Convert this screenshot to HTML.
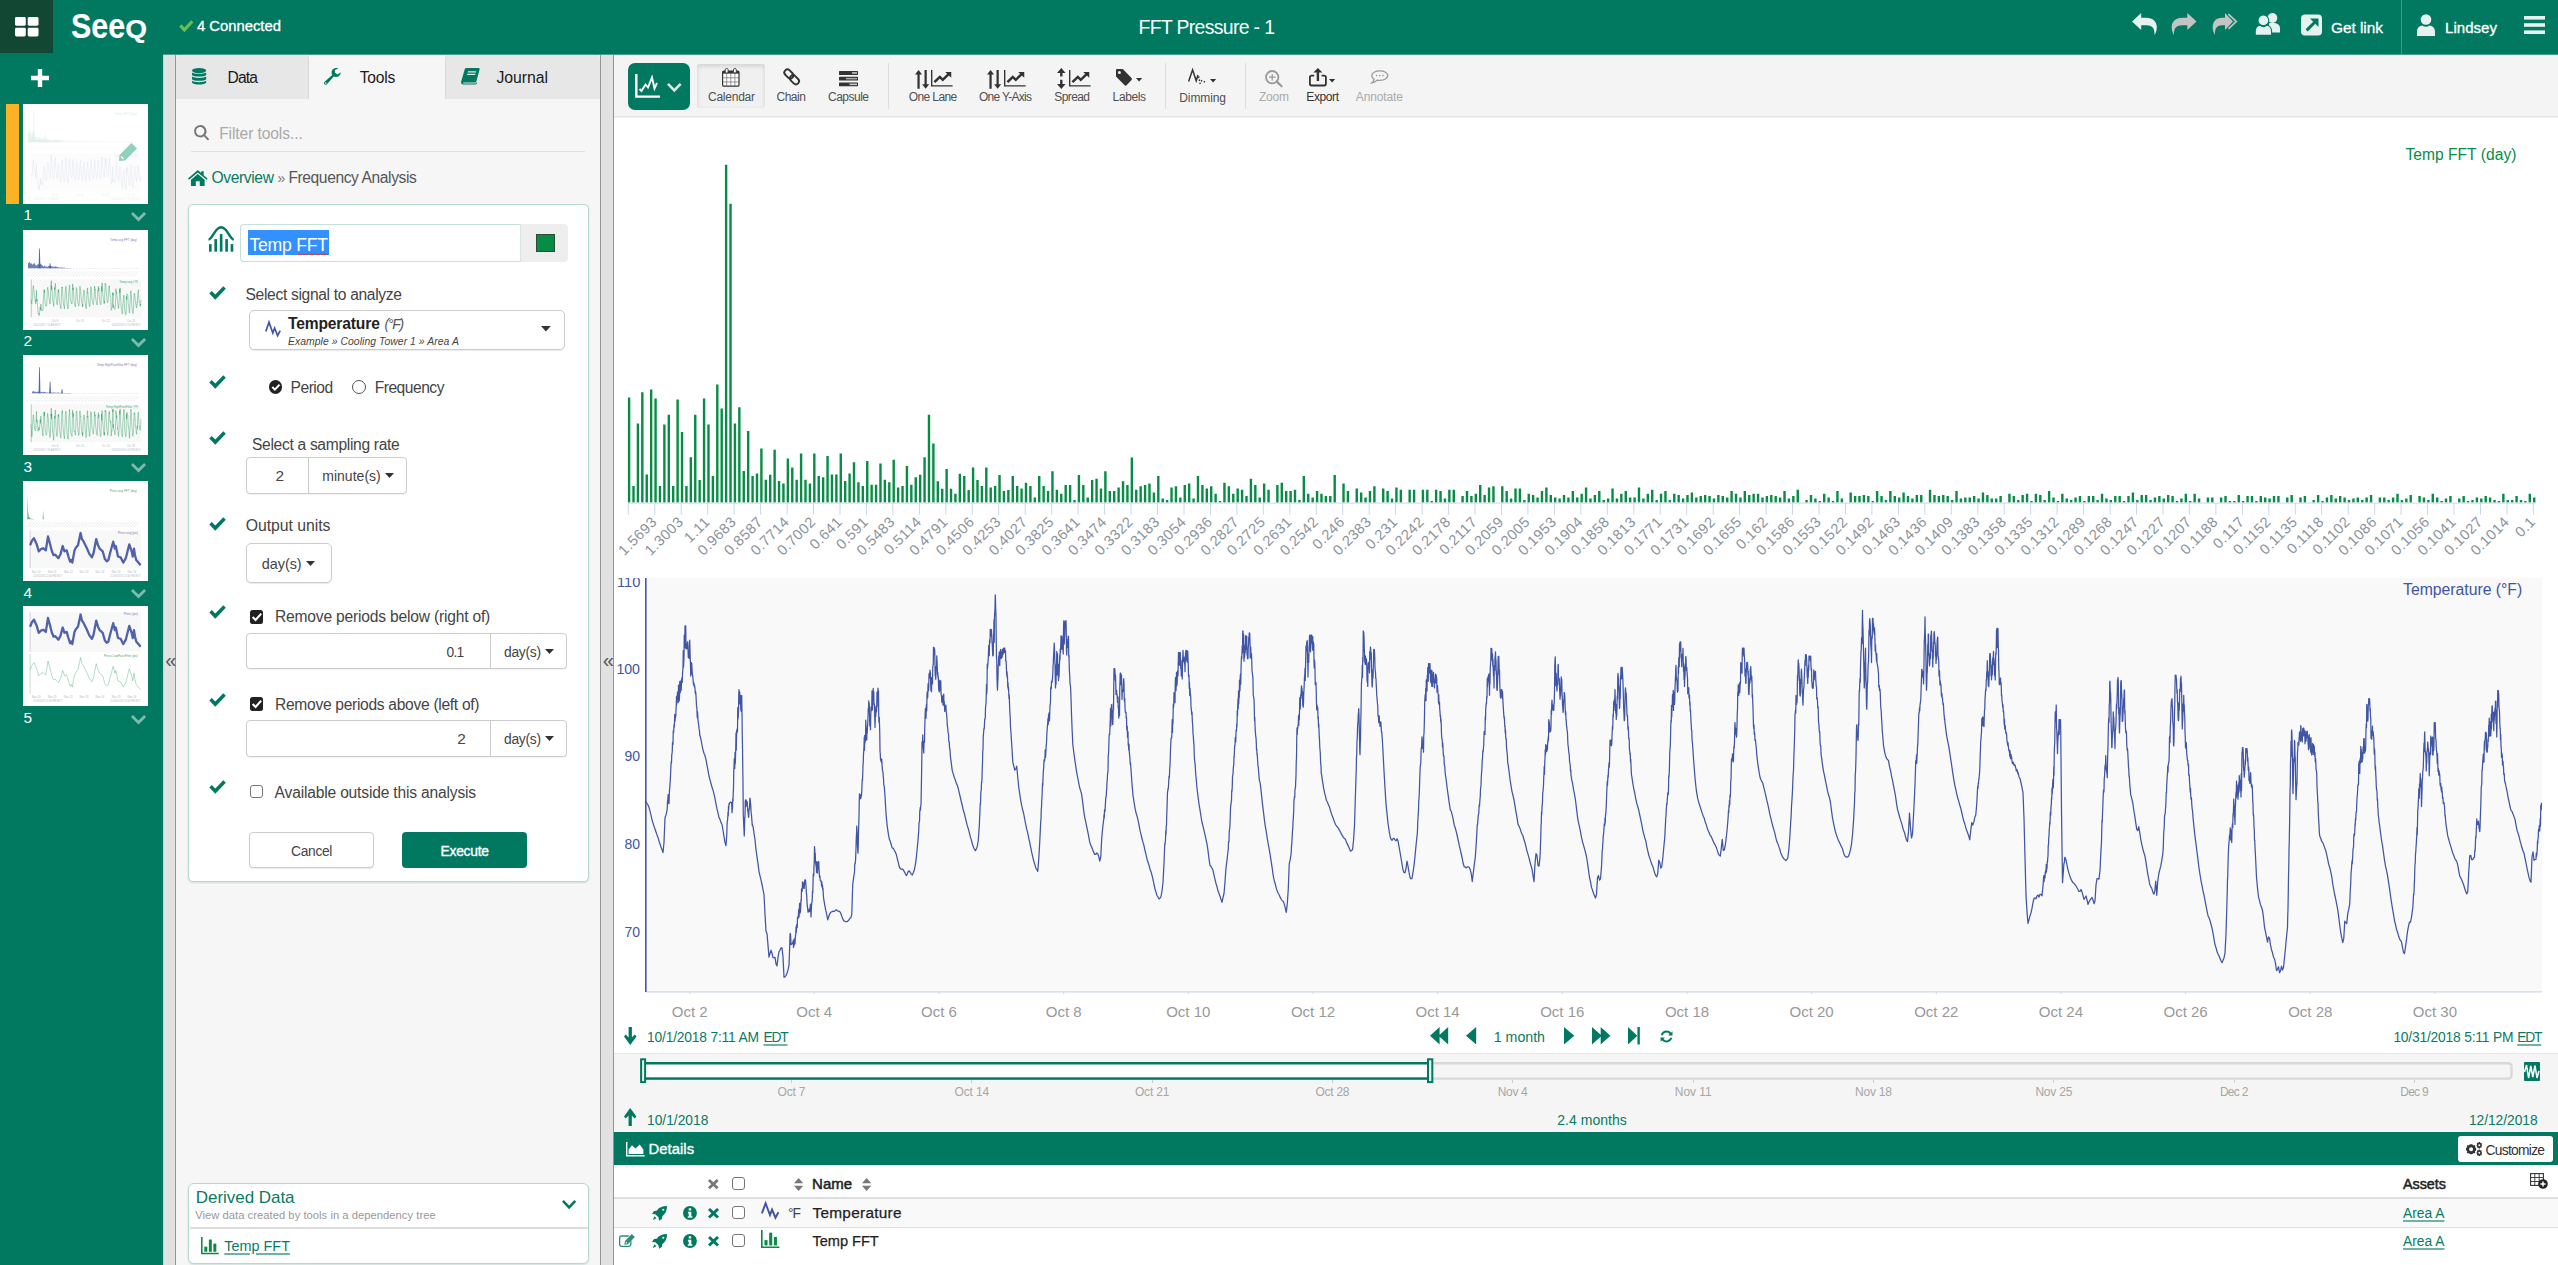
<!DOCTYPE html>
<html lang="en"><head><meta charset="utf-8"><title>FFT Pressure - 1</title><style>
html,body{margin:0;padding:0;}
body{width:2558px;height:1265px;position:relative;overflow:hidden;background:#fff;font-family:"Liberation Sans",sans-serif;}
.t{position:absolute;white-space:pre;line-height:1;}
svg{overflow:visible;}
</style></head>
<body>
<div id="main"><div style="position:absolute;left:614px;top:117px;width:1944px;height:461px;background:#fff;"></div>
<svg style="position:absolute;left:0;top:0" width="2558" height="578" viewBox="0 0 2558 578" font-family="Liberation Sans,sans-serif" font-size="14.6" letter-spacing="0.45" fill="#8a929c"><path d="M627.90 502.4V397.4h2.4V502.4zM632.31 502.4V486.0h2.4V502.4zM636.72 502.4V423.5h2.4V502.4zM641.13 502.4V392.2h2.4V502.4zM645.54 502.4V474.4h2.4V502.4zM649.95 502.4V389.6h2.4V502.4zM654.36 502.4V398.4h2.4V502.4zM658.77 502.4V486.0h2.4V502.4zM663.18 502.4V424.6h2.4V502.4zM667.59 502.4V414.7h2.4V502.4zM672.00 502.4V486.0h2.4V502.4zM676.41 502.4V399.5h2.4V502.4zM680.82 502.4V432.0h2.4V502.4zM685.23 502.4V486.0h2.4V502.4zM689.64 502.4V457.3h2.4V502.4zM694.05 502.4V414.7h2.4V502.4zM698.46 502.4V479.9h2.4V502.4zM702.87 502.4V398.4h2.4V502.4zM707.28 502.4V424.6h2.4V502.4zM711.69 502.4V476.1h2.4V502.4zM716.10 502.4V384.5h2.4V502.4zM720.51 502.4V408.6h2.4V502.4zM724.92 502.4V164.8h2.4V502.4zM729.33 502.4V203.8h2.4V502.4zM733.74 502.4V423.5h2.4V502.4zM738.15 502.4V407.3h2.4V502.4zM742.56 502.4V471.1h2.4V502.4zM746.97 502.4V430.9h2.4V502.4zM751.38 502.4V476.1h2.4V502.4zM755.79 502.4V473.6h2.4V502.4zM760.20 502.4V448.6h2.4V502.4zM764.61 502.4V479.7h2.4V502.4zM769.02 502.4V474.7h2.4V502.4zM773.43 502.4V449.7h2.4V502.4zM777.84 502.4V481.1h2.4V502.4zM782.25 502.4V483.6h2.4V502.4zM786.66 502.4V458.6h2.4V502.4zM791.07 502.4V467.4h2.4V502.4zM795.48 502.4V479.7h2.4V502.4zM799.89 502.4V453.4h2.4V502.4zM804.30 502.4V479.7h2.4V502.4zM808.71 502.4V483.6h2.4V502.4zM813.12 502.4V453.4h2.4V502.4zM817.53 502.4V476.1h2.4V502.4zM821.94 502.4V477.2h2.4V502.4zM826.35 502.4V455.9h2.4V502.4zM830.76 502.4V474.4h2.4V502.4zM835.17 502.4V474.4h2.4V502.4zM839.58 502.4V453.4h2.4V502.4zM843.99 502.4V481.1h2.4V502.4zM848.40 502.4V473.6h2.4V502.4zM852.81 502.4V462.2h2.4V502.4zM857.22 502.4V482.2h2.4V502.4zM861.63 502.4V486.0h2.4V502.4zM866.04 502.4V461.1h2.4V502.4zM870.45 502.4V484.7h2.4V502.4zM874.86 502.4V484.7h2.4V502.4zM879.27 502.4V463.6h2.4V502.4zM883.68 502.4V479.7h2.4V502.4zM888.09 502.4V482.2h2.4V502.4zM892.50 502.4V459.7h2.4V502.4zM896.91 502.4V487.4h2.4V502.4zM901.32 502.4V486.0h2.4V502.4zM905.73 502.4V466.1h2.4V502.4zM910.14 502.4V484.7h2.4V502.4zM914.55 502.4V477.2h2.4V502.4zM918.96 502.4V474.7h2.4V502.4zM923.37 502.4V457.3h2.4V502.4zM927.78 502.4V414.7h2.4V502.4zM932.19 502.4V443.6h2.4V502.4zM936.60 502.4V481.3h2.4V502.4zM941.01 502.4V488.8h2.4V502.4zM945.42 502.4V468.9h2.4V502.4zM949.83 502.4V488.8h2.4V502.4zM954.24 502.4V493.7h2.4V502.4zM958.65 502.4V473.8h2.4V502.4zM963.06 502.4V476.1h2.4V502.4zM967.47 502.4V489.9h2.4V502.4zM971.88 502.4V467.5h2.4V502.4zM976.29 502.4V479.9h2.4V502.4zM980.70 502.4V486.0h2.4V502.4zM985.11 502.4V467.5h2.4V502.4zM989.52 502.4V487.6h2.4V502.4zM993.93 502.4V486.0h2.4V502.4zM998.34 502.4V475.0h2.4V502.4zM1002.75 502.4V491.1h2.4V502.4zM1007.16 502.4V489.9h2.4V502.4zM1011.57 502.4V476.1h2.4V502.4zM1015.98 502.4V486.0h2.4V502.4zM1020.39 502.4V488.6h2.4V502.4zM1024.80 502.4V482.7h2.4V502.4zM1029.21 502.4V486.0h2.4V502.4zM1033.62 502.4V497.4h2.4V502.4zM1038.03 502.4V476.1h2.4V502.4zM1042.44 502.4V486.0h2.4V502.4zM1046.85 502.4V491.1h2.4V502.4zM1051.26 502.4V471.2h2.4V502.4zM1055.67 502.4V489.7h2.4V502.4zM1060.08 502.4V493.7h2.4V502.4zM1064.49 502.4V484.9h2.4V502.4zM1068.90 502.4V484.9h2.4V502.4zM1073.31 502.4V499.9h2.4V502.4zM1077.72 502.4V475.0h2.4V502.4zM1082.13 502.4V484.9h2.4V502.4zM1086.54 502.4V497.4h2.4V502.4zM1090.95 502.4V479.9h2.4V502.4zM1095.36 502.4V478.7h2.4V502.4zM1099.77 502.4V488.6h2.4V502.4zM1104.18 502.4V471.2h2.4V502.4zM1108.59 502.4V491.1h2.4V502.4zM1113.00 502.4V491.1h2.4V502.4zM1117.41 502.4V487.6h2.4V502.4zM1121.82 502.4V481.3h2.4V502.4zM1126.23 502.4V484.9h2.4V502.4zM1130.64 502.4V457.6h2.4V502.4zM1135.05 502.4V489.7h2.4V502.4zM1139.46 502.4V486.2h2.4V502.4zM1143.87 502.4V484.9h2.4V502.4zM1148.28 502.4V483.6h2.4V502.4zM1152.69 502.4V492.6h2.4V502.4zM1157.10 502.4V476.1h2.4V502.4zM1161.51 502.4V498.6h2.4V502.4zM1165.92 502.4V499.9h2.4V502.4zM1170.33 502.4V487.6h2.4V502.4zM1174.74 502.4V486.2h2.4V502.4zM1179.15 502.4V497.4h2.4V502.4zM1183.56 502.4V484.9h2.4V502.4zM1187.97 502.4V483.6h2.4V502.4zM1192.38 502.4V498.6h2.4V502.4zM1196.79 502.4V476.1h2.4V502.4zM1201.20 502.4V484.9h2.4V502.4zM1205.61 502.4V488.6h2.4V502.4zM1210.02 502.4V486.2h2.4V502.4zM1214.43 502.4V493.7h2.4V502.4zM1218.84 502.4V501.0h2.4V502.4zM1223.25 502.4V482.7h2.4V502.4zM1227.66 502.4V486.2h2.4V502.4zM1232.07 502.4V493.7h2.4V502.4zM1236.48 502.4V488.6h2.4V502.4zM1240.89 502.4V489.7h2.4V502.4zM1245.30 502.4V496.1h2.4V502.4zM1249.71 502.4V478.7h2.4V502.4zM1254.12 502.4V484.9h2.4V502.4zM1258.53 502.4V497.4h2.4V502.4zM1262.94 502.4V483.6h2.4V502.4zM1267.35 502.4V489.7h2.4V502.4zM1276.17 502.4V484.9h2.4V502.4zM1280.58 502.4V482.7h2.4V502.4zM1284.99 502.4V491.1h2.4V502.4zM1289.40 502.4V491.1h2.4V502.4zM1293.81 502.4V489.7h2.4V502.4zM1298.22 502.4V499.9h2.4V502.4zM1302.63 502.4V476.1h2.4V502.4zM1307.04 502.4V493.7h2.4V502.4zM1311.45 502.4V497.4h2.4V502.4zM1315.86 502.4V491.1h2.4V502.4zM1320.27 502.4V493.7h2.4V502.4zM1324.68 502.4V496.1h2.4V502.4zM1329.09 502.4V496.1h2.4V502.4zM1333.50 502.4V475.0h2.4V502.4zM1342.32 502.4V483.6h2.4V502.4zM1346.73 502.4V491.1h2.4V502.4zM1355.55 502.4V488.6h2.4V502.4zM1359.96 502.4V492.4h2.4V502.4zM1364.37 502.4V497.4h2.4V502.4zM1368.78 502.4V491.1h2.4V502.4zM1373.19 502.4V486.2h2.4V502.4zM1382.01 502.4V488.6h2.4V502.4zM1386.42 502.4V491.1h2.4V502.4zM1390.83 502.4V498.6h2.4V502.4zM1395.24 502.4V487.6h2.4V502.4zM1399.65 502.4V489.7h2.4V502.4zM1408.47 502.4V489.7h2.4V502.4zM1412.88 502.4V489.7h2.4V502.4zM1421.70 502.4V489.7h2.4V502.4zM1426.11 502.4V489.7h2.4V502.4zM1430.52 502.4V501.0h2.4V502.4zM1434.93 502.4V489.7h2.4V502.4zM1439.34 502.4V491.1h2.4V502.4zM1443.75 502.4V498.6h2.4V502.4zM1448.16 502.4V489.7h2.4V502.4zM1452.57 502.4V489.7h2.4V502.4zM1461.39 502.4V496.1h2.4V502.4zM1465.80 502.4V491.1h2.4V502.4zM1470.21 502.4V496.1h2.4V502.4zM1474.62 502.4V493.7h2.4V502.4zM1479.03 502.4V484.9h2.4V502.4zM1483.44 502.4V494.9h2.4V502.4zM1487.85 502.4V487.6h2.4V502.4zM1492.26 502.4V486.2h2.4V502.4zM1501.08 502.4V486.2h2.4V502.4zM1505.49 502.4V491.1h2.4V502.4zM1509.90 502.4V498.6h2.4V502.4zM1514.31 502.4V488.6h2.4V502.4zM1518.72 502.4V488.6h2.4V502.4zM1523.13 502.4V499.9h2.4V502.4zM1527.54 502.4V493.7h2.4V502.4zM1531.95 502.4V494.9h2.4V502.4zM1536.36 502.4V497.4h2.4V502.4zM1540.77 502.4V491.1h2.4V502.4zM1545.18 502.4V487.6h2.4V502.4zM1549.59 502.4V494.9h2.4V502.4zM1554.00 502.4V497.4h2.4V502.4zM1558.41 502.4V498.6h2.4V502.4zM1562.82 502.4V494.9h2.4V502.4zM1567.23 502.4V497.4h2.4V502.4zM1571.64 502.4V491.1h2.4V502.4zM1576.05 502.4V497.4h2.4V502.4zM1580.46 502.4V493.7h2.4V502.4zM1584.87 502.4V487.6h2.4V502.4zM1589.28 502.4V498.6h2.4V502.4zM1593.69 502.4V494.9h2.4V502.4zM1598.10 502.4V491.1h2.4V502.4zM1602.51 502.4V499.9h2.4V502.4zM1606.92 502.4V498.6h2.4V502.4zM1611.33 502.4V488.6h2.4V502.4zM1615.74 502.4V498.6h2.4V502.4zM1620.15 502.4V493.7h2.4V502.4zM1624.56 502.4V491.1h2.4V502.4zM1628.97 502.4V497.4h2.4V502.4zM1633.38 502.4V497.4h2.4V502.4zM1637.79 502.4V487.6h2.4V502.4zM1642.20 502.4V498.6h2.4V502.4zM1646.61 502.4V493.7h2.4V502.4zM1651.02 502.4V489.7h2.4V502.4zM1655.43 502.4V499.9h2.4V502.4zM1659.84 502.4V493.7h2.4V502.4zM1664.25 502.4V491.1h2.4V502.4zM1668.66 502.4V499.9h2.4V502.4zM1673.07 502.4V493.7h2.4V502.4zM1677.48 502.4V494.9h2.4V502.4zM1681.89 502.4V498.6h2.4V502.4zM1686.30 502.4V494.9h2.4V502.4zM1690.71 502.4V492.4h2.4V502.4zM1695.12 502.4V497.4h2.4V502.4zM1699.53 502.4V496.1h2.4V502.4zM1703.94 502.4V494.9h2.4V502.4zM1708.35 502.4V496.1h2.4V502.4zM1712.76 502.4V498.6h2.4V502.4zM1717.17 502.4V494.9h2.4V502.4zM1721.58 502.4V496.1h2.4V502.4zM1725.99 502.4V497.4h2.4V502.4zM1730.40 502.4V491.1h2.4V502.4zM1734.81 502.4V493.7h2.4V502.4zM1739.22 502.4V497.4h2.4V502.4zM1743.63 502.4V491.1h2.4V502.4zM1748.04 502.4V494.9h2.4V502.4zM1752.45 502.4V493.7h2.4V502.4zM1756.86 502.4V493.7h2.4V502.4zM1761.27 502.4V497.4h2.4V502.4zM1765.68 502.4V496.1h2.4V502.4zM1770.09 502.4V494.9h2.4V502.4zM1774.50 502.4V496.1h2.4V502.4zM1778.91 502.4V497.4h2.4V502.4zM1783.32 502.4V491.1h2.4V502.4zM1787.73 502.4V498.6h2.4V502.4zM1792.14 502.4V496.1h2.4V502.4zM1796.55 502.4V489.7h2.4V502.4zM1805.37 502.4V499.9h2.4V502.4zM1809.78 502.4V494.9h2.4V502.4zM1814.19 502.4V498.6h2.4V502.4zM1818.60 502.4V501.0h2.4V502.4zM1823.01 502.4V493.7h2.4V502.4zM1827.42 502.4V497.4h2.4V502.4zM1831.83 502.4V501.0h2.4V502.4zM1836.24 502.4V491.1h2.4V502.4zM1840.65 502.4V498.6h2.4V502.4zM1849.47 502.4V492.4h2.4V502.4zM1853.88 502.4V496.1h2.4V502.4zM1858.29 502.4V496.1h2.4V502.4zM1862.70 502.4V494.9h2.4V502.4zM1867.11 502.4V496.1h2.4V502.4zM1871.52 502.4V501.0h2.4V502.4zM1875.93 502.4V491.1h2.4V502.4zM1880.34 502.4V496.1h2.4V502.4zM1884.75 502.4V499.9h2.4V502.4zM1889.16 502.4V491.1h2.4V502.4zM1893.57 502.4V496.1h2.4V502.4zM1897.98 502.4V497.4h2.4V502.4zM1902.39 502.4V492.4h2.4V502.4zM1906.80 502.4V496.1h2.4V502.4zM1911.21 502.4V498.6h2.4V502.4zM1915.62 502.4V494.9h2.4V502.4zM1920.03 502.4V494.9h2.4V502.4zM1928.85 502.4V489.7h2.4V502.4zM1933.26 502.4V494.9h2.4V502.4zM1937.67 502.4V496.1h2.4V502.4zM1942.08 502.4V494.9h2.4V502.4zM1946.49 502.4V496.1h2.4V502.4zM1950.90 502.4V499.9h2.4V502.4zM1955.31 502.4V491.1h2.4V502.4zM1959.72 502.4V498.6h2.4V502.4zM1964.13 502.4V497.4h2.4V502.4zM1968.54 502.4V497.4h2.4V502.4zM1972.95 502.4V496.1h2.4V502.4zM1977.36 502.4V498.6h2.4V502.4zM1981.77 502.4V492.4h2.4V502.4zM1986.18 502.4V494.9h2.4V502.4zM1990.59 502.4V498.6h2.4V502.4zM1995.00 502.4V498.6h2.4V502.4zM1999.41 502.4V496.1h2.4V502.4zM2008.23 502.4V493.7h2.4V502.4zM2012.64 502.4V496.1h2.4V502.4zM2017.05 502.4V499.9h2.4V502.4zM2021.46 502.4V494.9h2.4V502.4zM2025.87 502.4V493.7h2.4V502.4zM2030.28 502.4V501.0h2.4V502.4zM2034.69 502.4V493.7h2.4V502.4zM2039.10 502.4V494.9h2.4V502.4zM2043.51 502.4V499.9h2.4V502.4zM2047.92 502.4V491.1h2.4V502.4zM2052.33 502.4V497.4h2.4V502.4zM2056.74 502.4V501.0h2.4V502.4zM2061.15 502.4V493.7h2.4V502.4zM2065.56 502.4V498.6h2.4V502.4zM2069.97 502.4V499.9h2.4V502.4zM2074.38 502.4V497.4h2.4V502.4zM2078.79 502.4V496.1h2.4V502.4zM2083.20 502.4V501.0h2.4V502.4zM2087.61 502.4V496.1h2.4V502.4zM2092.02 502.4V496.1h2.4V502.4zM2096.43 502.4V499.9h2.4V502.4zM2100.84 502.4V493.7h2.4V502.4zM2105.25 502.4V498.6h2.4V502.4zM2109.66 502.4V499.9h2.4V502.4zM2114.07 502.4V496.1h2.4V502.4zM2118.48 502.4V496.1h2.4V502.4zM2122.89 502.4V501.0h2.4V502.4zM2127.30 502.4V496.1h2.4V502.4zM2131.71 502.4V492.4h2.4V502.4zM2136.12 502.4V499.9h2.4V502.4zM2140.53 502.4V494.9h2.4V502.4zM2144.94 502.4V494.9h2.4V502.4zM2149.35 502.4V499.9h2.4V502.4zM2153.76 502.4V497.4h2.4V502.4zM2158.17 502.4V496.1h2.4V502.4zM2162.58 502.4V498.6h2.4V502.4zM2166.99 502.4V494.9h2.4V502.4zM2171.40 502.4V496.1h2.4V502.4zM2175.81 502.4V501.0h2.4V502.4zM2180.22 502.4V498.6h2.4V502.4zM2184.63 502.4V493.7h2.4V502.4zM2189.04 502.4V501.0h2.4V502.4zM2193.45 502.4V493.7h2.4V502.4zM2197.86 502.4V498.6h2.4V502.4zM2206.68 502.4V497.4h2.4V502.4zM2211.09 502.4V497.4h2.4V502.4zM2219.91 502.4V497.4h2.4V502.4zM2224.32 502.4V496.1h2.4V502.4zM2228.73 502.4V501.0h2.4V502.4zM2233.14 502.4V501.0h2.4V502.4zM2237.55 502.4V494.9h2.4V502.4zM2241.96 502.4V501.0h2.4V502.4zM2246.37 502.4V496.1h2.4V502.4zM2250.78 502.4V496.1h2.4V502.4zM2255.19 502.4V501.0h2.4V502.4zM2259.60 502.4V496.1h2.4V502.4zM2264.01 502.4V497.4h2.4V502.4zM2268.42 502.4V498.6h2.4V502.4zM2272.83 502.4V496.1h2.4V502.4zM2277.24 502.4V496.1h2.4V502.4zM2286.06 502.4V497.4h2.4V502.4zM2290.47 502.4V494.9h2.4V502.4zM2299.29 502.4V497.4h2.4V502.4zM2303.70 502.4V496.1h2.4V502.4zM2312.52 502.4V499.9h2.4V502.4zM2316.93 502.4V494.9h2.4V502.4zM2321.34 502.4V501.0h2.4V502.4zM2325.75 502.4V497.4h2.4V502.4zM2330.16 502.4V494.9h2.4V502.4zM2334.57 502.4V498.6h2.4V502.4zM2338.98 502.4V496.1h2.4V502.4zM2343.39 502.4V497.4h2.4V502.4zM2347.80 502.4V499.9h2.4V502.4zM2352.21 502.4V498.6h2.4V502.4zM2356.62 502.4V497.4h2.4V502.4zM2361.03 502.4V499.9h2.4V502.4zM2365.44 502.4V497.4h2.4V502.4zM2369.85 502.4V494.9h2.4V502.4zM2378.67 502.4V497.4h2.4V502.4zM2383.08 502.4V497.4h2.4V502.4zM2387.49 502.4V499.9h2.4V502.4zM2391.90 502.4V497.4h2.4V502.4zM2396.31 502.4V493.7h2.4V502.4zM2400.72 502.4V499.9h2.4V502.4zM2405.13 502.4V498.6h2.4V502.4zM2409.54 502.4V494.9h2.4V502.4zM2418.36 502.4V496.1h2.4V502.4zM2422.77 502.4V497.4h2.4V502.4zM2427.18 502.4V499.9h2.4V502.4zM2431.59 502.4V493.7h2.4V502.4zM2436.00 502.4V497.4h2.4V502.4zM2440.41 502.4V501.0h2.4V502.4zM2444.82 502.4V498.6h2.4V502.4zM2449.23 502.4V496.1h2.4V502.4zM2458.05 502.4V498.6h2.4V502.4zM2462.46 502.4V496.1h2.4V502.4zM2466.87 502.4V501.0h2.4V502.4zM2471.28 502.4V499.9h2.4V502.4zM2475.69 502.4V497.4h2.4V502.4zM2480.10 502.4V498.6h2.4V502.4zM2484.51 502.4V496.1h2.4V502.4zM2488.92 502.4V497.4h2.4V502.4zM2493.33 502.4V499.9h2.4V502.4zM2497.74 502.4V501.0h2.4V502.4zM2502.15 502.4V493.7h2.4V502.4zM2506.56 502.4V499.9h2.4V502.4zM2510.97 502.4V499.9h2.4V502.4zM2515.38 502.4V496.1h2.4V502.4zM2519.79 502.4V499.9h2.4V502.4zM2524.20 502.4V501.0h2.4V502.4zM2528.61 502.4V493.7h2.4V502.4zM2533.02 502.4V497.4h2.4V502.4z" fill="#068c45"/><path d="M627.8 503.1H2535.4" stroke="#ccd6eb" stroke-width="1" fill="none"/><path d="M628.3 503V514.8M654.8 503V514.8M681.2 503V514.8M707.7 503V514.8M734.1 503V514.8M760.6 503V514.8M787.1 503V514.8M813.5 503V514.8M840.0 503V514.8M866.4 503V514.8M892.9 503V514.8M919.4 503V514.8M945.8 503V514.8M972.3 503V514.8M998.7 503V514.8M1025.2 503V514.8M1051.7 503V514.8M1078.1 503V514.8M1104.6 503V514.8M1131.0 503V514.8M1157.5 503V514.8M1184.0 503V514.8M1210.4 503V514.8M1236.9 503V514.8M1263.3 503V514.8M1289.8 503V514.8M1316.3 503V514.8M1342.7 503V514.8M1369.2 503V514.8M1395.6 503V514.8M1422.1 503V514.8M1448.6 503V514.8M1475.0 503V514.8M1501.5 503V514.8M1527.9 503V514.8M1554.4 503V514.8M1580.9 503V514.8M1607.3 503V514.8M1633.8 503V514.8M1660.2 503V514.8M1686.7 503V514.8M1713.2 503V514.8M1739.6 503V514.8M1766.1 503V514.8M1792.5 503V514.8M1819.0 503V514.8M1845.5 503V514.8M1871.9 503V514.8M1898.4 503V514.8M1924.8 503V514.8M1951.3 503V514.8M1977.8 503V514.8M2004.2 503V514.8M2030.7 503V514.8M2057.1 503V514.8M2083.6 503V514.8M2110.1 503V514.8M2136.5 503V514.8M2163.0 503V514.8M2189.4 503V514.8M2215.9 503V514.8M2242.4 503V514.8M2268.8 503V514.8M2295.3 503V514.8M2321.7 503V514.8M2348.2 503V514.8M2374.7 503V514.8M2401.1 503V514.8M2427.6 503V514.8M2454.0 503V514.8M2480.5 503V514.8M2507.0 503V514.8M2533.4 503V514.8" stroke="#ccd6eb" stroke-width="1" fill="none"/><text x="657.8" y="522.8" text-anchor="end" transform="rotate(-45 657.8 522.8)">1.5693</text><text x="684.2" y="522.8" text-anchor="end" transform="rotate(-45 684.2 522.8)">1.3003</text><text x="710.7" y="522.8" text-anchor="end" transform="rotate(-45 710.7 522.8)">1.11</text><text x="737.1" y="522.8" text-anchor="end" transform="rotate(-45 737.1 522.8)">0.9683</text><text x="763.6" y="522.8" text-anchor="end" transform="rotate(-45 763.6 522.8)">0.8587</text><text x="790.1" y="522.8" text-anchor="end" transform="rotate(-45 790.1 522.8)">0.7714</text><text x="816.5" y="522.8" text-anchor="end" transform="rotate(-45 816.5 522.8)">0.7002</text><text x="843.0" y="522.8" text-anchor="end" transform="rotate(-45 843.0 522.8)">0.641</text><text x="869.4" y="522.8" text-anchor="end" transform="rotate(-45 869.4 522.8)">0.591</text><text x="895.9" y="522.8" text-anchor="end" transform="rotate(-45 895.9 522.8)">0.5483</text><text x="922.4" y="522.8" text-anchor="end" transform="rotate(-45 922.4 522.8)">0.5114</text><text x="948.8" y="522.8" text-anchor="end" transform="rotate(-45 948.8 522.8)">0.4791</text><text x="975.3" y="522.8" text-anchor="end" transform="rotate(-45 975.3 522.8)">0.4506</text><text x="1001.7" y="522.8" text-anchor="end" transform="rotate(-45 1001.7 522.8)">0.4253</text><text x="1028.2" y="522.8" text-anchor="end" transform="rotate(-45 1028.2 522.8)">0.4027</text><text x="1054.7" y="522.8" text-anchor="end" transform="rotate(-45 1054.7 522.8)">0.3825</text><text x="1081.1" y="522.8" text-anchor="end" transform="rotate(-45 1081.1 522.8)">0.3641</text><text x="1107.6" y="522.8" text-anchor="end" transform="rotate(-45 1107.6 522.8)">0.3474</text><text x="1134.0" y="522.8" text-anchor="end" transform="rotate(-45 1134.0 522.8)">0.3322</text><text x="1160.5" y="522.8" text-anchor="end" transform="rotate(-45 1160.5 522.8)">0.3183</text><text x="1187.0" y="522.8" text-anchor="end" transform="rotate(-45 1187.0 522.8)">0.3054</text><text x="1213.4" y="522.8" text-anchor="end" transform="rotate(-45 1213.4 522.8)">0.2936</text><text x="1239.9" y="522.8" text-anchor="end" transform="rotate(-45 1239.9 522.8)">0.2827</text><text x="1266.3" y="522.8" text-anchor="end" transform="rotate(-45 1266.3 522.8)">0.2725</text><text x="1292.8" y="522.8" text-anchor="end" transform="rotate(-45 1292.8 522.8)">0.2631</text><text x="1319.3" y="522.8" text-anchor="end" transform="rotate(-45 1319.3 522.8)">0.2542</text><text x="1345.7" y="522.8" text-anchor="end" transform="rotate(-45 1345.7 522.8)">0.246</text><text x="1372.2" y="522.8" text-anchor="end" transform="rotate(-45 1372.2 522.8)">0.2383</text><text x="1398.6" y="522.8" text-anchor="end" transform="rotate(-45 1398.6 522.8)">0.231</text><text x="1425.1" y="522.8" text-anchor="end" transform="rotate(-45 1425.1 522.8)">0.2242</text><text x="1451.6" y="522.8" text-anchor="end" transform="rotate(-45 1451.6 522.8)">0.2178</text><text x="1478.0" y="522.8" text-anchor="end" transform="rotate(-45 1478.0 522.8)">0.2117</text><text x="1504.5" y="522.8" text-anchor="end" transform="rotate(-45 1504.5 522.8)">0.2059</text><text x="1530.9" y="522.8" text-anchor="end" transform="rotate(-45 1530.9 522.8)">0.2005</text><text x="1557.4" y="522.8" text-anchor="end" transform="rotate(-45 1557.4 522.8)">0.1953</text><text x="1583.9" y="522.8" text-anchor="end" transform="rotate(-45 1583.9 522.8)">0.1904</text><text x="1610.3" y="522.8" text-anchor="end" transform="rotate(-45 1610.3 522.8)">0.1858</text><text x="1636.8" y="522.8" text-anchor="end" transform="rotate(-45 1636.8 522.8)">0.1813</text><text x="1663.2" y="522.8" text-anchor="end" transform="rotate(-45 1663.2 522.8)">0.1771</text><text x="1689.7" y="522.8" text-anchor="end" transform="rotate(-45 1689.7 522.8)">0.1731</text><text x="1716.2" y="522.8" text-anchor="end" transform="rotate(-45 1716.2 522.8)">0.1692</text><text x="1742.6" y="522.8" text-anchor="end" transform="rotate(-45 1742.6 522.8)">0.1655</text><text x="1769.1" y="522.8" text-anchor="end" transform="rotate(-45 1769.1 522.8)">0.162</text><text x="1795.5" y="522.8" text-anchor="end" transform="rotate(-45 1795.5 522.8)">0.1586</text><text x="1822.0" y="522.8" text-anchor="end" transform="rotate(-45 1822.0 522.8)">0.1553</text><text x="1848.5" y="522.8" text-anchor="end" transform="rotate(-45 1848.5 522.8)">0.1522</text><text x="1874.9" y="522.8" text-anchor="end" transform="rotate(-45 1874.9 522.8)">0.1492</text><text x="1901.4" y="522.8" text-anchor="end" transform="rotate(-45 1901.4 522.8)">0.1463</text><text x="1927.8" y="522.8" text-anchor="end" transform="rotate(-45 1927.8 522.8)">0.1436</text><text x="1954.3" y="522.8" text-anchor="end" transform="rotate(-45 1954.3 522.8)">0.1409</text><text x="1980.8" y="522.8" text-anchor="end" transform="rotate(-45 1980.8 522.8)">0.1383</text><text x="2007.2" y="522.8" text-anchor="end" transform="rotate(-45 2007.2 522.8)">0.1358</text><text x="2033.7" y="522.8" text-anchor="end" transform="rotate(-45 2033.7 522.8)">0.1335</text><text x="2060.1" y="522.8" text-anchor="end" transform="rotate(-45 2060.1 522.8)">0.1312</text><text x="2086.6" y="522.8" text-anchor="end" transform="rotate(-45 2086.6 522.8)">0.1289</text><text x="2113.1" y="522.8" text-anchor="end" transform="rotate(-45 2113.1 522.8)">0.1268</text><text x="2139.5" y="522.8" text-anchor="end" transform="rotate(-45 2139.5 522.8)">0.1247</text><text x="2166.0" y="522.8" text-anchor="end" transform="rotate(-45 2166.0 522.8)">0.1227</text><text x="2192.4" y="522.8" text-anchor="end" transform="rotate(-45 2192.4 522.8)">0.1207</text><text x="2218.9" y="522.8" text-anchor="end" transform="rotate(-45 2218.9 522.8)">0.1188</text><text x="2245.4" y="522.8" text-anchor="end" transform="rotate(-45 2245.4 522.8)">0.117</text><text x="2271.8" y="522.8" text-anchor="end" transform="rotate(-45 2271.8 522.8)">0.1152</text><text x="2298.3" y="522.8" text-anchor="end" transform="rotate(-45 2298.3 522.8)">0.1135</text><text x="2324.7" y="522.8" text-anchor="end" transform="rotate(-45 2324.7 522.8)">0.1118</text><text x="2351.2" y="522.8" text-anchor="end" transform="rotate(-45 2351.2 522.8)">0.1102</text><text x="2377.7" y="522.8" text-anchor="end" transform="rotate(-45 2377.7 522.8)">0.1086</text><text x="2404.1" y="522.8" text-anchor="end" transform="rotate(-45 2404.1 522.8)">0.1071</text><text x="2430.6" y="522.8" text-anchor="end" transform="rotate(-45 2430.6 522.8)">0.1056</text><text x="2457.0" y="522.8" text-anchor="end" transform="rotate(-45 2457.0 522.8)">0.1041</text><text x="2483.5" y="522.8" text-anchor="end" transform="rotate(-45 2483.5 522.8)">0.1027</text><text x="2510.0" y="522.8" text-anchor="end" transform="rotate(-45 2510.0 522.8)">0.1014</text><text x="2536.4" y="522.8" text-anchor="end" transform="rotate(-45 2536.4 522.8)">0.1</text></svg>
<span class="t" style="left:2405.4px;top:146px;font-size:15.6px;line-height:17px;color:#068c45;letter-spacing:0.03px;">Temp FFT (day)</span><div style="position:absolute;left:614px;top:578px;width:1944px;height:475px;background:#fff;"></div>
<div style="position:absolute;left:646.5px;top:578px;width:1895.5px;height:413.5px;background:#f9f9f9;"></div>
<svg style="position:absolute;left:0;top:578px" width="2558" height="450" viewBox="0 578 2558 450" font-family="Liberation Sans,sans-serif"><path d="M646 991.9H2542" stroke="#ccd6eb" stroke-width="1.2" fill="none"/><path d="M689.7 992V994" stroke="#ccd6eb" stroke-width="1"/><text x="689.7" y="1016.5" text-anchor="middle" font-size="15" fill="#999">Oct 2</text><path d="M814.3 992V994" stroke="#ccd6eb" stroke-width="1"/><text x="814.3" y="1016.5" text-anchor="middle" font-size="15" fill="#999">Oct 4</text><path d="M939.0 992V994" stroke="#ccd6eb" stroke-width="1"/><text x="939.0" y="1016.5" text-anchor="middle" font-size="15" fill="#999">Oct 6</text><path d="M1063.7 992V994" stroke="#ccd6eb" stroke-width="1"/><text x="1063.7" y="1016.5" text-anchor="middle" font-size="15" fill="#999">Oct 8</text><path d="M1188.3 992V994" stroke="#ccd6eb" stroke-width="1"/><text x="1188.3" y="1016.5" text-anchor="middle" font-size="15" fill="#999">Oct 10</text><path d="M1313.0 992V994" stroke="#ccd6eb" stroke-width="1"/><text x="1313.0" y="1016.5" text-anchor="middle" font-size="15" fill="#999">Oct 12</text><path d="M1437.6 992V994" stroke="#ccd6eb" stroke-width="1"/><text x="1437.6" y="1016.5" text-anchor="middle" font-size="15" fill="#999">Oct 14</text><path d="M1562.3 992V994" stroke="#ccd6eb" stroke-width="1"/><text x="1562.3" y="1016.5" text-anchor="middle" font-size="15" fill="#999">Oct 16</text><path d="M1687.0 992V994" stroke="#ccd6eb" stroke-width="1"/><text x="1687.0" y="1016.5" text-anchor="middle" font-size="15" fill="#999">Oct 18</text><path d="M1811.6 992V994" stroke="#ccd6eb" stroke-width="1"/><text x="1811.6" y="1016.5" text-anchor="middle" font-size="15" fill="#999">Oct 20</text><path d="M1936.3 992V994" stroke="#ccd6eb" stroke-width="1"/><text x="1936.3" y="1016.5" text-anchor="middle" font-size="15" fill="#999">Oct 22</text><path d="M2060.9 992V994" stroke="#ccd6eb" stroke-width="1"/><text x="2060.9" y="1016.5" text-anchor="middle" font-size="15" fill="#999">Oct 24</text><path d="M2185.6 992V994" stroke="#ccd6eb" stroke-width="1"/><text x="2185.6" y="1016.5" text-anchor="middle" font-size="15" fill="#999">Oct 26</text><path d="M2310.3 992V994" stroke="#ccd6eb" stroke-width="1"/><text x="2310.3" y="1016.5" text-anchor="middle" font-size="15" fill="#999">Oct 28</text><path d="M2434.9 992V994" stroke="#ccd6eb" stroke-width="1"/><text x="2434.9" y="1016.5" text-anchor="middle" font-size="15" fill="#999">Oct 30</text><polyline points="646.0,801.5 647.0,803.5 648.0,805.0 649.0,807.4 650.0,811.2 651.0,815.4 652.0,819.7 653.0,823.1 654.0,826.3 655.0,829.0 656.0,832.0 657.0,834.9 658.0,837.4 659.0,841.1 660.0,844.0 661.0,847.0 662.0,849.5 663.0,852.6 664.0,842.2 665.0,817.8 666.0,814.9 667.0,810.6 667.25,808.3 667.5,801.8 667.75,800.5 668.0,797.1 668.25,794.5 668.5,802.8 668.75,802.3 669.0,803.7 669.25,795.0 669.5,790.5 669.75,787.2 670.0,783.6 670.25,781.3 670.5,776.1 670.75,770.2 671.0,764.7 671.25,761.8 671.5,762.9 671.75,754.5 672.0,754.0 672.25,751.3 672.5,742.5 672.75,743.8 673.0,744.6 673.25,730.9 673.5,732.9 673.75,730.4 674.0,724.7 674.25,727.2 674.5,722.5 674.75,714.3 675.0,721.2 675.25,718.1 675.5,716.9 675.75,716.7 676.0,709.4 676.25,705.8 676.5,696.4 676.75,704.2 677.0,697.2 677.25,697.1 677.5,692.0 677.75,692.6 678.0,693.9 678.25,702.5 678.5,685.2 678.75,686.9 679.0,695.1 679.25,700.9 679.5,695.7 679.75,681.8 680.0,681.1 680.25,692.7 680.5,686.1 680.75,681.3 681.0,690.6 681.25,688.9 681.5,680.9 681.75,678.9 682.0,677.6 682.25,682.4 682.5,673.8 682.75,670.7 683.0,668.0 683.25,650.7 683.5,667.3 683.75,662.1 684.0,656.2 684.25,635.2 684.5,640.9 684.75,647.7 685.0,625.8 685.25,630.4 685.5,636.0 685.75,625.8 686.0,648.7 686.25,643.1 686.5,643.3 686.75,648.9 687.0,648.8 687.25,644.2 687.5,648.1 687.75,641.6 688.0,646.6 688.25,657.5 688.5,655.9 688.75,651.4 689.0,658.0 689.25,658.4 689.5,646.1 689.75,640.2 690.0,651.1 690.25,659.0 690.5,666.3 690.75,676.1 691.0,665.1 691.25,674.1 691.5,662.5 691.75,663.8 692.0,669.2 692.25,673.0 692.5,675.0 692.75,676.2 693.0,678.8 693.25,682.2 693.5,684.8 693.75,682.6 694.0,684.7 694.25,686.3 694.5,684.8 694.75,687.9 695.0,687.7 695.25,693.3 695.5,691.3 695.75,692.3 696.0,696.0 696.25,700.4 696.5,706.2 696.75,706.4 697.0,711.5 697.25,717.7 697.5,711.7 697.75,715.4 698.0,720.0 698.25,722.2 698.5,723.9 698.75,724.9 699.0,728.4 699.25,729.8 699.5,730.8 699.75,735.5 700.0,735.5 701.0,739.6 702.0,745.0 703.0,750.0 704.0,753.2 705.0,755.8 706.0,759.3 707.0,765.3 708.0,770.4 709.0,776.0 710.0,779.9 711.0,783.5 712.0,787.3 713.0,790.1 714.0,794.2 715.0,798.5 716.0,803.8 717.0,808.9 718.0,812.9 719.0,817.6 720.0,819.4 721.0,822.6 722.0,824.5 723.0,830.1 724.0,836.6 725.0,842.5 726.0,845.7 726.75,835.0 727.0,827.6 727.25,821.2 727.5,820.9 727.75,817.7 728.0,812.3 728.25,815.7 728.5,806.1 728.75,809.2 729.0,804.2 729.25,803.1 729.5,804.1 729.75,802.7 730.75,802.0 731.5,802.6 731.75,804.9 732.0,812.7 732.25,809.8 732.5,807.8 732.75,798.8 733.0,801.3 733.25,792.4 733.5,788.5 733.75,770.5 734.0,767.6 734.25,759.0 734.5,766.5 734.75,768.5 735.0,752.3 735.25,763.6 735.5,757.8 735.75,747.4 736.0,732.9 736.25,750.2 736.5,736.9 736.75,729.9 737.0,733.0 737.25,728.6 737.5,731.4 737.75,707.7 738.0,718.9 738.25,716.8 738.5,711.7 738.75,695.4 739.0,689.7 739.25,702.6 739.5,693.3 739.75,692.0 740.0,704.1 740.25,699.3 740.5,695.7 740.75,709.9 741.0,702.9 741.25,711.4 741.5,702.6 741.75,695.4 742.0,714.7 742.25,734.4 742.5,746.6 742.75,766.5 743.0,783.1 743.25,814.6 744.25,836.0 744.5,828.8 744.75,817.1 745.0,817.3 745.25,801.9 745.5,799.9 745.75,800.2 746.0,806.6 746.25,800.2 746.5,801.9 746.75,801.4 747.0,801.6 747.25,802.0 747.5,806.1 747.75,811.3 748.0,810.8 748.25,814.1 748.5,817.3 748.75,816.5 749.0,808.9 749.25,809.2 749.5,808.5 749.75,799.8 750.0,798.1 750.25,799.7 750.5,803.0 750.75,805.3 751.0,810.7 751.25,813.4 751.5,815.2 751.75,818.8 752.0,821.9 752.25,825.3 752.5,824.6 752.75,825.5 753.0,826.9 753.25,827.3 753.5,830.2 753.75,830.4 754.0,833.3 755.0,839.5 756.0,849.6 757.0,856.9 758.0,863.7 759.0,871.6 760.0,875.9 761.0,879.8 762.0,884.5 763.0,889.7 764.0,894.3 765.0,914.2 766.0,931.2 767.0,933.6 768.0,945.1 769.0,957.1 770.0,953.5 771.0,950.1 772.0,953.4 773.0,957.7 774.0,957.8 775.0,957.3 776.0,964.0 777.0,965.9 778.0,957.6 779.0,951.6 780.0,950.3 781.0,947.8 782.0,947.9 783.0,956.8 784.0,977.2 785.0,976.9 786.0,975.5 787.0,973.3 788.0,969.9 789.0,965.2 789.75,944.7 790.0,935.1 790.25,933.4 790.5,934.2 790.75,938.6 791.0,944.6 792.0,944.0 793.0,941.9 793.25,940.3 793.5,947.5 793.75,945.9 794.0,944.9 794.25,938.9 794.5,944.6 794.75,942.4 795.0,943.5 795.25,938.4 795.5,935.3 795.75,934.9 796.0,926.9 796.25,932.4 796.5,928.7 796.75,924.3 797.0,927.7 797.25,927.3 797.5,917.3 797.75,917.5 798.0,918.5 798.25,916.5 798.5,913.0 798.75,909.5 799.0,917.2 799.25,913.4 799.5,904.8 799.75,903.2 800.0,913.1 800.25,909.7 800.5,911.9 800.75,907.2 801.0,899.7 801.25,901.3 801.5,889.0 801.75,891.0 802.0,891.2 802.25,891.2 802.5,881.8 802.75,884.8 803.0,887.7 803.25,887.0 803.5,888.2 803.75,885.6 804.0,882.5 804.25,888.3 804.5,884.0 804.75,880.2 805.0,879.9 805.25,881.1 805.5,879.9 805.75,882.9 806.0,886.4 806.25,890.9 806.5,894.1 806.75,895.9 807.0,902.1 807.25,905.7 807.5,907.2 807.75,908.9 808.0,912.2 809.0,911.2 809.25,909.2 809.5,910.4 809.75,908.3 810.0,911.7 810.25,906.1 810.5,904.1 810.75,907.7 811.0,916.9 811.25,911.2 811.5,906.2 811.75,902.8 812.0,902.6 812.25,897.6 812.5,891.1 812.75,893.0 813.0,884.0 813.25,874.5 813.5,873.3 813.75,875.8 814.0,866.1 814.25,861.6 814.5,846.6 814.75,849.1 815.0,858.5 815.25,853.2 815.5,863.0 815.75,862.5 816.0,866.3 816.25,861.6 816.5,872.4 816.75,869.2 817.0,862.2 817.25,863.9 817.5,873.1 817.75,862.2 818.0,868.4 818.25,869.1 818.5,865.2 818.75,861.5 819.0,869.6 819.25,872.1 819.5,877.1 819.75,877.4 820.0,876.1 820.25,880.5 820.5,880.5 820.75,880.5 821.0,881.2 821.25,881.5 821.5,885.8 821.75,881.5 822.0,884.3 822.25,887.4 822.5,885.2 822.75,889.8 823.0,888.2 823.25,893.0 823.5,897.4 823.75,899.1 824.75,905.2 825.75,910.4 826.75,914.6 827.75,919.8 828.75,916.5 829.75,913.8 830.75,912.2 831.75,912.0 832.75,911.1 833.75,911.5 834.75,911.1 835.75,909.9 836.75,910.2 837.75,911.1 838.75,911.1 839.75,911.7 840.75,913.2 841.75,916.2 842.75,918.9 843.75,920.8 844.75,921.2 845.75,921.7 846.75,921.6 847.75,921.1 848.75,920.2 849.75,918.6 850.75,917.7 851.75,914.8 852.75,884.2 853.75,876.9 854.25,873.6 854.5,872.4 854.75,864.8 855.0,863.2 855.25,863.8 855.5,861.0 855.75,855.1 856.0,848.1 856.25,838.7 856.5,834.7 856.75,826.1 857.0,830.0 857.25,836.7 857.5,846.2 857.75,850.0 858.0,853.2 858.25,845.6 858.5,831.6 858.75,825.7 859.0,815.4 859.25,800.4 859.5,793.8 859.75,794.2 860.0,797.6 860.25,798.8 860.5,797.1 860.75,794.9 861.0,798.0 861.25,795.5 861.5,795.8 861.75,791.5 862.0,784.8 862.25,779.4 862.5,780.6 862.75,773.8 863.0,765.0 863.25,762.9 863.5,754.1 863.75,750.5 864.0,746.2 864.25,737.2 864.5,750.2 864.75,735.3 865.0,743.0 865.25,735.6 865.5,740.8 865.75,720.2 866.0,726.3 866.25,731.5 866.5,732.5 866.75,739.9 867.0,728.1 867.25,732.9 867.5,725.9 867.75,723.7 868.0,717.0 868.25,708.5 868.5,710.0 868.75,700.9 869.0,711.4 869.25,703.2 869.5,713.8 869.75,725.9 870.0,719.2 870.25,724.2 870.5,729.6 870.75,717.5 871.0,707.1 871.25,710.8 871.5,709.1 871.75,706.0 872.0,690.9 872.25,710.1 872.5,708.0 872.75,692.9 873.0,692.9 873.25,688.3 873.5,699.7 873.75,691.7 874.0,704.8 874.25,703.4 874.5,707.4 874.75,719.7 875.0,727.5 875.25,717.5 875.5,709.0 875.75,716.5 876.0,706.5 876.25,705.8 876.5,712.0 876.75,707.2 877.0,692.1 877.25,706.2 877.5,693.0 877.75,696.2 878.0,688.1 878.25,693.0 878.5,690.5 878.75,717.6 879.0,722.1 879.25,717.0 879.5,724.3 879.75,732.5 880.0,751.1 880.25,753.5 880.5,759.9 880.75,759.8 881.0,761.0 881.25,758.9 881.5,762.7 881.75,759.3 882.0,764.5 882.25,767.9 882.5,770.7 882.75,771.4 883.0,772.3 883.25,777.1 883.5,778.2 883.75,784.7 884.0,785.4 884.25,786.2 884.5,789.2 884.75,792.7 885.0,796.3 885.25,800.9 886.25,816.6 887.25,826.3 888.25,833.1 889.25,839.0 890.25,841.3 891.25,844.7 892.25,847.9 893.25,848.3 894.25,850.2 895.25,851.9 896.25,854.3 897.25,858.4 898.25,862.3 899.25,866.6 900.25,868.6 901.25,869.3 902.25,869.0 903.25,869.8 904.25,871.6 905.25,873.4 906.25,875.6 907.25,874.1 908.25,871.6 909.25,870.8 910.25,872.4 911.25,873.9 912.25,875.0 913.25,872.8 914.25,870.3 915.25,865.3 916.25,858.2 917.25,848.3 918.25,837.1 918.75,830.8 919.0,822.7 919.25,822.4 919.5,821.4 919.75,811.3 920.0,809.9 920.25,807.5 920.5,810.2 920.75,805.5 921.0,805.3 921.25,791.7 921.5,778.4 921.75,763.5 922.0,741.9 922.25,743.2 922.5,743.2 922.75,734.8 923.0,747.3 923.25,746.3 923.5,750.9 923.75,752.9 924.0,741.7 924.25,740.8 924.5,742.3 924.75,727.4 925.0,719.2 925.25,711.4 925.5,708.3 925.75,713.6 926.0,718.2 926.25,708.1 926.5,704.1 926.75,711.0 927.0,694.1 927.25,691.8 927.5,698.0 927.75,696.9 928.0,685.7 928.25,683.3 928.5,690.8 928.75,687.5 929.0,673.9 929.25,678.4 929.5,672.9 929.75,677.1 930.0,670.1 930.25,672.8 930.5,673.3 930.75,685.9 931.0,690.6 931.25,681.1 931.5,691.8 931.75,677.7 932.0,680.0 932.25,681.6 932.5,683.9 932.75,666.7 933.0,665.7 933.25,664.1 933.5,647.3 933.75,654.7 934.0,647.3 934.25,651.1 934.5,648.5 934.75,651.0 935.0,668.4 935.25,675.9 935.5,674.8 935.75,679.3 936.0,670.9 936.25,666.5 936.5,669.7 936.75,655.9 937.0,660.5 937.25,667.1 937.5,674.7 937.75,672.4 938.0,677.8 938.25,676.1 938.5,683.7 938.75,690.3 939.0,679.8 939.25,692.0 939.5,680.7 939.75,684.0 940.0,685.1 940.25,690.4 940.5,681.9 940.75,680.6 941.0,692.9 941.25,695.2 941.5,696.0 941.75,702.2 942.0,696.2 942.25,697.2 942.5,700.7 942.75,699.3 943.0,705.1 943.25,694.8 943.5,698.9 943.75,694.1 944.0,705.0 944.25,701.5 944.5,707.1 944.75,711.4 945.0,705.4 945.25,705.4 945.5,705.4 945.75,705.1 946.0,706.7 946.25,712.2 946.5,713.2 946.75,716.3 947.0,718.7 947.25,724.7 947.5,726.5 947.75,727.8 948.0,732.3 948.25,733.0 948.5,733.5 948.75,741.2 949.0,741.8 949.25,741.9 949.5,747.7 949.75,749.1 950.0,749.3 950.25,755.1 951.25,762.8 952.25,770.6 953.25,773.9 954.25,777.2 955.25,779.9 956.25,783.1 957.25,785.3 958.25,788.3 959.25,792.8 960.25,797.0 961.25,801.5 962.25,805.5 963.25,810.0 964.25,813.2 965.25,817.4 966.25,821.4 967.25,825.4 968.25,828.6 969.25,832.4 970.25,836.6 971.25,839.6 972.25,843.5 973.25,846.6 974.25,849.0 975.25,850.8 976.25,849.2 977.25,846.4 978.25,840.5 979.25,826.9 980.25,803.9 980.5,804.2 980.75,794.2 981.0,790.8 981.25,789.9 981.5,782.4 981.75,782.6 982.0,777.8 982.25,768.6 982.5,763.5 982.75,751.2 983.0,749.9 983.25,736.9 983.5,733.5 983.75,730.8 984.0,728.1 984.25,728.9 984.5,723.5 984.75,718.9 985.0,719.1 985.25,718.4 985.5,708.2 985.75,705.1 986.0,704.2 986.25,695.8 986.5,684.4 986.75,693.6 987.0,688.5 987.25,664.0 987.5,668.1 987.75,665.2 988.0,663.0 988.25,658.4 988.5,651.5 988.75,645.5 989.0,651.2 989.25,655.7 989.5,641.2 989.75,639.4 990.0,643.0 990.25,629.3 990.5,635.9 990.75,632.9 991.0,634.3 991.25,629.3 991.5,630.6 991.75,636.8 992.0,642.2 992.25,643.6 992.5,650.2 992.75,655.4 993.0,655.9 993.25,655.5 993.5,635.6 993.75,633.9 994.0,619.7 994.25,642.3 994.5,616.1 994.75,612.8 995.0,607.8 995.25,594.8 995.5,599.9 995.75,610.9 996.0,616.0 996.25,640.6 996.5,658.0 996.75,659.1 997.0,677.9 997.25,686.3 997.5,690.1 997.75,682.7 998.0,677.9 998.25,665.4 998.5,664.1 998.75,656.0 999.0,661.9 999.25,652.1 999.5,655.6 999.75,665.7 1000.0,657.4 1000.25,653.1 1000.5,649.6 1000.75,649.4 1001.0,654.1 1001.25,658.4 1001.5,655.0 1001.75,655.4 1002.0,651.8 1002.25,657.2 1002.5,650.0 1002.75,649.1 1003.0,654.7 1003.25,651.2 1003.5,649.6 1003.75,648.2 1004.0,649.3 1004.25,652.7 1004.5,651.4 1004.75,648.0 1005.0,651.2 1005.25,652.1 1005.5,650.8 1005.75,661.0 1006.0,660.3 1006.25,663.5 1006.5,670.8 1006.75,675.6 1007.0,671.5 1007.25,677.6 1007.5,676.2 1007.75,686.9 1008.0,682.5 1008.25,689.6 1008.5,687.2 1008.75,693.5 1009.0,698.6 1009.25,694.8 1009.5,703.3 1009.75,710.2 1010.0,714.2 1010.25,718.5 1010.5,727.0 1010.75,729.7 1011.75,744.9 1012.75,761.6 1013.75,766.0 1014.75,770.2 1015.75,769.1 1016.75,766.2 1017.75,777.2 1018.75,787.3 1019.75,794.0 1020.75,800.6 1021.75,805.9 1022.75,810.1 1023.75,814.0 1024.75,819.5 1025.75,824.4 1026.75,829.4 1027.75,833.1 1028.75,838.0 1029.75,842.7 1030.75,847.6 1031.75,852.6 1032.75,856.8 1033.75,861.0 1034.75,864.2 1035.75,867.8 1036.75,869.3 1037.75,871.5 1038.75,859.1 1039.75,841.9 1040.75,820.9 1041.0,819.7 1041.25,809.8 1041.5,807.3 1041.75,800.2 1042.0,797.1 1042.25,790.4 1042.5,783.5 1042.75,785.7 1043.0,779.1 1043.25,772.4 1043.5,769.7 1043.75,767.2 1044.0,760.0 1044.25,760.8 1044.5,761.1 1044.75,759.7 1045.0,755.8 1045.25,749.8 1045.5,757.5 1045.75,753.4 1046.0,749.3 1046.25,744.8 1046.5,743.0 1046.75,737.0 1047.0,731.2 1047.25,728.5 1047.5,725.4 1047.75,722.1 1048.0,718.4 1048.25,724.4 1048.5,714.7 1048.75,721.6 1049.0,712.9 1049.25,717.5 1049.5,720.6 1049.75,713.4 1050.0,705.0 1050.25,704.6 1050.5,701.0 1050.75,687.1 1051.0,688.8 1051.25,688.9 1051.5,681.2 1051.75,681.2 1052.0,682.6 1052.25,680.3 1052.5,678.6 1052.75,674.2 1053.0,666.0 1053.25,663.8 1053.5,657.2 1053.75,652.7 1054.0,648.5 1054.25,643.1 1054.5,649.0 1054.75,659.5 1055.0,664.3 1055.25,677.2 1055.5,688.0 1055.75,681.1 1056.0,684.5 1056.25,665.0 1056.5,667.3 1056.75,651.5 1057.0,665.8 1057.25,674.9 1057.5,653.5 1057.75,669.0 1058.0,674.5 1058.25,672.4 1058.5,680.6 1058.75,664.4 1059.0,677.1 1059.25,670.0 1059.5,663.5 1059.75,655.2 1060.0,659.5 1060.25,648.9 1060.5,652.5 1060.75,645.6 1061.0,635.9 1061.25,646.1 1061.5,646.3 1061.75,649.2 1062.0,636.2 1062.25,641.9 1062.5,646.2 1062.75,642.0 1063.0,649.8 1063.25,654.0 1063.5,630.3 1063.75,620.8 1064.0,640.5 1064.25,644.1 1064.5,637.4 1064.75,634.7 1065.0,622.3 1065.25,620.8 1065.5,627.9 1065.75,621.3 1066.0,620.8 1066.25,630.2 1066.5,650.8 1066.75,655.0 1067.0,646.0 1067.25,645.7 1067.5,647.4 1067.75,638.9 1068.0,647.0 1068.25,636.1 1068.5,636.4 1068.75,656.7 1069.0,655.3 1069.25,666.9 1069.5,672.6 1069.75,676.3 1070.0,683.5 1070.25,684.8 1070.5,686.1 1070.75,691.1 1071.0,698.1 1071.25,705.9 1071.5,713.9 1071.75,720.2 1072.0,727.2 1072.25,732.5 1072.5,737.4 1072.75,743.8 1073.75,752.0 1074.75,759.4 1075.75,766.1 1076.75,772.6 1077.75,778.0 1078.75,783.1 1079.75,788.0 1080.75,791.1 1081.75,794.8 1082.75,802.8 1083.75,811.1 1084.75,817.6 1085.75,821.9 1086.75,826.8 1087.75,831.7 1088.75,836.7 1089.75,842.1 1090.75,845.0 1091.75,847.3 1092.75,850.0 1093.75,852.4 1094.75,854.4 1095.75,854.4 1096.75,852.9 1097.75,853.7 1098.75,856.5 1099.75,861.0 1100.75,857.0 1101.75,837.9 1102.75,827.2 1103.75,818.9 1104.0,814.7 1104.25,818.1 1104.5,810.2 1104.75,809.3 1105.0,811.4 1105.25,807.1 1105.5,802.4 1105.75,797.5 1106.0,796.8 1106.25,796.5 1106.5,790.6 1106.75,788.8 1107.0,782.5 1107.25,780.2 1107.5,774.9 1107.75,773.3 1108.0,770.6 1108.25,755.4 1108.5,754.0 1108.75,749.1 1109.0,739.5 1109.25,734.4 1109.5,733.8 1109.75,734.6 1110.0,725.5 1110.25,721.4 1110.5,708.5 1110.75,726.0 1111.0,712.9 1111.25,709.8 1111.5,704.7 1111.75,713.8 1112.0,710.3 1112.25,719.7 1112.5,724.4 1112.75,724.6 1113.0,719.5 1113.25,703.8 1113.5,710.0 1113.75,686.9 1114.0,668.7 1114.25,672.5 1114.5,668.5 1114.75,668.5 1115.0,672.9 1115.25,680.3 1115.5,674.9 1115.75,683.7 1116.0,694.6 1116.25,692.5 1116.5,690.1 1116.75,693.4 1117.0,694.1 1117.25,696.4 1117.5,702.4 1117.75,701.6 1118.0,696.8 1118.25,708.0 1118.5,705.6 1118.75,718.1 1119.0,713.6 1119.25,711.0 1119.5,715.7 1119.75,688.5 1120.0,680.4 1120.25,673.1 1120.5,673.1 1120.75,673.1 1121.0,684.7 1121.25,680.6 1121.5,675.1 1121.75,685.2 1122.0,699.4 1122.25,691.6 1122.5,689.7 1122.75,689.5 1123.0,691.5 1123.25,691.0 1123.5,682.3 1123.75,678.7 1124.0,684.4 1124.25,698.4 1124.5,701.5 1124.75,698.2 1125.0,707.2 1125.25,711.2 1125.5,712.8 1125.75,713.0 1126.0,712.3 1126.25,718.1 1126.5,716.9 1126.75,729.7 1127.0,729.7 1127.25,726.2 1127.5,737.2 1127.75,737.9 1128.0,731.7 1128.25,745.4 1128.5,744.7 1128.75,750.0 1129.0,744.0 1129.25,751.3 1129.5,754.1 1129.75,756.6 1130.0,759.5 1130.25,764.3 1130.5,762.6 1130.75,766.3 1131.0,769.3 1131.25,773.7 1131.5,776.8 1131.75,781.0 1132.0,783.9 1133.0,795.4 1134.0,801.6 1135.0,808.1 1136.0,812.8 1137.0,816.1 1138.0,819.9 1139.0,824.8 1140.0,830.4 1141.0,834.3 1142.0,838.5 1143.0,842.4 1144.0,845.8 1145.0,850.5 1146.0,854.3 1147.0,859.2 1148.0,862.3 1149.0,865.2 1150.0,869.0 1151.0,871.7 1152.0,875.4 1153.0,879.3 1154.0,884.5 1155.0,889.0 1156.0,892.1 1157.0,895.5 1158.0,896.9 1159.0,899.0 1160.0,898.1 1161.0,896.5 1162.0,891.0 1163.0,882.2 1164.0,863.4 1164.75,843.7 1165.0,844.8 1165.25,842.1 1165.5,840.0 1165.75,831.0 1166.0,833.9 1166.25,826.0 1166.5,825.3 1166.75,813.7 1167.0,809.3 1167.25,800.2 1167.5,791.9 1167.75,791.2 1168.0,788.5 1168.25,789.1 1168.5,786.0 1168.75,780.6 1169.0,776.2 1169.25,778.0 1169.5,774.5 1169.75,767.4 1170.0,765.8 1170.25,758.5 1170.5,749.6 1170.75,745.0 1171.0,738.8 1171.25,738.0 1171.5,738.2 1171.75,736.9 1172.0,726.3 1172.25,719.6 1172.5,732.4 1172.75,721.7 1173.0,723.3 1173.25,703.9 1173.5,707.5 1173.75,705.7 1174.0,692.7 1174.25,696.0 1174.5,701.5 1174.75,701.5 1175.0,702.7 1175.25,683.7 1175.5,677.5 1175.75,689.1 1176.0,690.8 1176.25,684.2 1176.5,672.3 1176.75,685.9 1177.0,684.8 1177.25,681.1 1177.5,671.0 1177.75,674.5 1178.0,675.9 1178.25,663.0 1178.5,652.3 1178.75,665.3 1179.0,664.9 1179.25,659.6 1179.5,665.1 1179.75,652.6 1180.0,654.1 1180.25,652.3 1180.5,660.0 1180.75,668.8 1181.0,660.5 1181.25,675.6 1181.5,676.0 1181.75,674.5 1182.0,672.7 1182.25,678.9 1182.5,660.2 1182.75,657.5 1183.0,650.4 1183.25,656.0 1183.5,661.6 1183.75,658.9 1184.0,660.6 1184.25,659.3 1184.5,663.9 1184.75,657.2 1185.0,671.7 1185.25,660.8 1185.5,654.1 1185.75,651.8 1186.0,650.4 1186.25,660.1 1186.5,658.6 1186.75,650.4 1187.0,660.9 1187.25,662.2 1187.5,654.9 1187.75,651.2 1188.0,658.8 1188.25,664.8 1188.5,675.4 1188.75,677.0 1189.0,674.9 1189.25,688.5 1189.5,682.4 1189.75,695.6 1190.0,688.2 1190.25,692.6 1190.5,694.0 1190.75,697.4 1191.0,707.0 1191.25,708.9 1191.5,711.7 1191.75,714.5 1192.0,711.9 1192.25,719.4 1192.5,723.2 1192.75,726.0 1193.0,734.1 1193.25,734.9 1193.5,739.1 1193.75,742.6 1194.0,745.1 1194.25,754.2 1194.5,759.5 1194.75,761.5 1195.0,763.4 1195.25,765.2 1195.5,770.9 1195.75,774.9 1196.0,776.8 1197.0,788.3 1198.0,796.4 1199.0,804.0 1200.0,809.8 1201.0,816.5 1202.0,822.5 1203.0,826.1 1204.0,830.7 1205.0,834.7 1206.0,839.4 1207.0,843.9 1208.0,850.6 1209.0,858.8 1210.0,865.3 1211.0,866.5 1212.0,868.2 1213.0,870.3 1214.0,875.1 1215.0,879.4 1216.0,883.5 1217.0,886.8 1218.0,890.8 1219.0,893.5 1220.0,896.3 1221.0,899.3 1222.0,902.4 1223.0,897.5 1224.0,893.5 1225.0,882.1 1226.0,867.8 1227.0,860.4 1228.0,850.7 1228.25,849.8 1228.5,842.6 1228.75,841.4 1229.0,841.7 1229.25,831.7 1229.5,829.9 1229.75,827.6 1230.0,823.5 1230.25,817.4 1230.5,808.6 1230.75,804.7 1231.0,804.6 1231.25,801.1 1231.5,801.0 1231.75,790.2 1232.0,791.3 1232.25,786.7 1232.5,776.6 1232.75,775.2 1233.0,774.3 1233.25,768.7 1233.5,766.1 1233.75,764.5 1234.0,756.3 1234.25,756.8 1234.5,748.9 1234.75,745.3 1235.0,745.6 1235.25,737.6 1235.5,738.7 1235.75,741.9 1236.0,732.8 1236.25,729.6 1236.5,731.1 1236.75,723.7 1237.0,726.5 1237.25,710.4 1237.5,715.4 1237.75,705.0 1238.0,698.9 1238.25,708.7 1238.5,691.0 1238.75,703.7 1239.0,694.9 1239.25,697.4 1239.5,680.2 1239.75,691.2 1240.0,690.3 1240.25,677.0 1240.5,673.7 1240.75,684.2 1241.0,669.4 1241.25,662.0 1241.5,656.3 1241.75,658.7 1242.0,652.4 1242.25,645.8 1242.5,652.9 1242.75,630.8 1243.0,631.1 1243.25,642.8 1243.5,633.9 1243.75,651.3 1244.0,661.2 1244.25,650.3 1244.5,657.7 1244.75,653.5 1245.0,644.9 1245.25,652.7 1245.5,635.7 1245.75,644.7 1246.0,649.4 1246.25,636.1 1246.5,640.8 1246.75,636.3 1247.0,655.1 1247.25,651.3 1247.5,658.0 1247.75,658.9 1248.0,658.3 1248.25,647.4 1248.5,645.9 1248.75,637.2 1249.0,638.2 1249.25,633.0 1249.5,638.2 1249.75,633.0 1250.0,641.5 1250.25,657.9 1250.5,651.1 1250.75,647.2 1251.0,657.9 1251.25,654.4 1251.5,653.9 1251.75,661.2 1252.0,670.9 1252.25,671.9 1252.5,674.4 1252.75,676.1 1253.0,680.8 1253.25,695.5 1253.5,696.4 1253.75,697.4 1254.0,699.3 1254.25,706.2 1254.5,720.8 1254.75,717.0 1255.0,724.8 1255.25,730.3 1255.5,733.6 1255.75,736.6 1256.0,737.7 1256.25,741.7 1256.5,749.9 1256.75,748.9 1257.0,754.6 1257.25,753.8 1257.5,758.8 1257.75,762.4 1258.0,766.3 1258.25,766.8 1259.25,779.7 1260.25,783.6 1261.25,792.4 1262.25,802.1 1263.25,810.1 1264.25,818.6 1265.25,825.9 1266.25,831.6 1267.25,838.4 1268.25,844.0 1269.25,849.5 1270.25,855.4 1271.25,861.9 1272.25,868.4 1273.25,875.8 1274.25,880.7 1275.25,884.0 1276.25,888.2 1277.25,891.1 1278.25,893.5 1279.25,895.0 1280.25,897.4 1281.25,899.3 1282.25,900.6 1283.25,901.5 1284.25,903.9 1285.25,907.9 1286.25,912.3 1287.25,904.3 1288.25,889.5 1289.25,863.6 1290.25,859.4 1291.0,854.4 1291.25,851.7 1291.5,845.8 1291.75,844.3 1292.0,839.6 1292.25,835.9 1292.5,831.0 1292.75,828.6 1293.0,822.6 1293.25,819.2 1293.5,814.6 1293.75,810.0 1294.0,799.6 1294.25,799.5 1294.5,796.3 1294.75,797.6 1295.0,789.0 1295.25,788.6 1295.5,787.1 1295.75,780.5 1296.0,775.6 1296.25,761.7 1296.5,758.0 1296.75,738.9 1297.0,727.8 1297.25,734.5 1297.5,729.4 1297.75,728.4 1298.0,725.3 1298.25,725.9 1298.5,715.9 1298.75,725.4 1299.0,714.7 1299.25,719.7 1299.5,711.9 1299.75,697.7 1300.0,698.0 1300.25,708.9 1300.5,698.8 1300.75,694.7 1301.0,696.0 1301.25,689.2 1301.5,685.8 1301.75,687.4 1302.0,688.6 1302.25,699.1 1302.5,691.6 1302.75,704.8 1303.0,706.0 1303.25,707.1 1303.5,702.7 1303.75,693.2 1304.0,689.4 1304.25,683.7 1304.5,675.9 1304.75,676.5 1305.0,668.4 1305.25,680.5 1305.5,668.4 1305.75,656.8 1306.0,646.0 1306.25,651.3 1306.5,645.7 1306.75,641.8 1307.0,643.8 1307.25,640.5 1307.5,662.2 1307.75,659.9 1308.0,677.1 1308.25,658.8 1308.5,654.0 1308.75,662.6 1309.0,648.3 1309.25,644.7 1309.5,636.3 1309.75,635.2 1310.0,650.3 1310.25,645.9 1310.5,651.9 1310.75,635.2 1311.0,637.3 1311.25,635.2 1311.5,642.9 1311.75,635.2 1312.0,640.8 1312.25,645.8 1312.5,649.3 1312.75,636.7 1313.0,650.6 1313.25,641.6 1313.5,643.1 1313.75,643.8 1314.0,661.6 1314.25,668.0 1314.5,659.9 1314.75,663.0 1315.0,669.0 1315.25,684.5 1315.5,684.9 1315.75,682.9 1316.0,682.6 1316.25,692.3 1316.5,704.2 1316.75,710.0 1317.0,704.9 1317.25,706.1 1317.5,709.3 1317.75,707.5 1318.0,719.0 1318.25,716.5 1318.5,727.0 1318.75,723.7 1319.0,729.3 1319.25,737.4 1319.5,739.2 1319.75,746.8 1320.0,749.7 1320.25,752.2 1320.5,759.7 1320.75,764.4 1321.0,765.5 1321.25,773.7 1321.5,774.1 1322.5,781.1 1323.5,787.4 1324.5,792.7 1325.5,796.4 1326.5,800.5 1327.5,802.3 1328.5,805.0 1329.5,807.1 1330.5,810.6 1331.5,813.9 1332.5,816.5 1333.5,819.3 1334.5,821.9 1335.5,824.5 1336.5,826.0 1337.5,827.2 1338.5,828.4 1339.5,830.2 1340.5,832.1 1341.5,834.2 1342.5,835.8 1343.5,837.6 1344.5,838.4 1345.5,839.5 1346.5,842.4 1347.5,844.4 1348.5,846.4 1349.5,848.8 1350.5,851.2 1351.5,850.5 1352.5,849.8 1353.5,840.9 1354.5,825.3 1355.25,800.7 1355.5,792.4 1355.75,784.8 1356.0,776.4 1356.25,770.3 1356.5,756.9 1356.75,753.9 1357.0,740.5 1357.25,738.1 1357.5,728.7 1357.75,723.5 1358.0,722.5 1358.25,714.4 1358.5,713.0 1358.75,708.6 1359.0,715.7 1359.25,726.9 1359.5,737.7 1359.75,751.0 1360.0,754.7 1360.25,743.6 1360.5,738.9 1360.75,723.3 1361.0,712.7 1361.25,693.3 1361.5,682.2 1361.75,679.5 1362.0,677.7 1362.25,665.1 1362.5,677.5 1362.75,657.5 1363.0,661.3 1363.25,630.9 1363.5,637.6 1363.75,632.0 1364.0,636.4 1364.25,647.4 1364.5,654.4 1364.75,662.6 1365.0,662.7 1365.25,664.5 1365.5,655.9 1365.75,664.4 1366.0,659.9 1366.25,658.6 1366.5,659.7 1366.75,664.8 1367.0,679.1 1367.25,682.2 1367.5,678.9 1367.75,686.4 1368.0,668.6 1368.25,663.2 1368.5,668.9 1368.75,663.0 1369.0,661.8 1369.25,663.7 1369.5,672.8 1369.75,651.6 1370.0,653.7 1370.25,651.7 1370.5,647.0 1370.75,649.4 1371.0,659.8 1371.25,652.6 1371.5,667.9 1371.75,674.4 1372.0,685.3 1372.25,687.0 1372.5,682.1 1372.75,669.8 1373.0,677.9 1373.25,668.8 1373.5,661.1 1373.75,649.3 1374.0,649.3 1374.25,649.3 1374.5,650.9 1374.75,657.0 1375.0,668.3 1375.25,671.0 1375.5,672.3 1375.75,678.8 1376.0,678.5 1376.25,685.4 1376.5,689.5 1376.75,695.5 1377.0,697.6 1377.25,700.6 1377.5,703.9 1377.75,705.7 1378.0,715.9 1378.25,715.3 1378.5,718.3 1378.75,722.6 1379.0,722.2 1379.25,715.9 1379.5,722.0 1379.75,723.1 1380.0,726.3 1380.25,725.7 1380.5,725.3 1380.75,721.9 1381.0,724.1 1381.25,729.1 1381.5,732.1 1381.75,731.9 1382.0,735.6 1382.25,738.2 1382.5,742.4 1382.75,747.6 1383.0,751.7 1384.0,770.9 1385.0,788.1 1386.0,803.9 1387.0,813.6 1388.0,823.5 1389.0,830.0 1390.0,836.1 1391.0,839.2 1392.0,840.4 1393.0,838.7 1394.0,838.4 1395.0,839.8 1396.0,840.9 1397.0,838.9 1398.0,840.7 1399.0,846.6 1400.0,852.2 1401.0,858.0 1402.0,864.0 1403.0,870.0 1404.0,872.4 1405.0,872.8 1406.0,868.5 1407.0,861.2 1408.0,866.2 1409.0,872.4 1410.0,877.4 1411.0,878.9 1412.0,878.3 1413.0,872.6 1414.0,865.7 1415.0,856.1 1416.0,845.7 1417.0,836.4 1417.25,833.8 1417.5,830.1 1417.75,822.0 1418.0,819.0 1418.25,813.9 1418.5,810.1 1418.75,800.8 1419.0,798.6 1419.25,794.0 1419.5,787.0 1419.75,778.4 1420.0,771.8 1420.25,766.5 1420.5,764.8 1420.75,764.2 1421.0,753.8 1421.25,747.8 1421.5,748.2 1421.75,743.7 1422.0,736.8 1422.25,739.2 1422.5,743.6 1422.75,748.5 1423.0,741.9 1423.25,744.3 1423.5,752.2 1423.75,735.7 1424.0,733.2 1424.25,725.9 1424.5,714.6 1424.75,700.1 1425.0,697.4 1425.25,694.3 1425.5,697.7 1425.75,688.3 1426.0,700.7 1426.25,679.9 1426.5,689.3 1426.75,687.8 1427.0,691.1 1427.25,675.3 1427.5,680.4 1427.75,667.6 1428.0,674.5 1428.25,681.3 1428.5,663.6 1428.75,669.8 1429.0,663.6 1429.25,671.6 1429.5,672.8 1429.75,665.6 1430.0,663.6 1430.25,673.0 1430.5,679.9 1430.75,682.0 1431.0,682.9 1431.25,670.1 1431.5,675.5 1431.75,686.4 1432.0,670.6 1432.25,683.0 1432.5,686.5 1432.75,679.2 1433.0,682.3 1433.25,675.6 1433.5,672.3 1433.75,680.2 1434.0,681.3 1434.25,683.7 1434.5,687.9 1434.75,679.7 1435.0,679.4 1435.25,678.6 1435.5,674.1 1435.75,682.9 1436.0,674.6 1436.25,675.7 1436.5,677.3 1436.75,678.3 1437.0,692.0 1437.25,688.9 1437.5,685.5 1437.75,689.9 1438.0,693.8 1438.25,694.2 1438.5,703.0 1438.75,694.7 1439.0,703.9 1439.25,704.9 1439.5,702.0 1439.75,709.6 1440.0,711.7 1440.25,716.5 1440.5,715.6 1440.75,721.9 1441.0,719.0 1441.25,724.7 1441.5,734.0 1441.75,738.2 1442.0,738.9 1442.25,740.5 1442.5,747.0 1442.75,742.9 1443.0,747.9 1443.25,753.4 1443.5,755.9 1443.75,755.5 1444.0,756.8 1444.25,764.5 1444.5,765.1 1444.75,766.4 1445.0,770.1 1445.25,773.5 1446.25,780.4 1447.25,788.7 1448.25,795.8 1449.25,803.1 1450.25,809.6 1451.25,811.3 1452.25,815.1 1453.25,819.7 1454.25,825.1 1455.25,828.0 1456.25,831.6 1457.25,836.0 1458.25,840.5 1459.25,845.4 1460.25,849.7 1461.25,854.0 1462.25,858.5 1463.25,863.8 1464.25,866.7 1465.25,867.1 1466.25,867.9 1467.25,866.8 1468.25,866.8 1469.25,867.6 1470.25,869.7 1471.25,873.6 1472.25,881.5 1473.25,873.2 1474.25,864.9 1475.25,857.6 1476.25,843.4 1477.0,830.4 1477.25,824.6 1477.5,824.9 1477.75,822.2 1478.0,819.3 1478.25,815.1 1478.5,814.5 1478.75,813.9 1479.0,808.3 1479.25,804.7 1479.5,806.2 1479.75,802.2 1480.0,799.0 1480.25,796.5 1480.5,789.8 1480.75,787.2 1481.0,786.0 1481.25,777.2 1481.5,773.7 1481.75,770.6 1482.0,766.1 1482.25,759.4 1482.5,759.3 1482.75,750.9 1483.0,752.0 1483.25,751.0 1483.5,747.0 1483.75,745.0 1484.0,734.5 1484.25,731.3 1484.5,731.9 1484.75,734.0 1485.0,734.5 1485.25,716.6 1485.5,719.9 1485.75,709.1 1486.0,705.1 1486.25,703.0 1486.5,704.0 1486.75,696.3 1487.0,697.8 1487.25,678.6 1487.5,686.7 1487.75,682.3 1488.0,676.6 1488.25,681.5 1488.5,676.1 1488.75,674.4 1489.0,681.1 1489.25,681.5 1489.5,695.3 1489.75,673.5 1490.0,684.1 1490.25,668.2 1490.5,664.0 1490.75,662.5 1491.0,648.3 1491.25,660.1 1491.5,654.9 1491.75,648.3 1492.0,654.2 1492.25,653.3 1492.5,654.3 1492.75,666.1 1493.0,659.4 1493.25,669.7 1493.5,675.9 1493.75,672.7 1494.0,688.0 1494.25,670.3 1494.5,665.9 1494.75,670.6 1495.0,656.8 1495.25,657.4 1495.5,651.8 1495.75,660.1 1496.0,659.8 1496.25,674.2 1496.5,671.2 1496.75,687.2 1497.0,690.3 1497.25,690.4 1497.5,683.3 1497.75,677.8 1498.0,663.7 1498.25,656.3 1498.5,658.0 1498.75,656.3 1499.0,663.3 1499.25,674.7 1499.5,669.9 1499.75,682.3 1500.0,689.9 1500.25,693.4 1500.5,698.0 1500.75,695.1 1501.0,691.3 1501.25,689.6 1501.5,696.2 1501.75,689.6 1502.0,697.0 1502.25,698.5 1502.5,691.3 1502.75,696.7 1503.0,703.1 1503.25,706.4 1503.5,710.9 1503.75,714.1 1504.0,717.9 1504.25,716.7 1504.5,720.4 1504.75,726.4 1505.0,726.2 1505.25,733.0 1505.5,729.6 1505.75,737.9 1506.0,739.1 1506.25,738.7 1506.5,747.4 1506.75,749.4 1507.0,752.1 1507.25,753.8 1507.5,757.9 1507.75,763.5 1508.0,763.6 1509.0,770.8 1510.0,779.4 1511.0,785.6 1512.0,791.6 1513.0,795.5 1514.0,800.0 1515.0,805.9 1516.0,812.3 1517.0,817.4 1518.0,824.3 1519.0,826.1 1520.0,828.4 1521.0,831.5 1522.0,833.9 1523.0,836.0 1524.0,839.8 1525.0,842.7 1526.0,846.8 1527.0,851.1 1528.0,854.4 1529.0,857.9 1530.0,862.0 1531.0,865.5 1532.0,869.0 1533.0,875.7 1534.0,881.7 1535.0,863.9 1536.0,853.7 1537.0,855.3 1538.0,865.2 1539.0,866.2 1540.0,857.4 1540.75,838.2 1541.0,825.4 1541.25,824.2 1541.5,812.0 1541.75,814.5 1542.0,806.6 1542.25,805.2 1542.5,801.5 1542.75,792.6 1543.0,791.4 1543.25,788.3 1543.5,785.4 1543.75,777.3 1544.0,773.1 1544.25,766.3 1544.5,774.3 1544.75,763.1 1545.0,758.7 1545.25,749.6 1545.5,754.8 1545.75,744.6 1546.0,751.0 1546.25,749.7 1546.5,747.5 1546.75,751.7 1547.0,745.5 1547.25,750.0 1547.5,748.1 1547.75,740.8 1548.0,742.0 1548.25,737.0 1548.5,740.3 1548.75,719.6 1549.0,721.4 1549.25,721.5 1549.5,725.1 1549.75,730.9 1550.0,732.1 1550.25,731.5 1550.5,730.4 1550.75,731.0 1551.0,726.1 1551.25,709.9 1551.5,714.3 1551.75,703.5 1552.0,700.1 1552.25,707.3 1552.5,708.0 1552.75,709.6 1553.0,705.0 1553.25,710.3 1553.5,707.5 1553.75,710.3 1554.0,703.7 1554.25,702.6 1554.5,691.0 1554.75,666.7 1555.0,660.5 1555.25,656.9 1555.5,667.1 1555.75,685.7 1556.0,680.6 1556.25,673.3 1556.5,683.1 1556.75,687.2 1557.0,691.0 1557.25,684.0 1557.5,681.0 1557.75,684.6 1558.0,665.6 1558.25,664.3 1558.5,680.7 1558.75,677.8 1559.0,678.1 1559.25,679.0 1559.5,687.4 1559.75,692.4 1560.0,699.1 1560.25,695.4 1560.5,696.2 1560.75,687.2 1561.0,680.8 1561.25,676.8 1561.5,690.6 1561.75,679.2 1562.0,692.5 1562.25,697.3 1562.5,705.2 1562.75,706.5 1563.0,712.3 1563.25,710.9 1563.5,704.3 1563.75,700.2 1564.0,698.6 1564.25,692.4 1564.5,693.0 1564.75,696.5 1565.0,702.6 1565.25,711.1 1565.5,714.6 1565.75,711.7 1566.0,719.4 1566.25,721.2 1566.5,725.8 1566.75,726.4 1567.0,730.1 1567.25,731.0 1567.5,733.2 1567.75,740.8 1568.0,745.0 1568.25,746.5 1568.5,749.2 1568.75,752.0 1569.0,753.7 1569.25,754.1 1569.5,760.9 1569.75,762.5 1570.0,763.8 1570.25,765.6 1570.5,771.2 1570.75,769.5 1571.0,775.5 1571.25,775.8 1571.5,778.8 1572.5,783.0 1573.5,789.4 1574.5,794.3 1575.5,800.2 1576.5,808.6 1577.5,816.8 1578.5,822.6 1579.5,826.8 1580.5,831.9 1581.5,837.3 1582.5,841.7 1583.5,845.1 1584.5,848.7 1585.5,852.6 1586.5,856.5 1587.5,862.9 1588.5,870.1 1589.5,877.5 1590.5,881.7 1591.5,887.4 1592.5,890.1 1593.5,893.3 1594.5,895.7 1595.5,898.0 1596.5,894.5 1597.5,877.7 1598.5,875.5 1599.5,880.1 1600.5,878.8 1601.5,866.6 1602.25,849.9 1602.5,849.7 1602.75,843.6 1603.0,841.1 1603.25,835.9 1603.5,834.6 1603.75,832.1 1604.0,828.5 1604.25,823.9 1604.5,825.6 1604.75,825.4 1605.0,818.2 1605.25,822.9 1605.5,814.6 1605.75,814.4 1606.0,809.7 1606.25,807.1 1606.5,799.3 1606.75,792.3 1607.0,786.5 1607.25,781.4 1607.5,785.2 1607.75,779.4 1608.0,775.1 1608.25,776.9 1608.5,769.6 1608.75,767.2 1609.0,762.8 1609.25,767.3 1609.5,762.5 1609.75,751.2 1610.0,740.2 1610.25,745.5 1610.5,743.9 1610.75,744.6 1611.0,745.0 1611.25,740.0 1611.5,745.6 1611.75,744.0 1612.0,737.2 1612.25,730.2 1612.5,726.1 1612.75,729.2 1613.0,715.0 1613.25,716.9 1613.5,709.4 1613.75,701.2 1614.0,710.4 1614.25,702.3 1614.5,698.9 1614.75,699.2 1615.0,689.5 1615.25,700.1 1615.5,706.1 1615.75,713.3 1616.0,704.4 1616.25,719.5 1616.5,715.6 1616.75,715.8 1617.0,707.4 1617.25,696.0 1617.5,699.3 1617.75,677.1 1618.0,673.3 1618.25,677.2 1618.5,677.8 1618.75,690.0 1619.0,685.9 1619.25,700.1 1619.5,708.5 1619.75,706.7 1620.0,691.4 1620.25,698.6 1620.5,677.2 1620.75,675.4 1621.0,667.4 1621.25,667.4 1621.5,667.4 1621.75,678.9 1622.0,672.8 1622.25,667.4 1622.5,672.2 1622.75,677.2 1623.0,682.5 1623.25,693.2 1623.5,701.1 1623.75,709.6 1624.0,714.6 1624.25,720.8 1624.5,719.9 1624.75,714.5 1625.0,700.8 1625.25,690.5 1625.5,687.8 1625.75,692.1 1626.0,692.7 1626.25,693.5 1626.5,703.5 1626.75,706.4 1627.0,714.9 1627.25,716.2 1627.5,715.4 1627.75,724.1 1628.0,729.5 1628.25,726.3 1628.5,732.6 1628.75,738.6 1629.0,738.1 1629.25,740.6 1629.5,750.6 1629.75,750.8 1630.0,754.4 1630.25,753.2 1630.5,762.1 1630.75,759.4 1631.0,765.2 1631.25,770.9 1631.5,775.2 1631.75,775.9 1632.75,783.1 1633.75,788.6 1634.75,793.0 1635.75,798.8 1636.75,803.4 1637.75,806.5 1638.75,810.2 1639.75,815.0 1640.75,819.7 1641.75,824.7 1642.75,830.1 1643.75,834.1 1644.75,837.7 1645.75,840.9 1646.75,846.3 1647.75,850.9 1648.75,855.0 1649.75,858.1 1650.75,861.1 1651.75,864.2 1652.75,866.1 1653.75,869.9 1654.75,873.2 1655.75,875.6 1656.75,876.8 1657.75,873.6 1658.75,860.2 1659.75,862.3 1660.75,868.1 1661.75,866.7 1662.75,858.7 1663.75,847.8 1664.75,837.6 1665.5,823.1 1665.75,817.8 1666.0,815.8 1666.25,810.1 1666.5,806.6 1666.75,803.4 1667.0,804.5 1667.25,799.2 1667.5,797.7 1667.75,793.0 1668.0,794.4 1668.25,794.4 1668.5,789.4 1668.75,775.6 1669.0,776.8 1669.25,773.1 1669.5,765.3 1669.75,752.3 1670.0,749.5 1670.25,746.1 1670.5,738.9 1670.75,727.1 1671.0,719.9 1671.25,722.0 1671.5,705.5 1671.75,717.1 1672.0,707.2 1672.25,706.1 1672.5,694.6 1672.75,696.0 1673.0,702.0 1673.25,690.3 1673.5,710.4 1673.75,692.0 1674.0,693.7 1674.25,701.3 1674.5,704.4 1674.75,700.1 1675.0,687.8 1675.25,682.9 1675.5,676.9 1675.75,668.7 1676.0,665.3 1676.25,677.7 1676.5,677.0 1676.75,680.6 1677.0,679.8 1677.25,689.6 1677.5,692.2 1677.75,689.9 1678.0,691.1 1678.25,666.7 1678.5,673.6 1678.75,658.2 1679.0,657.3 1679.25,666.8 1679.5,644.0 1679.75,648.6 1680.0,641.9 1680.25,651.2 1680.5,641.9 1680.75,641.9 1681.0,657.4 1681.25,656.9 1681.5,661.4 1681.75,666.7 1682.0,654.4 1682.25,655.1 1682.5,656.0 1682.75,655.6 1683.0,648.4 1683.25,661.8 1683.5,671.3 1683.75,663.8 1684.0,679.6 1684.25,666.5 1684.5,686.5 1684.75,678.3 1685.0,676.2 1685.25,669.8 1685.5,664.1 1685.75,656.5 1686.0,657.4 1686.25,666.8 1686.5,670.2 1686.75,667.3 1687.0,671.1 1687.25,674.9 1687.5,677.5 1687.75,693.8 1688.0,690.4 1688.25,689.5 1688.5,688.4 1688.75,687.7 1689.0,697.9 1689.25,697.6 1689.5,695.0 1689.75,705.3 1690.0,702.0 1690.25,711.2 1690.5,710.1 1690.75,715.3 1691.0,721.6 1691.25,725.2 1691.5,730.3 1691.75,730.1 1692.0,738.6 1692.25,741.8 1692.5,743.5 1692.75,748.0 1693.0,750.4 1693.25,755.0 1694.25,768.3 1695.25,780.5 1696.25,789.7 1697.25,796.1 1698.25,800.6 1699.25,804.0 1700.25,807.0 1701.25,810.2 1702.25,813.4 1703.25,816.2 1704.25,818.2 1705.25,822.0 1706.25,824.6 1707.25,828.1 1708.25,830.8 1709.25,833.1 1710.25,835.4 1711.25,836.5 1712.25,839.1 1713.25,841.5 1714.25,843.4 1715.25,845.3 1716.25,847.3 1717.25,850.1 1718.25,853.6 1719.25,855.1 1720.25,856.1 1721.25,848.3 1722.25,839.4 1723.25,850.5 1724.25,850.0 1725.25,845.5 1726.25,837.7 1727.25,828.2 1728.25,815.6 1728.5,810.1 1728.75,812.4 1729.0,805.1 1729.25,807.1 1729.5,800.1 1729.75,804.4 1730.0,795.1 1730.25,797.2 1730.5,793.1 1730.75,780.8 1731.0,780.2 1731.25,768.2 1731.5,759.0 1731.75,759.3 1732.0,758.9 1732.25,757.5 1732.5,753.8 1732.75,760.4 1733.0,760.9 1733.25,762.0 1733.5,760.3 1733.75,749.3 1734.0,746.3 1734.25,748.1 1734.5,741.2 1734.75,727.3 1735.0,722.6 1735.25,729.1 1735.5,733.7 1735.75,734.0 1736.0,728.3 1736.25,735.4 1736.5,737.1 1736.75,734.2 1737.0,725.3 1737.25,714.0 1737.5,709.6 1737.75,692.3 1738.0,695.8 1738.25,684.8 1738.5,691.1 1738.75,695.4 1739.0,685.6 1739.25,688.1 1739.5,683.2 1739.75,692.7 1740.0,687.4 1740.25,681.8 1740.5,683.3 1740.75,662.7 1741.0,672.1 1741.25,669.5 1741.5,663.9 1741.75,668.7 1742.0,673.2 1742.25,653.3 1742.5,648.2 1742.75,648.2 1743.0,651.7 1743.25,654.1 1743.5,648.2 1743.75,656.0 1744.0,648.2 1744.25,655.4 1744.5,658.0 1744.75,663.2 1745.0,676.1 1745.25,669.7 1745.5,675.4 1745.75,683.4 1746.0,682.9 1746.25,668.4 1746.5,671.9 1746.75,662.6 1747.0,665.6 1747.25,665.7 1747.5,662.3 1747.75,667.5 1748.0,675.0 1748.25,671.4 1748.5,689.4 1748.75,694.4 1749.0,694.6 1749.25,687.5 1749.5,681.2 1749.75,678.2 1750.0,682.9 1750.25,669.0 1750.5,677.7 1750.75,666.5 1751.0,671.9 1751.25,678.4 1751.5,680.1 1751.75,676.0 1752.0,683.4 1752.25,697.5 1752.5,694.5 1752.75,702.3 1753.0,708.8 1753.25,717.0 1753.5,726.4 1753.75,728.3 1754.0,724.9 1754.25,734.2 1754.5,732.2 1754.75,734.4 1755.0,740.4 1755.25,739.5 1755.5,739.9 1755.75,743.0 1756.0,745.3 1756.25,747.4 1756.5,750.7 1756.75,754.4 1757.75,763.4 1758.75,769.9 1759.75,776.0 1760.75,779.3 1761.75,781.4 1762.75,783.0 1763.75,787.3 1764.75,791.1 1765.75,795.6 1766.75,800.2 1767.75,804.1 1768.75,808.6 1769.75,813.9 1770.75,817.8 1771.75,822.1 1772.75,826.0 1773.75,829.4 1774.75,832.9 1775.75,837.4 1776.75,841.3 1777.75,843.4 1778.75,846.4 1779.75,849.1 1780.75,852.9 1781.75,855.1 1782.75,857.2 1783.75,858.7 1784.75,859.3 1785.75,860.6 1786.75,859.7 1787.75,858.0 1788.75,850.6 1789.75,838.2 1790.75,821.2 1791.0,817.6 1791.25,813.5 1791.5,806.2 1791.75,802.8 1792.0,798.9 1792.25,794.7 1792.5,790.6 1792.75,783.5 1793.0,777.5 1793.25,773.0 1793.5,770.6 1793.75,760.0 1794.0,753.1 1794.25,747.1 1794.5,738.0 1794.75,730.6 1795.0,714.1 1795.25,713.2 1795.5,710.0 1795.75,713.2 1796.0,695.5 1796.25,702.4 1796.5,704.4 1796.75,702.1 1797.0,702.5 1797.25,695.6 1797.5,675.2 1797.75,680.4 1798.0,666.9 1798.25,659.8 1798.5,670.2 1798.75,663.3 1799.0,667.7 1799.25,675.6 1799.5,679.1 1799.75,692.9 1800.0,695.5 1800.25,696.1 1800.5,688.1 1800.75,679.5 1801.0,683.6 1801.25,671.3 1801.5,669.2 1801.75,675.6 1802.0,682.4 1802.25,693.2 1802.5,691.2 1802.75,700.8 1803.0,705.1 1803.25,696.2 1803.5,690.0 1803.75,688.5 1804.0,685.8 1804.25,678.6 1804.5,673.1 1804.75,666.1 1805.0,660.4 1805.25,665.4 1805.5,654.7 1805.75,654.7 1806.0,654.7 1806.25,654.7 1806.5,658.4 1806.75,662.4 1807.0,668.8 1807.25,676.7 1807.5,678.3 1807.75,683.4 1808.0,669.0 1808.25,677.3 1808.5,665.2 1808.75,670.2 1809.0,656.2 1809.25,656.2 1809.5,659.7 1809.75,656.2 1810.0,656.8 1810.25,660.2 1810.5,660.8 1810.75,656.2 1811.0,665.9 1811.25,670.0 1811.5,668.7 1811.75,681.9 1812.0,682.6 1812.25,687.5 1812.5,687.0 1812.75,688.5 1813.0,683.6 1813.25,688.1 1813.5,680.5 1813.75,670.0 1814.0,671.3 1814.25,679.8 1814.5,671.5 1814.75,675.7 1815.0,676.7 1815.25,673.4 1815.5,671.3 1815.75,679.1 1816.0,683.3 1816.25,686.8 1816.5,686.8 1816.75,698.9 1817.0,697.3 1817.25,698.5 1817.5,701.3 1817.75,708.1 1818.0,706.3 1818.25,709.8 1818.5,721.8 1818.75,723.2 1819.0,726.1 1819.25,730.6 1819.5,732.5 1819.75,731.5 1820.0,741.1 1820.25,744.3 1820.5,746.0 1820.75,745.5 1821.0,752.9 1821.25,755.9 1821.5,756.9 1822.5,764.8 1823.5,771.1 1824.5,775.7 1825.5,780.9 1826.5,785.7 1827.5,790.9 1828.5,794.8 1829.5,797.7 1830.5,802.5 1831.5,810.9 1832.5,818.0 1833.5,823.1 1834.5,827.9 1835.5,832.0 1836.5,835.1 1837.5,837.9 1838.5,840.6 1839.5,842.5 1840.5,844.7 1841.5,846.8 1842.5,848.8 1843.5,852.7 1844.5,855.4 1845.5,856.7 1846.5,857.1 1847.5,856.9 1848.5,856.2 1849.5,853.5 1850.5,849.7 1851.5,844.2 1852.5,834.8 1853.5,821.4 1854.5,802.5 1854.75,793.0 1855.0,791.7 1855.25,774.9 1855.5,772.3 1855.75,765.7 1856.0,756.4 1856.25,741.8 1856.5,728.1 1856.75,724.9 1857.0,731.0 1857.25,735.5 1857.5,736.0 1857.75,738.8 1858.0,740.5 1858.25,735.6 1858.5,723.3 1858.75,725.3 1859.0,706.9 1859.25,690.6 1859.5,691.2 1859.75,682.8 1860.0,678.4 1860.25,682.2 1860.5,665.9 1860.75,659.5 1861.0,650.9 1861.25,649.8 1861.5,639.9 1861.75,637.4 1862.0,643.7 1862.25,624.3 1862.5,610.4 1862.75,623.7 1863.0,628.7 1863.25,640.0 1863.5,651.1 1863.75,663.1 1864.0,674.2 1864.25,688.0 1864.5,683.5 1864.75,677.7 1865.0,664.0 1865.25,658.6 1865.5,648.1 1865.75,668.2 1866.0,680.4 1866.25,689.7 1866.5,705.5 1866.75,709.2 1867.0,700.8 1867.25,685.2 1867.5,682.9 1867.75,679.5 1868.0,668.6 1868.25,663.8 1868.5,661.3 1868.75,648.2 1869.0,630.4 1869.25,635.8 1869.5,621.9 1869.75,618.6 1870.0,621.7 1870.25,624.5 1870.5,632.6 1870.75,644.1 1871.0,648.0 1871.25,651.8 1871.5,662.6 1871.75,640.5 1872.0,636.1 1872.25,637.9 1872.5,618.3 1872.75,630.5 1873.0,618.3 1873.25,628.4 1873.5,623.4 1873.75,630.4 1874.0,632.1 1874.25,634.3 1874.5,627.8 1874.75,632.3 1875.0,641.9 1875.25,651.2 1875.5,644.7 1875.75,652.1 1876.0,653.0 1876.25,656.7 1876.5,661.2 1876.75,653.5 1877.0,663.0 1877.25,663.7 1877.5,665.6 1877.75,666.3 1878.0,669.2 1878.25,671.1 1878.5,673.5 1878.75,685.9 1879.0,687.5 1879.25,685.4 1879.5,690.4 1879.75,688.8 1880.0,689.5 1880.25,693.0 1880.5,700.8 1880.75,707.5 1881.0,708.8 1881.25,711.7 1881.5,717.6 1881.75,721.1 1882.0,725.3 1882.25,730.4 1882.5,733.3 1883.5,745.3 1884.5,751.3 1885.5,755.5 1886.5,758.4 1887.5,759.5 1888.5,760.7 1889.5,766.4 1890.5,770.4 1891.5,775.9 1892.5,780.3 1893.5,785.6 1894.5,790.7 1895.5,796.2 1896.5,803.1 1897.5,809.4 1898.5,812.8 1899.5,816.5 1900.5,819.9 1901.5,822.9 1902.5,826.6 1903.5,830.2 1904.5,832.6 1905.5,836.6 1906.5,840.1 1907.5,841.6 1908.5,831.2 1909.5,813.0 1910.5,827.9 1911.5,838.0 1912.5,833.9 1913.5,815.8 1914.5,795.7 1914.75,789.8 1915.0,783.6 1915.25,776.7 1915.5,769.9 1915.75,760.6 1916.0,761.2 1916.25,761.3 1916.5,755.0 1916.75,763.3 1917.0,756.4 1917.25,753.6 1917.5,746.3 1917.75,744.9 1918.0,737.9 1918.25,729.6 1918.5,723.6 1918.75,715.3 1919.0,712.5 1919.25,712.5 1919.5,707.9 1919.75,710.8 1920.0,705.0 1920.25,703.7 1920.5,701.4 1920.75,700.4 1921.0,692.2 1921.25,685.3 1921.5,678.1 1921.75,669.3 1922.0,669.5 1922.25,677.1 1922.5,676.3 1922.75,674.7 1923.0,671.5 1923.25,672.4 1923.5,684.0 1923.75,677.5 1924.0,663.3 1924.25,641.1 1924.5,638.2 1924.75,630.8 1925.0,616.9 1925.25,632.1 1925.5,641.0 1925.75,650.2 1926.0,660.9 1926.25,680.1 1926.5,690.3 1926.75,685.3 1927.0,674.1 1927.25,672.4 1927.5,660.6 1927.75,644.4 1928.0,647.9 1928.25,634.1 1928.5,634.1 1928.75,655.2 1929.0,652.5 1929.25,662.0 1929.5,666.0 1929.75,663.5 1930.0,655.3 1930.25,654.5 1930.5,658.5 1930.75,635.1 1931.0,645.5 1931.25,632.8 1931.5,631.1 1931.75,644.0 1932.0,651.1 1932.25,650.2 1932.5,651.9 1932.75,667.0 1933.0,657.7 1933.25,658.3 1933.5,641.8 1933.75,643.8 1934.0,633.1 1934.25,631.7 1934.5,634.6 1934.75,641.6 1935.0,642.9 1935.25,645.0 1935.5,656.2 1935.75,652.9 1936.0,663.4 1936.25,658.8 1936.5,659.7 1936.75,651.8 1937.0,644.9 1937.25,640.0 1937.5,638.2 1937.75,637.0 1938.0,655.7 1938.25,656.7 1938.5,658.6 1938.75,660.8 1939.0,676.1 1939.25,674.6 1939.5,670.7 1939.75,679.1 1940.0,685.0 1940.25,680.8 1940.5,684.2 1940.75,683.8 1941.0,685.2 1941.25,691.9 1941.5,696.1 1941.75,693.1 1942.0,694.4 1942.25,698.6 1942.5,697.9 1942.75,702.2 1943.0,704.5 1943.25,703.2 1943.5,705.8 1943.75,710.2 1944.0,714.3 1944.25,715.9 1944.5,719.8 1944.75,718.8 1945.0,723.3 1945.25,724.1 1945.5,726.9 1945.75,729.2 1946.75,736.2 1947.75,741.6 1948.75,746.1 1949.75,752.7 1950.75,759.1 1951.75,765.9 1952.75,772.9 1953.75,779.3 1954.75,784.8 1955.75,789.4 1956.75,794.1 1957.75,798.0 1958.75,801.4 1959.75,805.0 1960.75,808.2 1961.75,812.5 1962.75,816.8 1963.75,821.0 1964.75,823.7 1965.75,827.6 1966.75,830.5 1967.75,833.2 1968.75,836.0 1969.75,839.8 1970.75,830.5 1971.75,822.6 1972.75,825.1 1973.75,822.4 1974.75,817.5 1975.75,815.0 1976.75,804.1 1977.25,794.3 1977.5,789.2 1977.75,785.8 1978.0,788.3 1978.25,782.8 1978.5,784.0 1978.75,779.1 1979.0,778.9 1979.25,776.1 1979.5,773.5 1979.75,769.2 1980.0,761.8 1980.25,753.4 1980.5,749.7 1980.75,740.7 1981.0,738.6 1981.25,734.7 1981.5,732.0 1981.75,719.9 1982.0,718.3 1982.25,722.3 1982.5,717.0 1982.75,725.6 1983.0,717.9 1983.25,717.3 1983.5,725.7 1983.75,722.8 1984.0,726.6 1984.25,717.2 1984.5,710.1 1984.75,709.9 1985.0,698.9 1985.25,696.1 1985.5,691.2 1985.75,689.0 1986.0,690.4 1986.25,679.7 1986.5,680.3 1986.75,671.6 1987.0,676.1 1987.25,660.7 1987.5,673.1 1987.75,677.1 1988.0,671.7 1988.25,685.5 1988.5,682.8 1988.75,686.7 1989.0,680.3 1989.25,673.7 1989.5,663.9 1989.75,653.7 1990.0,653.7 1990.25,653.7 1990.5,660.7 1990.75,661.5 1991.0,675.7 1991.25,665.1 1991.5,679.8 1991.75,676.1 1992.0,673.2 1992.25,674.8 1992.5,667.2 1992.75,657.9 1993.0,662.9 1993.25,656.4 1993.5,651.4 1993.75,664.5 1994.0,658.7 1994.25,663.6 1994.5,674.6 1994.75,676.0 1995.0,669.0 1995.25,679.9 1995.5,664.9 1995.75,653.0 1996.0,654.7 1996.25,647.5 1996.5,630.0 1996.75,629.8 1997.0,628.4 1997.25,647.5 1997.5,631.9 1997.75,628.4 1998.0,628.4 1998.25,646.3 1998.5,649.9 1998.75,667.4 1999.0,671.5 1999.25,684.0 1999.5,682.1 1999.75,684.7 2000.0,682.0 2000.25,683.7 2000.5,678.0 2000.75,683.2 2001.0,682.4 2001.25,686.2 2001.5,696.0 2001.75,694.8 2002.0,700.9 2002.25,702.0 2002.5,704.7 2002.75,707.5 2003.0,704.6 2003.25,711.7 2003.5,710.7 2003.75,712.6 2004.0,720.3 2004.25,724.9 2004.5,719.2 2004.75,729.0 2005.0,728.4 2005.25,725.6 2005.5,730.1 2005.75,731.9 2006.0,733.5 2006.25,733.4 2006.5,733.0 2006.75,737.6 2007.0,741.0 2007.25,742.3 2007.5,743.3 2007.75,745.4 2008.0,742.5 2008.25,745.7 2008.5,747.7 2008.75,750.1 2009.0,749.8 2009.25,751.7 2009.5,752.3 2009.75,756.3 2010.0,750.5 2010.25,754.6 2010.5,758.6 2010.75,756.7 2011.0,754.3 2011.25,758.2 2011.5,756.6 2011.75,758.6 2012.0,760.6 2012.25,763.2 2012.5,762.0 2012.75,762.8 2013.0,763.8 2013.25,763.2 2013.5,762.3 2013.75,763.9 2014.0,765.0 2014.25,764.7 2014.5,764.7 2014.75,765.7 2015.0,764.8 2015.25,765.9 2015.5,767.6 2015.75,767.8 2016.0,768.9 2016.25,771.0 2016.5,770.2 2016.75,770.4 2017.0,769.7 2017.25,770.3 2017.5,772.5 2017.75,771.8 2018.0,773.8 2018.25,772.8 2018.5,774.7 2018.75,775.1 2019.0,776.7 2020.0,778.5 2021.0,782.8 2022.0,787.6 2023.0,792.6 2024.0,818.4 2025.0,857.9 2026.0,894.9 2027.0,911.9 2028.0,923.4 2029.0,919.8 2030.0,915.9 2031.0,912.9 2032.0,908.2 2033.0,902.5 2034.0,898.4 2035.0,897.9 2036.0,898.8 2037.0,895.9 2038.0,895.1 2039.0,897.1 2040.0,894.3 2041.0,894.3 2042.0,895.8 2043.0,886.0 2043.75,875.7 2044.0,881.6 2044.25,879.4 2044.5,875.3 2044.75,876.4 2045.0,877.8 2045.25,872.3 2045.5,872.1 2045.75,869.8 2046.0,873.0 2046.25,864.5 2046.5,871.7 2046.75,865.0 2047.0,868.6 2047.25,861.5 2047.5,862.1 2047.75,857.8 2048.0,856.1 2048.25,845.0 2048.5,845.2 2048.75,837.0 2049.0,836.4 2049.25,829.0 2049.5,827.4 2049.75,822.1 2050.0,824.1 2050.25,814.2 2050.5,811.6 2050.75,815.2 2051.0,806.3 2051.25,805.9 2051.5,798.2 2051.75,799.1 2052.0,788.1 2052.25,793.6 2052.5,787.9 2052.75,781.6 2053.0,779.2 2053.25,787.9 2053.5,782.2 2053.75,766.7 2054.0,775.2 2054.25,753.2 2054.5,746.4 2054.75,741.8 2055.0,723.8 2055.25,711.9 2055.5,712.3 2055.75,721.5 2056.0,712.2 2056.25,705.0 2056.5,728.0 2056.75,729.4 2057.0,739.1 2057.25,744.7 2057.5,753.7 2057.75,743.5 2058.0,739.1 2058.25,733.8 2058.5,731.4 2058.75,733.7 2059.0,719.7 2059.25,734.5 2059.5,719.7 2059.75,719.7 2060.0,725.6 2060.25,723.8 2060.5,719.7 2060.75,731.5 2061.0,758.4 2061.25,783.7 2061.5,811.0 2062.5,882.6 2063.5,869.5 2063.75,865.3 2064.0,863.4 2064.25,862.9 2064.5,861.8 2064.75,857.4 2065.0,857.4 2066.0,859.8 2067.0,864.9 2068.0,869.8 2069.0,873.4 2070.0,876.5 2071.0,879.1 2072.0,881.2 2073.0,882.7 2074.0,883.3 2075.0,884.5 2076.0,886.0 2077.0,887.8 2078.0,889.5 2079.0,891.5 2080.0,891.4 2081.0,889.5 2082.0,891.8 2083.0,895.7 2084.0,899.4 2085.0,897.7 2086.0,896.0 2087.0,899.7 2088.0,904.3 2089.0,902.0 2090.0,900.1 2091.0,898.9 2092.0,897.4 2093.0,900.0 2094.0,903.7 2095.0,900.7 2096.0,885.1 2097.0,878.7 2098.0,878.6 2099.0,879.2 2100.0,870.4 2101.0,850.1 2101.25,846.0 2101.5,841.7 2101.75,830.4 2102.0,820.3 2102.25,822.2 2102.5,814.6 2102.75,808.0 2103.0,801.1 2103.25,795.3 2103.5,790.0 2103.75,792.5 2104.0,791.0 2104.25,778.5 2104.5,777.2 2104.75,771.3 2105.0,766.5 2105.25,764.8 2105.5,766.4 2105.75,755.5 2106.0,765.6 2106.25,770.3 2106.5,768.8 2106.75,773.2 2107.0,772.9 2107.25,777.7 2107.5,762.5 2107.75,752.7 2108.0,746.8 2108.25,733.0 2108.5,722.5 2108.75,718.0 2109.0,722.4 2109.25,704.8 2109.5,703.1 2109.75,682.0 2110.0,681.1 2110.25,692.8 2110.5,691.8 2110.75,698.0 2111.0,715.8 2111.25,729.6 2111.5,733.4 2111.75,747.6 2112.0,747.6 2112.25,737.7 2112.5,736.6 2112.75,730.9 2113.0,723.7 2113.25,711.9 2113.5,716.4 2113.75,717.1 2114.0,724.4 2114.25,731.2 2114.5,732.0 2114.75,740.9 2115.0,748.6 2115.25,730.2 2115.5,730.0 2115.75,727.7 2116.0,721.7 2116.25,711.1 2116.5,704.0 2116.75,708.3 2117.0,700.2 2117.25,693.7 2117.5,679.7 2117.75,682.1 2118.0,677.5 2118.25,682.3 2118.5,697.3 2118.75,713.7 2119.0,707.6 2119.25,728.2 2119.5,732.9 2119.75,722.7 2120.0,717.0 2120.25,712.9 2120.5,700.6 2120.75,682.6 2121.0,680.6 2121.25,680.6 2121.5,690.9 2121.75,694.6 2122.0,699.5 2122.25,721.4 2122.5,718.6 2122.75,721.0 2123.0,714.0 2123.25,708.2 2123.5,705.5 2123.75,698.5 2124.0,697.6 2124.25,689.9 2124.5,690.5 2124.75,713.3 2125.0,710.4 2125.25,720.3 2125.5,728.0 2125.75,731.4 2126.0,732.8 2126.25,731.0 2126.5,734.3 2126.75,745.2 2127.0,747.5 2127.25,750.4 2127.5,748.5 2127.75,751.7 2128.0,757.5 2128.25,761.1 2128.5,767.3 2128.75,768.9 2129.0,776.3 2129.25,776.0 2129.5,779.2 2129.75,784.1 2130.75,795.1 2131.75,798.4 2132.75,803.0 2133.75,810.0 2134.75,815.9 2135.75,822.9 2136.75,829.4 2137.75,830.7 2138.75,826.6 2139.75,832.5 2140.75,839.3 2141.75,844.2 2142.75,848.5 2143.75,852.3 2144.75,855.4 2145.75,860.7 2146.75,867.4 2147.75,874.1 2148.75,878.9 2149.75,884.5 2150.75,886.6 2151.75,888.4 2152.75,891.7 2153.75,894.2 2154.75,891.8 2155.75,881.1 2156.75,895.3 2157.75,881.4 2158.75,874.0 2159.75,869.8 2160.75,866.2 2161.75,860.6 2162.75,854.2 2163.25,848.4 2163.5,839.4 2163.75,831.9 2164.0,829.9 2164.25,825.8 2164.5,816.9 2164.75,814.7 2165.0,814.3 2165.25,813.2 2165.5,808.6 2165.75,806.5 2166.0,799.4 2166.25,792.2 2166.5,792.9 2166.75,784.2 2167.0,781.3 2167.25,775.3 2167.5,773.1 2167.75,766.1 2168.0,772.1 2168.25,764.3 2168.5,763.9 2168.75,761.9 2169.0,761.3 2169.25,753.8 2169.5,737.2 2169.75,735.9 2170.0,742.7 2170.25,728.9 2170.5,723.1 2170.75,717.9 2171.0,707.3 2171.25,703.3 2171.5,699.8 2171.75,706.1 2172.0,698.7 2172.25,704.7 2172.5,706.8 2172.75,721.2 2173.0,723.7 2173.25,726.5 2173.5,744.6 2173.75,746.0 2174.0,740.9 2174.25,725.6 2174.5,712.2 2174.75,705.5 2175.0,686.1 2175.25,675.2 2175.5,675.2 2175.75,676.4 2176.0,675.2 2176.25,678.0 2176.5,679.5 2176.75,688.3 2177.0,693.1 2177.25,689.8 2177.5,702.2 2177.75,704.2 2178.0,714.5 2178.25,720.2 2178.5,720.7 2178.75,718.0 2179.0,702.7 2179.25,710.4 2179.5,700.2 2179.75,689.2 2180.0,689.3 2180.25,691.5 2180.5,678.4 2180.75,680.3 2181.0,676.2 2181.25,686.8 2181.5,682.8 2181.75,699.5 2182.0,713.7 2182.25,728.9 2182.5,722.2 2182.75,719.6 2183.0,704.6 2183.25,703.7 2183.5,710.1 2183.75,695.4 2184.0,711.2 2184.25,704.9 2184.5,714.1 2184.75,715.5 2185.0,731.8 2185.25,737.2 2185.5,748.0 2185.75,743.7 2186.0,744.2 2186.25,742.3 2186.5,748.7 2186.75,754.0 2187.0,755.4 2187.25,759.2 2187.5,760.5 2187.75,760.2 2188.0,764.5 2188.25,765.7 2188.5,764.0 2188.75,775.2 2189.0,775.0 2189.25,774.8 2189.5,781.3 2189.75,784.3 2190.0,788.9 2190.25,792.1 2190.5,788.2 2190.75,795.1 2191.0,799.1 2191.25,797.5 2191.5,798.6 2191.75,804.3 2192.0,807.0 2192.25,809.6 2192.5,810.4 2192.75,813.8 2193.0,817.1 2194.0,827.1 2195.0,836.7 2196.0,844.1 2197.0,852.0 2198.0,859.8 2199.0,868.1 2200.0,874.5 2201.0,880.8 2202.0,885.4 2203.0,890.8 2204.0,895.0 2205.0,900.6 2206.0,905.7 2207.0,910.8 2208.0,915.7 2209.0,917.8 2210.0,920.4 2211.0,924.5 2212.0,927.8 2213.0,933.1 2214.0,939.1 2215.0,944.8 2216.0,947.6 2217.0,951.5 2218.0,954.0 2219.0,955.9 2220.0,958.4 2221.0,960.8 2222.0,962.7 2223.0,960.2 2224.0,957.9 2225.0,953.0 2226.0,933.9 2226.5,918.0 2226.75,909.3 2227.0,900.4 2227.25,892.4 2227.5,879.9 2227.75,876.0 2228.0,864.4 2228.25,855.7 2228.5,850.2 2228.75,845.1 2229.0,842.6 2229.25,839.7 2229.5,835.3 2229.75,838.1 2230.0,832.5 2230.25,827.9 2230.5,834.0 2230.75,840.0 2231.0,832.6 2231.25,830.2 2231.5,840.6 2231.75,842.3 2232.0,830.4 2232.25,826.2 2232.5,823.6 2232.75,827.5 2233.0,814.2 2233.25,814.4 2233.5,809.5 2233.75,799.2 2234.0,805.1 2234.25,806.5 2234.5,817.0 2234.75,817.3 2235.0,824.5 2235.25,808.0 2235.5,805.1 2235.75,797.8 2236.0,792.2 2236.25,797.8 2236.5,781.2 2236.75,792.3 2237.0,794.2 2237.25,785.0 2237.5,796.3 2237.75,793.0 2238.0,799.1 2238.25,795.2 2238.5,790.2 2238.75,782.7 2239.0,792.1 2239.25,775.5 2239.5,778.2 2239.75,785.1 2240.0,780.0 2240.25,785.3 2240.5,790.2 2240.75,790.6 2241.0,797.1 2241.25,773.7 2241.5,790.6 2241.75,771.4 2242.0,751.8 2242.25,754.0 2242.5,747.7 2242.75,749.0 2243.0,747.7 2243.25,753.8 2243.5,766.4 2243.75,770.7 2244.0,771.1 2244.25,777.2 2244.5,773.6 2244.75,770.4 2245.0,765.6 2245.25,759.7 2245.5,764.3 2245.75,748.7 2246.0,748.7 2246.25,752.6 2246.5,748.7 2246.75,748.7 2247.0,748.7 2247.25,751.5 2247.5,761.3 2247.75,757.2 2248.0,761.3 2248.25,769.3 2248.5,770.7 2248.75,767.1 2249.0,780.6 2249.25,777.8 2249.5,777.2 2249.75,783.3 2250.0,780.8 2250.25,778.2 2250.5,772.5 2250.75,774.4 2251.0,783.3 2251.25,783.6 2251.5,787.1 2251.75,787.0 2252.0,784.8 2252.25,786.8 2252.5,792.9 2252.75,801.9 2253.0,803.6 2253.25,815.1 2253.5,814.0 2253.75,817.9 2254.0,827.1 2254.25,828.4 2254.5,840.6 2254.75,840.3 2255.0,846.9 2255.25,851.7 2255.5,856.2 2256.5,877.2 2257.5,888.1 2258.5,896.8 2259.5,900.7 2260.5,904.7 2261.5,907.1 2262.5,910.3 2263.5,917.7 2264.5,927.2 2265.5,931.9 2266.5,937.2 2267.5,942.2 2268.5,936.9 2269.5,938.2 2270.5,944.9 2271.5,949.7 2272.5,952.8 2273.5,957.2 2274.5,958.9 2275.5,963.4 2276.5,970.5 2277.5,969.3 2278.5,966.6 2279.5,972.6 2280.5,970.9 2281.5,966.1 2282.5,970.0 2283.5,967.5 2284.5,957.9 2285.5,947.8 2286.5,937.2 2287.5,927.5 2287.75,915.5 2288.0,908.8 2288.25,894.6 2288.5,877.1 2288.75,868.6 2289.0,849.2 2289.25,842.0 2289.5,828.1 2289.75,812.2 2290.0,792.4 2290.25,785.3 2290.5,761.9 2290.75,758.3 2291.0,741.1 2291.25,756.1 2291.5,731.5 2291.75,730.0 2292.0,736.2 2292.25,749.2 2292.5,759.4 2292.75,784.0 2293.0,793.5 2293.25,783.2 2293.5,772.4 2293.75,758.7 2294.0,761.6 2294.25,756.4 2294.5,740.3 2294.75,742.0 2295.0,755.7 2295.25,758.0 2295.5,775.3 2295.75,787.8 2296.0,799.6 2296.25,795.4 2296.5,789.0 2296.75,785.7 2297.0,783.4 2297.25,765.8 2297.5,752.7 2297.75,749.5 2298.0,742.8 2298.25,742.1 2298.5,744.7 2298.75,745.1 2299.0,740.4 2299.25,736.9 2299.5,731.9 2299.75,736.7 2300.0,739.1 2300.25,736.6 2300.5,741.3 2300.75,725.7 2301.0,726.6 2301.25,740.3 2301.5,732.7 2301.75,735.5 2302.0,732.7 2302.25,742.0 2302.5,733.2 2302.75,728.4 2303.0,732.8 2303.25,729.3 2303.5,735.9 2303.75,728.0 2304.0,730.3 2304.25,730.2 2304.5,735.5 2304.75,731.6 2305.0,743.8 2305.25,731.1 2305.5,737.7 2305.75,734.6 2306.0,741.3 2306.25,736.5 2306.5,738.0 2306.75,731.9 2307.0,731.2 2307.25,731.2 2307.5,734.6 2307.75,735.4 2308.0,742.0 2308.25,744.4 2308.5,749.7 2308.75,742.5 2309.0,737.7 2309.25,734.7 2309.5,739.8 2309.75,740.4 2310.0,748.2 2310.25,738.8 2310.5,749.8 2310.75,752.2 2311.0,737.7 2311.25,752.1 2311.5,753.5 2311.75,755.0 2312.0,747.2 2312.25,751.8 2312.5,743.4 2312.75,745.0 2313.0,744.9 2313.25,754.4 2313.5,744.7 2313.75,752.3 2314.0,748.8 2314.25,746.0 2314.5,752.3 2314.75,756.1 2315.0,752.2 2315.25,761.8 2315.5,758.4 2315.75,760.7 2316.0,768.8 2316.25,769.8 2316.5,771.5 2316.75,774.4 2317.0,786.0 2317.25,791.9 2317.5,794.7 2317.75,801.9 2318.0,802.3 2318.25,812.1 2318.5,816.9 2318.75,821.4 2319.0,824.6 2319.25,830.6 2319.5,833.9 2319.75,836.1 2320.75,838.2 2321.75,841.5 2322.75,842.4 2323.75,845.1 2324.75,848.0 2325.75,850.5 2326.75,854.8 2327.75,859.7 2328.75,864.6 2329.75,867.5 2330.75,871.8 2331.75,876.6 2332.75,884.0 2333.75,889.7 2334.75,895.0 2335.75,899.4 2336.75,904.6 2337.75,909.8 2338.75,917.4 2339.75,925.5 2340.75,932.8 2341.75,937.9 2342.75,942.5 2343.75,938.7 2344.75,921.2 2345.75,922.6 2346.75,923.6 2347.75,913.6 2348.75,909.2 2349.75,903.9 2350.25,891.1 2350.5,887.0 2350.75,883.1 2351.0,874.1 2351.25,870.8 2351.5,868.6 2351.75,864.1 2352.0,861.0 2352.25,863.8 2352.5,859.1 2352.75,855.7 2353.0,848.9 2353.25,848.5 2353.5,847.2 2353.75,837.5 2354.0,834.1 2354.25,836.0 2354.5,834.6 2354.75,832.6 2355.0,824.0 2355.25,825.1 2355.5,818.4 2355.75,820.1 2356.0,813.5 2356.25,811.6 2356.5,812.1 2356.75,804.5 2357.0,798.4 2357.25,795.7 2357.5,793.0 2357.75,785.8 2358.0,785.5 2358.25,783.8 2358.5,785.0 2358.75,763.7 2359.0,764.1 2359.25,761.1 2359.5,770.0 2359.75,773.4 2360.0,761.1 2360.25,758.2 2360.5,763.1 2360.75,746.4 2361.0,757.8 2361.25,749.1 2361.5,762.1 2361.75,759.6 2362.0,761.0 2362.25,761.8 2362.5,752.5 2362.75,758.8 2363.0,748.1 2363.25,746.7 2363.5,753.0 2363.75,738.7 2364.0,748.9 2364.25,738.7 2364.5,753.2 2364.75,752.6 2365.0,748.6 2365.25,751.4 2365.5,750.6 2365.75,744.2 2366.0,729.6 2366.25,724.0 2366.5,727.6 2366.75,704.4 2367.0,708.6 2367.25,714.7 2367.5,713.1 2367.75,721.2 2368.0,718.2 2368.25,704.3 2368.5,705.0 2368.75,698.6 2369.0,699.5 2369.25,702.0 2369.5,698.6 2369.75,701.4 2370.0,711.0 2370.25,708.4 2370.5,717.1 2370.75,717.4 2371.0,738.3 2371.25,734.4 2371.5,730.6 2371.75,739.3 2372.0,732.1 2372.25,735.3 2372.5,726.2 2372.75,735.2 2373.0,731.4 2373.25,732.2 2373.5,735.6 2373.75,737.8 2374.0,745.9 2374.25,754.1 2374.5,748.6 2374.75,751.3 2375.0,762.8 2375.25,769.4 2375.5,766.2 2375.75,774.1 2376.0,777.9 2376.25,785.7 2376.5,789.2 2376.75,789.8 2377.0,792.7 2377.25,800.2 2377.5,798.8 2377.75,806.8 2378.0,808.6 2378.25,815.0 2378.5,816.7 2378.75,817.8 2379.0,821.5 2379.25,823.3 2379.5,824.7 2380.5,832.7 2381.5,840.0 2382.5,845.7 2383.5,852.9 2384.5,860.1 2385.5,866.1 2386.5,870.4 2387.5,875.3 2388.5,881.8 2389.5,888.3 2390.5,895.9 2391.5,902.3 2392.5,908.6 2393.5,914.3 2394.5,920.5 2395.5,924.5 2396.5,929.2 2397.5,932.2 2398.5,935.7 2399.5,938.8 2400.5,940.4 2401.5,941.8 2402.5,947.4 2403.5,952.5 2404.5,953.5 2405.5,946.8 2406.5,939.6 2407.5,931.6 2408.5,926.1 2409.5,922.0 2410.5,922.0 2411.5,917.1 2412.5,909.7 2412.75,908.3 2413.0,904.5 2413.25,900.2 2413.5,894.5 2413.75,894.9 2414.0,892.1 2414.25,884.9 2414.5,880.6 2414.75,870.6 2415.0,863.6 2415.25,863.3 2415.5,853.8 2415.75,852.2 2416.0,847.4 2416.25,844.4 2416.5,839.9 2416.75,835.3 2417.0,827.4 2417.25,835.0 2417.5,823.8 2417.75,810.2 2418.0,808.9 2418.25,802.6 2418.5,798.9 2418.75,788.8 2419.0,796.8 2419.25,798.3 2419.5,784.1 2419.75,785.4 2420.0,779.2 2420.25,773.5 2420.5,786.7 2420.75,778.0 2421.0,788.6 2421.25,794.3 2421.5,806.6 2421.75,799.0 2422.0,791.1 2422.25,780.7 2422.5,779.0 2422.75,772.0 2423.0,769.8 2423.25,768.1 2423.5,759.1 2423.75,749.3 2424.0,743.2 2424.25,751.7 2424.5,736.2 2424.75,731.9 2425.0,747.6 2425.25,751.7 2425.5,752.0 2425.75,754.4 2426.0,757.9 2426.25,770.9 2426.5,762.0 2426.75,763.7 2427.0,751.2 2427.25,750.9 2427.5,747.9 2427.75,742.1 2428.0,745.5 2428.25,751.0 2428.5,748.6 2428.75,753.8 2429.0,763.0 2429.25,775.8 2429.5,768.3 2429.75,757.3 2430.0,753.0 2430.25,751.9 2430.5,754.5 2430.75,736.1 2431.0,741.9 2431.25,741.4 2431.5,739.8 2431.75,737.9 2432.0,746.2 2432.25,746.1 2432.5,754.7 2432.75,737.0 2433.0,755.1 2433.25,749.9 2433.5,746.1 2433.75,750.5 2434.0,741.2 2434.25,722.7 2434.5,731.4 2434.75,730.8 2435.0,722.7 2435.25,722.7 2435.5,732.8 2435.75,739.2 2436.0,740.2 2436.25,747.3 2436.5,750.5 2436.75,752.1 2437.0,756.5 2437.25,763.5 2437.5,753.5 2437.75,761.1 2438.0,771.5 2438.25,768.4 2438.5,770.1 2438.75,775.2 2439.0,770.6 2439.25,772.4 2439.5,773.3 2439.75,775.4 2440.0,782.6 2440.25,785.8 2440.5,783.0 2440.75,783.5 2441.0,788.1 2441.25,790.5 2441.5,791.3 2441.75,787.0 2442.0,792.8 2442.25,791.3 2442.5,798.3 2442.75,797.0 2443.0,798.1 2443.25,803.5 2443.5,803.7 2443.75,802.5 2444.0,802.7 2444.25,804.5 2444.5,806.2 2444.75,810.2 2445.0,816.0 2445.25,815.2 2445.5,818.6 2445.75,822.3 2446.75,829.3 2447.75,835.9 2448.75,839.5 2449.75,843.1 2450.75,846.4 2451.75,849.6 2452.75,853.2 2453.75,855.4 2454.75,858.3 2455.75,860.0 2456.75,861.3 2457.75,865.2 2458.75,870.9 2459.75,876.1 2460.75,877.8 2461.75,880.0 2462.75,882.5 2463.75,885.3 2464.75,888.5 2465.75,891.6 2466.75,893.9 2467.75,891.7 2468.75,872.5 2469.75,855.9 2470.75,855.3 2471.75,859.7 2472.75,859.6 2473.75,857.7 2474.5,857.5 2474.75,850.5 2475.0,851.5 2475.25,848.4 2475.5,840.6 2475.75,836.5 2476.0,837.4 2476.25,831.2 2476.5,825.5 2476.75,819.0 2477.0,823.2 2477.25,821.7 2477.5,824.5 2478.5,821.2 2479.0,827.6 2479.25,828.7 2479.5,830.6 2479.75,831.6 2480.0,828.0 2480.25,820.0 2480.5,813.3 2480.75,806.8 2481.0,797.1 2481.25,786.7 2481.5,785.9 2481.75,784.0 2482.0,770.0 2482.25,770.3 2482.5,766.1 2482.75,761.3 2483.0,758.1 2483.25,754.6 2483.5,753.9 2483.75,762.1 2484.0,761.8 2484.25,745.4 2484.5,740.8 2484.75,749.9 2485.0,740.7 2485.25,738.2 2485.5,732.2 2485.75,736.8 2486.0,733.5 2486.25,732.9 2486.5,743.7 2486.75,752.0 2487.0,751.5 2487.25,752.1 2487.5,746.0 2487.75,747.3 2488.0,739.0 2488.25,741.6 2488.5,733.7 2488.75,725.4 2489.0,724.8 2489.25,718.2 2489.5,729.9 2489.75,736.2 2490.0,726.1 2490.25,733.6 2490.5,721.8 2490.75,735.8 2491.0,731.1 2491.25,714.1 2491.5,728.5 2491.75,712.7 2492.0,705.9 2492.25,705.9 2492.5,716.8 2492.75,711.5 2493.0,721.7 2493.25,712.3 2493.5,722.0 2493.75,730.6 2494.0,717.5 2494.25,720.3 2494.5,711.8 2494.75,711.8 2495.0,708.2 2495.25,714.9 2495.5,701.1 2495.75,714.9 2496.0,723.5 2496.25,709.9 2496.5,721.5 2496.75,737.0 2497.0,727.4 2497.25,701.0 2497.5,707.3 2497.75,690.5 2498.0,700.1 2498.25,690.5 2498.5,691.8 2498.75,695.7 2499.0,707.4 2499.25,708.7 2499.5,712.1 2499.75,720.7 2500.0,728.4 2500.25,727.8 2500.5,740.0 2500.75,734.4 2501.0,746.2 2501.25,748.2 2501.5,757.4 2501.75,752.8 2502.0,754.7 2502.25,754.8 2502.5,764.9 2502.75,763.4 2503.0,761.2 2503.25,765.6 2503.5,766.9 2503.75,774.4 2504.0,774.7 2504.25,773.7 2504.5,779.5 2504.75,781.6 2505.0,781.6 2505.25,783.4 2505.5,783.9 2505.75,785.4 2506.0,786.6 2507.0,791.0 2508.0,796.8 2509.0,801.5 2510.0,806.5 2511.0,810.4 2512.0,811.4 2513.0,813.9 2514.0,816.6 2515.0,819.3 2516.0,824.8 2517.0,830.2 2518.0,833.3 2519.0,836.1 2520.0,840.6 2521.0,844.2 2522.0,847.8 2523.0,851.1 2524.0,853.2 2525.0,858.3 2526.0,862.9 2527.0,868.0 2528.0,872.8 2529.0,877.4 2530.0,880.6 2531.0,882.3 2532.0,856.9 2533.0,851.9 2534.0,860.3 2535.0,859.5 2536.0,859.3 2536.25,853.1 2536.5,856.5 2536.75,854.9 2537.0,852.8 2537.25,848.1 2537.5,841.1 2537.75,843.8 2538.0,838.6 2538.25,837.5 2538.5,829.4 2538.75,831.5 2539.0,831.2 2539.25,825.8 2539.5,827.8 2539.75,830.8 2540.0,824.1 2540.25,818.4 2540.5,826.1 2540.75,805.4 2541.0,806.5 2541.25,809.8 2541.5,802.8" fill="none" stroke="#4055a3" stroke-width="1.25" stroke-linejoin="round"/><path d="M645.8 578V992" stroke="#4055a3" stroke-width="1.6" fill="none"/></svg>
<div style="position:absolute;left:614px;top:578px;width:30px;height:14px;overflow:hidden;"><span class="t" style="left:3.0px;top:-4px;font-size:14.6px;line-height:16px;color:#4055a3;letter-spacing:0.06px;">110</span></div>
<span class="t" style="left:616.4px;top:661px;font-size:14.2px;line-height:16px;color:#4055a3;letter-spacing:-0.04px;">100</span>
<span class="t" style="left:624.4px;top:748px;font-size:14.0px;line-height:16px;color:#4055a3;letter-spacing:0.03px;">90</span>
<span class="t" style="left:624.4px;top:836px;font-size:14.0px;line-height:16px;color:#4055a3;letter-spacing:0.03px;">80</span>
<span class="t" style="left:624.4px;top:924px;font-size:14.0px;line-height:16px;color:#4055a3;letter-spacing:0.03px;">70</span>
<span class="t" style="left:2403.0px;top:581px;font-size:15.8px;line-height:17px;color:#4055a3;letter-spacing:-0.02px;">Temperature (°F)</span><div style="position:absolute;left:614px;top:54px;width:1944px;height:62px;background:#f4f4f4;border-bottom:1px solid #e6e6e6;box-sizing:content-box;"></div>
<div style="position:absolute;left:614px;top:117px;width:1944px;height:1px;background:#f1f1f1;"></div>
<div style="position:absolute;left:628px;top:62.5px;width:62px;height:47.2px;background:#007960;border-radius:7px;"></div>
<svg style="position:absolute;left:635.3px;top:73.5px" width="25" height="24" viewBox="0 0 25 24"><path d="M1.3 0 V22.6 H25" fill="none" stroke="#fff" stroke-width="2.4"/><path d="M4.5 15 L6.5 17 L10.5 10.5 L13 13.5 L17 3.5 L19.5 14.5 L22 9" fill="none" stroke="#fff" stroke-width="1.9"/></svg>
<svg style="position:absolute;left:667px;top:82.5px;color:#e3e3e3;" width="14.6" height="9.3" viewBox="0 0 15 9.5" preserveAspectRatio="none" fill="currentColor"><path d="M1.9 0 L7.5 5.6 L13.1 0 L15 1.9 L7.5 9.5 L0 1.9 Z"/></svg>
<div style="position:absolute;left:697.2px;top:63.6px;width:67.6px;height:44.6px;background:#f0f0f0;border-radius:3px;box-shadow:inset 0 2px 4px rgba(0,0,0,.13);"></div>
<svg style="position:absolute;left:722.4px;top:68.2px" width="17.6" height="18.8" viewBox="0 0 17.6 18.8"><rect x="0.6" y="3" width="16.4" height="15.2" rx="1.3" fill="#fff" stroke="#333" stroke-width="1.2"/><rect x="0.6" y="3" width="16.4" height="2.6" fill="#333"/><path d="M0.6 9.8 H17 M0.6 14 H17 M4.7 5.6 V18 M8.8 5.6 V18 M12.9 5.6 V18" stroke="#555" stroke-width="0.6" fill="none"/><rect x="3.3" y="0.5" width="2.8" height="4.6" rx="1.3" fill="#fff" stroke="#333" stroke-width="0.9"/><rect x="11.5" y="0.5" width="2.8" height="4.6" rx="1.3" fill="#fff" stroke="#333" stroke-width="0.9"/></svg>
<span class="t" style="left:708.0px;top:90px;font-size:12.0px;line-height:14px;color:#505050;letter-spacing:-0.24px;">Calendar</span>
<svg style="position:absolute;left:782.6px;top:68.2px" width="17.4" height="17.8" viewBox="0 0 17.4 17.8"><rect x="-5.1" y="-3.1" width="10.2" height="6.2" rx="3.1" transform="translate(5.9 6) rotate(45)" fill="none" stroke="#333" stroke-width="1.9"/><rect x="-5.1" y="-3.1" width="10.2" height="6.2" rx="3.1" transform="translate(11.5 11.8) rotate(45)" fill="none" stroke="#333" stroke-width="1.9"/></svg>
<span class="t" style="left:776.5px;top:90px;font-size:12.0px;line-height:14px;color:#505050;letter-spacing:-0.51px;">Chain</span>
<svg style="position:absolute;left:839px;top:71.3px" width="19" height="15.3" viewBox="0 0 19 15.3"><rect x="0" y="0" width="19" height="3.9" rx="0.6" fill="#333"/><rect x="13" y="1.2" width="5" height="1.5" fill="#ccc"/><rect x="0" y="5.7" width="19" height="3.9" rx="0.6" fill="#333"/><rect x="7" y="6.9" width="11" height="1.5" fill="#aaa"/><rect x="0" y="11.4" width="19" height="3.9" rx="0.6" fill="#333"/><rect x="10.5" y="12.6" width="7.5" height="1.5" fill="#ccc"/></svg>
<span class="t" style="left:828.0px;top:90px;font-size:12.0px;line-height:14px;color:#505050;letter-spacing:-0.50px;">Capsule</span>
<div style="position:absolute;left:888px;top:62.8px;width:1px;height:46.5px;background:#ddd;"></div>
<svg style="position:absolute;left:915px;top:69.5px" width="14.2" height="18.8" viewBox="0 0 14 19" preserveAspectRatio="none" fill="#333"><path d="M3.5 0 L7 4.6 H4.6 V19 H2.4 V4.6 H0 Z"/><path d="M10.5 19 L14 14.4 H11.6 V0 H9.4 V14.4 H7 Z"/></svg>
<svg style="position:absolute;left:931.2px;top:69.8px" width="21.6" height="16.8" viewBox="0 0 22 18" preserveAspectRatio="none"><path d="M0.7 0 V17 H22" fill="none" stroke="#333" stroke-width="1.4"/><path d="M3.5 13 L9 7.5 L12 10.5 L18 4.5" fill="none" stroke="#333" stroke-width="2.6"/><path d="M14.5 2.2 H20.6 V8.3 Z" fill="#333"/></svg>
<span class="t" style="left:908.7px;top:90px;font-size:12.0px;line-height:14px;color:#505050;letter-spacing:-0.60px;">One Lane</span>
<svg style="position:absolute;left:987px;top:69.5px" width="14.2" height="18.8" viewBox="0 0 14 19" preserveAspectRatio="none" fill="#333"><path d="M3.5 0 L7 4.6 H4.6 V19 H2.4 V4.6 H0 Z"/><path d="M10.5 19 L14 14.4 H11.6 V0 H9.4 V14.4 H7 Z"/></svg>
<svg style="position:absolute;left:1004px;top:69.8px" width="21.6" height="16.8" viewBox="0 0 22 18" preserveAspectRatio="none"><path d="M0.7 0 V17 H22" fill="none" stroke="#333" stroke-width="1.4"/><path d="M3.5 13 L9 7.5 L12 10.5 L18 4.5" fill="none" stroke="#333" stroke-width="2.6"/><path d="M14.5 2.2 H20.6 V8.3 Z" fill="#333"/></svg>
<span class="t" style="left:979.0px;top:90px;font-size:12.0px;line-height:14px;color:#505050;letter-spacing:-0.71px;">One Y-Axis</span>
<svg style="position:absolute;left:1057.3px;top:68px" width="8.6" height="21" viewBox="0 0 8 20" preserveAspectRatio="none" fill="#333"><path d="M4 0 L8 4.8 H5.1 V8.2 H2.9 V4.8 H0 Z"/><path d="M4 20 L8 15.2 H5.1 V11.2 H2.9 V15.2 H0 Z"/></svg>
<svg style="position:absolute;left:1069px;top:69.8px" width="21.6" height="16.8" viewBox="0 0 22 18" preserveAspectRatio="none"><path d="M0.7 0 V17 H22" fill="none" stroke="#333" stroke-width="1.4"/><path d="M3.5 13 L9 7.5 L12 10.5 L18 4.5" fill="none" stroke="#333" stroke-width="2.6"/><path d="M14.5 2.2 H20.6 V8.3 Z" fill="#333"/></svg>
<span class="t" style="left:1054.3px;top:90px;font-size:12.0px;line-height:14px;color:#505050;letter-spacing:-0.60px;">Spread</span>
<svg style="position:absolute;left:1115.9px;top:69px" width="16" height="17" viewBox="0 0 16 17"><path fill-rule="evenodd" d="M0 1.2 C0 0.5 0.5 0 1.2 0 H6.8 L15.5 9 C16.1 9.7 16.1 10.4 15.5 11 L10.6 16.3 C10 16.9 9.2 16.9 8.6 16.3 L0 7.5 Z M3.4 2 A1.5 1.5 0 1 0 3.4 5 A1.5 1.5 0 1 0 3.4 2 Z" fill="#333"/></svg>
<svg style="position:absolute;left:1135.6px;top:78px;color:#333;" width="6.2" height="3.6" viewBox="0 0 10 5.5" preserveAspectRatio="none" fill="currentColor"><path d="M0 0 H10 L5 5.5 Z"/></svg>
<span class="t" style="left:1112.6px;top:90px;font-size:12.0px;line-height:14px;color:#505050;letter-spacing:-0.39px;">Labels</span>
<div style="position:absolute;left:1165px;top:62.8px;width:1px;height:46.5px;background:#ddd;"></div>
<svg style="position:absolute;left:1188.3px;top:68.5px" width="19" height="17.5" viewBox="0 0 19 17.5"><path d="M0.6 12.5 L4.6 0.8 L8.2 11.8 L10 6" fill="none" stroke="#333" stroke-width="1.5"/><path d="M10.6 7.5 L12.6 16.5" stroke="#333" stroke-width="1.5" stroke-dasharray="1.5 1.6" fill="none"/><path d="M13 11.5 L18.5 13.5" stroke="#333" stroke-width="1.5" stroke-dasharray="1.3 1.6" fill="none"/></svg>
<svg style="position:absolute;left:1210px;top:78.6px;color:#333;" width="6.2" height="3.6" viewBox="0 0 10 5.5" preserveAspectRatio="none" fill="currentColor"><path d="M0 0 H10 L5 5.5 Z"/></svg>
<span class="t" style="left:1179.3px;top:91px;font-size:12.0px;line-height:14px;color:#505050;letter-spacing:-0.11px;">Dimming</span>
<div style="position:absolute;left:1245px;top:62.8px;width:1px;height:46.5px;background:#ddd;"></div>
<svg style="position:absolute;left:1265px;top:69.9px" width="17.5" height="17" viewBox="0 0 17.5 17"><circle cx="7.2" cy="7.2" r="6.2" fill="none" stroke="#999" stroke-width="1.8"/><path d="M11.8 11.6 L16.6 16.2" stroke="#999" stroke-width="2.2" stroke-linecap="round"/><path d="M4 7.2 H10.4 M7.2 4 V10.4" stroke="#999" stroke-width="1.2"/></svg>
<span class="t" style="left:1259.0px;top:90px;font-size:12.0px;line-height:14px;color:#aaa;letter-spacing:-0.22px;">Zoom</span>
<svg style="position:absolute;left:1308.7px;top:67.5px" width="17.8" height="18.5" viewBox="0 0 17.8 18.5"><path d="M5.2 7.6 H2.6 C1.6 7.6 0.9 8.3 0.9 9.3 V15.8 C0.9 16.8 1.6 17.5 2.6 17.5 H15.2 C16.2 17.5 16.9 16.8 16.9 15.8 V9.3 C16.9 8.3 16.2 7.6 15.2 7.6 H12.6" fill="none" stroke="#333" stroke-width="1.8"/><path d="M8.9 0 L13.4 4.6 H10.1 V13 H7.7 V4.6 H4.4 Z" fill="#333"/></svg>
<svg style="position:absolute;left:1329px;top:78.6px;color:#333;" width="6.2" height="3.6" viewBox="0 0 10 5.5" preserveAspectRatio="none" fill="currentColor"><path d="M0 0 H10 L5 5.5 Z"/></svg>
<span class="t" style="left:1306.3px;top:90px;font-size:12.0px;line-height:14px;color:#333;letter-spacing:-0.40px;">Export</span>
<svg style="position:absolute;left:1370.5px;top:69.9px" width="17.6" height="13.6" viewBox="0 0 17.6 13.6"><path d="M8.8 0.8 C13.3 0.8 16.8 2.9 16.8 5.6 C16.8 8.3 13.3 10.4 8.8 10.4 C7.9 10.4 7 10.3 6.2 10.1 C4.8 11.5 3 12.5 1 12.8 C2.2 11.8 2.9 10.6 3.1 9.3 C1.7 8.4 0.8 7.1 0.8 5.6 C0.8 2.9 4.3 0.8 8.8 0.8 Z" fill="none" stroke="#999" stroke-width="1.3"/><circle cx="5.6" cy="5.6" r="0.8" fill="#999"/><circle cx="8.8" cy="5.6" r="0.8" fill="#999"/><circle cx="12" cy="5.6" r="0.8" fill="#999"/></svg>
<span class="t" style="left:1355.8px;top:90px;font-size:12.0px;line-height:14px;color:#aaa;letter-spacing:-0.12px;">Annotate</span><svg style="position:absolute;left:624px;top:1026.5px;color:#007960;" width="12.5" height="18" viewBox="0 0 12.5 18" preserveAspectRatio="none" fill="currentColor"><path d="M4.6 0 H7.9 V10.5 L10.8 7.6 L12.5 9.4 L6.25 18 L0 9.4 L1.7 7.6 L4.6 10.5 Z"/></svg>
<span class="t" style="left:647.0px;top:1030px;font-size:13.8px;line-height:15px;color:#0a7a64;letter-spacing:-0.18px;">10/1/2018 7:11 AM</span>
<span class="t" style="left:763.5px;top:1030px;font-size:13.8px;line-height:15px;color:#0a7a64;letter-spacing:-1.20px;text-decoration:underline;text-decoration-color:#6fb3a5;text-decoration-thickness:1.6px;text-underline-offset:2px;">EDT</span>
<svg style="position:absolute;left:1429.8px;top:1027px;color:#007960;" width="18.2" height="17.5" viewBox="0 0 18 17" preserveAspectRatio="none" fill="currentColor"><path d="M9.5 0 V17 L0 8.5 Z M18 0 V17 L8.5 8.5 Z"/></svg>
<svg style="position:absolute;left:1465.8px;top:1027px;color:#007960;" width="10.2" height="17.5" viewBox="0 0 10 17" preserveAspectRatio="none" fill="currentColor"><path d="M10 0 V17 L0 8.5 Z"/></svg>
<span class="t" style="left:1493.8px;top:1029px;font-size:14.2px;line-height:16px;color:#0a7a64;letter-spacing:-0.02px;">1 month</span>
<svg style="position:absolute;left:1563.7px;top:1027px;color:#007960;" width="10.3" height="17.5" viewBox="0 0 10 17" preserveAspectRatio="none" fill="currentColor"><path d="M0 0 V17 L10 8.5 Z"/></svg>
<svg style="position:absolute;left:1591.6px;top:1027px;color:#007960;" width="18.4" height="17.5" viewBox="0 0 18 17" preserveAspectRatio="none" fill="currentColor"><path d="M8.5 0 V17 L18 8.5 Z M0 0 V17 L9.5 8.5 Z"/></svg>
<svg style="position:absolute;left:1627.7px;top:1027px;color:#007960;" width="11.8" height="17.5" viewBox="0 0 12 17" preserveAspectRatio="none" fill="currentColor"><path d="M0 0 V17 L9.5 8.5 Z"/><rect x="9.6" y="0" width="2.4" height="17"/></svg>
<svg style="position:absolute;left:1659.5px;top:1029.5px;color:#007960;" width="13.1" height="13" viewBox="0 0 13 13" preserveAspectRatio="none" fill="currentColor"><path d="M6.5 0.6 C8.3 0.6 9.9 1.4 11 2.7 L12.4 1.3 V5.6 H8.1 L9.6 4.1 C8.8 3.2 7.7 2.6 6.5 2.6 C4.8 2.6 3.4 3.7 2.8 5.2 H0.7 C1.4 2.6 3.7 0.6 6.5 0.6 Z"/><path d="M6.5 12.4 C4.7 12.4 3.1 11.6 2 10.3 L0.6 11.7 V7.4 H4.9 L3.4 8.9 C4.2 9.8 5.3 10.4 6.5 10.4 C8.2 10.4 9.6 9.3 10.2 7.8 H12.3 C11.6 10.4 9.3 12.4 6.5 12.4 Z"/></svg>
<span class="t" style="left:2393.4px;top:1030px;font-size:13.8px;line-height:15px;color:#0a7a64;letter-spacing:-0.19px;">10/31/2018 5:11 PM</span>
<span class="t" style="left:2517.3px;top:1030px;font-size:13.8px;line-height:15px;color:#0a7a64;letter-spacing:-1.20px;text-decoration:underline;text-decoration-color:#6fb3a5;text-decoration-thickness:1.6px;text-underline-offset:2px;">EDT</span>
<div style="position:absolute;left:614px;top:1052.5px;width:1944px;height:80px;background:#f5f5f5;border-top:1px solid #e6e6e6;box-sizing:border-box;"></div>
<svg style="position:absolute;left:0;top:1052px" width="2558" height="40" viewBox="0 1052 2558 40"><path d="M1431 1063.2 H2508.5 A3 3 0 0 1 2511.5 1066.2 V1075.6 A3 3 0 0 1 2508.5 1078.6 H1431" fill="#f5f5f5" stroke="#d9d9d9" stroke-width="2.4"/><rect x="644" y="1063.25" width="785" height="15.3" fill="#fff" stroke="#007960" stroke-width="2.5"/><rect x="641.1" y="1059.3" width="4" height="22.8" fill="#e9f1ef" stroke="#007960" stroke-width="2"/><rect x="1428" y="1059.3" width="4.3" height="22.8" fill="#e9f1ef" stroke="#007960" stroke-width="2"/></svg>
<div style="position:absolute;left:791.0px;top:1080px;width:1px;height:3.4px;background:#ccc;"></div>
<span class="t" style="left:777.6px;top:1085px;font-size:12.0px;line-height:14px;color:#a6a6a6;letter-spacing:-0.22px;">Oct 7</span>
<div style="position:absolute;left:971.3px;top:1080px;width:1px;height:3.4px;background:#ccc;"></div>
<span class="t" style="left:954.4px;top:1085px;font-size:12.0px;line-height:14px;color:#a6a6a6;letter-spacing:-0.09px;">Oct 14</span>
<div style="position:absolute;left:1151.7px;top:1080px;width:1px;height:3.4px;background:#ccc;"></div>
<span class="t" style="left:1135.0px;top:1085px;font-size:12.0px;line-height:14px;color:#a6a6a6;letter-spacing:-0.21px;">Oct 21</span>
<div style="position:absolute;left:1332.0px;top:1080px;width:1px;height:3.4px;background:#ccc;"></div>
<span class="t" style="left:1315.4px;top:1085px;font-size:12.0px;line-height:14px;color:#a6a6a6;letter-spacing:-0.25px;">Oct 28</span>
<div style="position:absolute;left:1512.3px;top:1080px;width:1px;height:3.4px;background:#ccc;"></div>
<span class="t" style="left:1497.8px;top:1085px;font-size:12.0px;line-height:14px;color:#a6a6a6;letter-spacing:-0.34px;">Nov 4</span>
<div style="position:absolute;left:1692.7px;top:1080px;width:1px;height:3.4px;background:#ccc;"></div>
<span class="t" style="left:1674.8px;top:1085px;font-size:12.0px;line-height:14px;color:#a6a6a6;letter-spacing:-0.07px;">Nov 11</span>
<div style="position:absolute;left:1873.0px;top:1080px;width:1px;height:3.4px;background:#ccc;"></div>
<span class="t" style="left:1855.1px;top:1085px;font-size:12.0px;line-height:14px;color:#a6a6a6;letter-spacing:-0.24px;">Nov 18</span>
<div style="position:absolute;left:2053.3px;top:1080px;width:1px;height:3.4px;background:#ccc;"></div>
<span class="t" style="left:2035.4px;top:1085px;font-size:12.0px;line-height:14px;color:#a6a6a6;letter-spacing:-0.22px;">Nov 25</span>
<div style="position:absolute;left:2233.6px;top:1080px;width:1px;height:3.4px;background:#ccc;"></div>
<span class="t" style="left:2219.9px;top:1085px;font-size:12.0px;line-height:14px;color:#a6a6a6;letter-spacing:-0.71px;">Dec 2</span>
<div style="position:absolute;left:2414.0px;top:1080px;width:1px;height:3.4px;background:#ccc;"></div>
<span class="t" style="left:2400.2px;top:1085px;font-size:12.0px;line-height:14px;color:#a6a6a6;letter-spacing:-0.71px;">Dec 9</span>
<div style="position:absolute;left:2524px;top:1062px;width:15.5px;height:19px;background:#007960;border-radius:1px;"></div>
<svg style="position:absolute;left:2524px;top:1062px" width="15.5" height="19" viewBox="0 0 15.5 19"><path d="M0.5 10 L2.5 3 L4.6 16 L6.8 4 L8.8 15 L11 3.5 L13 16 L15 9" fill="none" stroke="#fff" stroke-width="1.5"/></svg>
<svg style="position:absolute;left:624.2px;top:1107.6px;color:#007960;" width="12.4" height="18" viewBox="0 0 12.5 18" preserveAspectRatio="none" fill="currentColor"><path d="M4.6 18 H7.9 V7.5 L10.8 10.4 L12.5 8.6 L6.25 0 L0 8.6 L1.7 10.4 L4.6 7.5 Z"/></svg>
<span class="t" style="left:647.0px;top:1113px;font-size:13.8px;line-height:15px;color:#0a7a64;">10/1/2018</span>
<span class="t" style="left:1557.3px;top:1112px;font-size:14.0px;line-height:16px;color:#0a7a64;letter-spacing:0.02px;">2.4 months</span>
<span class="t" style="left:2468.9px;top:1113px;font-size:13.8px;line-height:15px;color:#0a7a64;letter-spacing:-0.03px;">12/12/2018</span>
<div style="position:absolute;left:614px;top:1132.4px;width:1944px;height:33px;background:#007960;"></div>
<svg style="position:absolute;left:626.2px;top:1141.8px;color:#fff;" width="18.6" height="14.5" viewBox="0 0 18.5 14.5" preserveAspectRatio="none" fill="currentColor"><path d="M0 0 H1.4 V13.1 H18.5 V14.5 H0 Z"/><path d="M2.6 12 V7.5 L6 3.2 L9.5 6.6 L13.6 2.6 L17.3 7.5 V12 Z"/></svg>
<span class="t" style="left:648.6px;top:1141px;font-size:14.8px;line-height:16px;color:#fff;letter-spacing:0.04px;-webkit-text-stroke:0.35px #fff;">Details</span>
<div style="position:absolute;left:2458.2px;top:1135.8px;width:94.8px;height:26.3px;background:#fff;border-radius:3px;"></div>
<svg style="position:absolute;left:2466px;top:1142px;color:#333;" width="16" height="14" viewBox="0 0 16 14" preserveAspectRatio="none" fill="currentColor"><path fill-rule="evenodd" d="M5.5 2.2 L6.6 2.4 L7.2 3.5 L8.5 3 L9.4 3.9 L8.9 5.2 L10 5.8 L10.2 7 V8 L10 8.6 L8.9 9.2 L9.4 10.5 L8.5 11.4 L7.2 10.9 L6.6 12 L5.5 12.2 H4.7 L3.6 12 L3 10.9 L1.7 11.4 L0.8 10.5 L1.3 9.2 L0.2 8.6 L0 7.4 V7 L0.2 5.8 L1.3 5.2 L0.8 3.9 L1.7 3 L3 3.5 L3.6 2.4 L4.7 2.2 Z M5.1 5.2 A2 2 0 1 0 5.1 9.2 A2 2 0 1 0 5.1 5.2 Z"/><path fill-rule="evenodd" d="M13.3 0 L14 0.1 L14.3 0.9 L15.2 0.7 L15.8 1.4 L15.4 2.2 L16 2.8 V3.8 L15.4 4.3 L15.8 5.1 L15.2 5.8 L14.3 5.6 L14 6.4 H12.6 L12.3 5.6 L11.4 5.8 L10.8 5.1 L11.2 4.3 L10.6 3.8 V2.8 L11.2 2.2 L10.8 1.4 L11.4 0.7 L12.3 0.9 L12.6 0.1 Z M13.3 2.2 A1 1 0 1 0 13.3 4.2 A1 1 0 1 0 13.3 2.2 Z"/><path fill-rule="evenodd" d="M13.3 7.6 L14 7.7 L14.3 8.5 L15.2 8.3 L15.8 9 L15.4 9.8 L16 10.4 V11.4 L15.4 11.9 L15.8 12.7 L15.2 13.4 L14.3 13.2 L14 14 H12.6 L12.3 13.2 L11.4 13.4 L10.8 12.7 L11.2 11.9 L10.6 11.4 V10.4 L11.2 9.8 L10.8 9 L11.4 8.3 L12.3 8.5 L12.6 7.7 Z M13.3 9.8 A1 1 0 1 0 13.3 11.8 A1 1 0 1 0 13.3 9.8 Z"/></svg>
<span class="t" style="left:2485.5px;top:1143px;font-size:13.8px;line-height:15px;color:#333;letter-spacing:-0.71px;">Customize</span>
<div style="position:absolute;left:614px;top:1165.4px;width:1944px;height:100px;background:#fff;"></div>
<div style="position:absolute;left:614px;top:1197.2px;width:1944px;height:2px;background:#ddd;"></div>
<div style="position:absolute;left:614px;top:1199.2px;width:1944px;height:27.6px;background:#f9f9f9;"></div>
<div style="position:absolute;left:614px;top:1226.8px;width:1944px;height:1px;background:#ddd;"></div>
<svg style="position:absolute;left:708px;top:1179.3px;color:#777;" width="10.6" height="10.3" viewBox="0 0 11 10.5" preserveAspectRatio="none" fill="currentColor"><path d="M2 0 L5.5 3.3 L9 0 L11 2 L7.6 5.25 L11 8.5 L9 10.5 L5.5 7.2 L2 10.5 L0 8.5 L3.4 5.25 L0 2 Z"/></svg>
<div style="position:absolute;left:732.4px;top:1177.2px;width:12.7px;height:12.4px;box-sizing:border-box;border:1.3px solid #767676;border-radius:3px;background:#fff;"></div>
<svg style="position:absolute;left:794px;top:1177.6px;color:#777;" width="9.2" height="13" viewBox="0 0 9 13" preserveAspectRatio="none" fill="currentColor"><path d="M4.5 0 L9 5.3 H0 Z M0 7.7 H9 L4.5 13 Z"/></svg>
<span class="t" style="left:812.0px;top:1175px;font-size:15.0px;line-height:17px;color:#222;letter-spacing:0.06px;-webkit-text-stroke:0.5px #222;">Name</span>
<svg style="position:absolute;left:862px;top:1177.6px;color:#777;" width="9.2" height="13" viewBox="0 0 9 13" preserveAspectRatio="none" fill="currentColor"><path d="M4.5 0 L9 5.3 H0 Z M0 7.7 H9 L4.5 13 Z"/></svg>
<span class="t" style="left:2403.0px;top:1176px;font-size:14.4px;line-height:16px;color:#222;letter-spacing:-0.04px;-webkit-text-stroke:0.5px #222;">Assets</span>
<svg style="position:absolute;left:2530px;top:1173px" width="18" height="16" viewBox="0 0 18 16"><rect x="0.6" y="0.6" width="12.8" height="11.8" fill="none" stroke="#333" stroke-width="1.1"/><path d="M0.6 4.5H13.4M0.6 8.5H13.4M4.8 0.6V12.4M9.2 0.6V12.4" stroke="#333" stroke-width="0.9" fill="none"/><circle cx="13" cy="11" r="4.8" fill="#222"/><path d="M10.4 11H15.6M13 8.4V13.6" stroke="#fff" stroke-width="1.5"/></svg>
<svg style="position:absolute;left:652.3px;top:1205.7px;color:#007960;" width="15" height="14.8" viewBox="0 0 15 15" preserveAspectRatio="none" fill="currentColor"><path d="M15 0 C15 5 13.5 8 10.3 10.3 L10 13 L7 15 L6.6 11.6 L3.4 8.4 L0 8 L2 5 L4.7 4.7 C7 1.5 10 0 15 0 Z M11.3 2.7 A1.1 1.1 0 1 0 11.3 4.9 A1.1 1.1 0 1 0 11.3 2.7Z" fill-rule="evenodd"/><path d="M2.5 10.5 L4.5 12.5 L0.8 14.2 Z"/></svg>
<svg style="position:absolute;left:682.8px;top:1206.0px;color:#007960;" width="13.9" height="14" viewBox="0 0 14 14" preserveAspectRatio="none" fill="currentColor"><path fill-rule="evenodd" d="M7 0 A7 7 0 1 0 7 14 A7 7 0 1 0 7 0 Z M5.8 2.2 H8.2 V4.4 H5.8 Z M5 5.8 H8.4 V10.2 H9.4 V11.8 H4.8 V10.2 H5.8 V7.4 H5 Z"/></svg>
<svg style="position:absolute;left:707.6px;top:1208.0px;color:#007960;" width="11" height="10.4" viewBox="0 0 11 10.5" preserveAspectRatio="none" fill="currentColor"><path d="M2 0 L5.5 3.3 L9 0 L11 2 L7.6 5.25 L11 8.5 L9 10.5 L5.5 7.2 L2 10.5 L0 8.5 L3.4 5.25 L0 2 Z"/></svg>
<div style="position:absolute;left:732.4px;top:1206.0px;width:12.8px;height:12.6px;box-sizing:border-box;border:1.3px solid #767676;border-radius:3px;background:#fff;"></div>
<svg style="position:absolute;left:652.3px;top:1233.9px;color:#007960;" width="15" height="14.8" viewBox="0 0 15 15" preserveAspectRatio="none" fill="currentColor"><path d="M15 0 C15 5 13.5 8 10.3 10.3 L10 13 L7 15 L6.6 11.6 L3.4 8.4 L0 8 L2 5 L4.7 4.7 C7 1.5 10 0 15 0 Z M11.3 2.7 A1.1 1.1 0 1 0 11.3 4.9 A1.1 1.1 0 1 0 11.3 2.7Z" fill-rule="evenodd"/><path d="M2.5 10.5 L4.5 12.5 L0.8 14.2 Z"/></svg>
<svg style="position:absolute;left:682.8px;top:1234.2px;color:#007960;" width="13.9" height="14" viewBox="0 0 14 14" preserveAspectRatio="none" fill="currentColor"><path fill-rule="evenodd" d="M7 0 A7 7 0 1 0 7 14 A7 7 0 1 0 7 0 Z M5.8 2.2 H8.2 V4.4 H5.8 Z M5 5.8 H8.4 V10.2 H9.4 V11.8 H4.8 V10.2 H5.8 V7.4 H5 Z"/></svg>
<svg style="position:absolute;left:707.6px;top:1236.2px;color:#007960;" width="11" height="10.4" viewBox="0 0 11 10.5" preserveAspectRatio="none" fill="currentColor"><path d="M2 0 L5.5 3.3 L9 0 L11 2 L7.6 5.25 L11 8.5 L9 10.5 L5.5 7.2 L2 10.5 L0 8.5 L3.4 5.25 L0 2 Z"/></svg>
<div style="position:absolute;left:732.4px;top:1234.2px;width:12.8px;height:12.6px;box-sizing:border-box;border:1.3px solid #767676;border-radius:3px;background:#fff;"></div>
<svg style="position:absolute;left:761.2px;top:1202.3px;color:#4055a3;" width="18.4" height="16.8" viewBox="0 0 16 15.5" preserveAspectRatio="none" fill="currentColor"><path d="M0.8 10.5 L4 1.2 L7.8 12 L9.6 7 L12.6 14.5 L15.2 9.5" fill="none" stroke="currentColor" stroke-width="1.7" stroke-linejoin="miter"/></svg>
<span class="t" style="left:788.0px;top:1206px;font-size:13.8px;line-height:15px;color:#444;letter-spacing:-1.05px;">°F</span>
<span class="t" style="left:812.5px;top:1204px;font-size:15.4px;line-height:17px;color:#222;letter-spacing:0.26px;-webkit-text-stroke:0.25px #222;">Temperature</span>
<span class="t" style="left:2403.0px;top:1206px;font-size:13.8px;line-height:15px;color:#0a7a64;letter-spacing:0.01px;text-decoration:underline;text-decoration-color:#6fb3a5;text-decoration-thickness:1.6px;text-underline-offset:2px;">Area A</span>
<svg style="position:absolute;left:619px;top:1233.5px;color:#2a8d78;" width="16" height="13.2" viewBox="0 0 16 13" preserveAspectRatio="none" fill="currentColor"><path d="M2.5 1.3 H10.5 L9.2 2.6 H2.8 C1.9 2.6 1.3 3.2 1.3 4 V10 C1.3 10.9 1.9 11.5 2.8 11.5 H9.7 C10.6 11.5 11.2 10.9 11.2 10 V7.5 L12.5 6.2 V10.2 C12.5 11.8 11.4 12.8 9.9 12.8 H2.6 C1.1 12.8 0 11.8 0 10.2 V3.9 C0 2.4 1.1 1.3 2.5 1.3 Z"/><path d="M12.8 0 L15.8 3 L8.8 10 L5.4 10.6 L6 7 Z M7 7.5 L6.7 9.3 L8.4 9 Z" fill-rule="evenodd"/></svg>
<svg style="position:absolute;left:761.2px;top:1229.5px;color:#0a8a45;" width="18.4" height="18.1" viewBox="0 0 18 17" preserveAspectRatio="none" fill="currentColor"><path d="M0 0 H1.6 V15.4 H18 V17 H0 Z"/><rect x="3.4" y="9.5" width="3" height="5"/><rect x="8" y="2.5" width="3" height="12"/><rect x="12.6" y="6.5" width="3" height="8"/></svg>
<span class="t" style="left:812.5px;top:1233px;font-size:14.6px;line-height:16px;color:#222;letter-spacing:-0.03px;-webkit-text-stroke:0.25px #222;">Temp FFT</span>
<span class="t" style="left:2403.0px;top:1234px;font-size:13.8px;line-height:15px;color:#0a7a64;letter-spacing:0.01px;text-decoration:underline;text-decoration-color:#6fb3a5;text-decoration-thickness:1.6px;text-underline-offset:2px;">Area A</span></div>
<div id="tools"><div style="position:absolute;left:163px;top:54px;width:13px;height:1211px;background:#e2e2e2;border-right:1px solid #959595;box-sizing:border-box;border-left:1px solid #d0d0d0;"></div>
<div style="position:absolute;left:176px;top:54px;width:424px;height:1211px;background:#f6f6f6;"></div>
<div style="position:absolute;left:600px;top:54px;width:14px;height:1211px;background:#e2e2e2;border-left:1.5px solid #959595;border-right:1.5px solid #959595;box-sizing:border-box;"></div>
<span class="t" style="left:165.2px;top:649px;font-size:20px;line-height:22px;color:#555;">«</span>
<span class="t" style="left:602.8px;top:649px;font-size:20px;line-height:22px;color:#555;">«</span>
<div style="position:absolute;left:176px;top:55px;width:133px;height:43.5px;background:#e7e7e7;border-radius:4px 4px 0 0;border-right:1px solid #d8d8d8;box-sizing:border-box;"></div>
<div style="position:absolute;left:445px;top:55px;width:154.5px;height:43.5px;background:#e7e7e7;border-radius:4px 4px 0 0;border-left:1px solid #d8d8d8;box-sizing:border-box;"></div>
<svg style="position:absolute;left:192.3px;top:68.3px;color:#007960;" width="14.2" height="16.5" viewBox="0 0 14 16.5" preserveAspectRatio="none" fill="currentColor"><ellipse cx="7" cy="2.6" rx="7" ry="2.6"/><path d="M0 4.4 C1.5 6.2 12.5 6.2 14 4.4 V7 C12.5 9 1.5 9 0 7 Z"/><path d="M0 8.6 C1.5 10.4 12.5 10.4 14 8.6 V11.2 C12.5 13.2 1.5 13.2 0 11.2 Z"/><path d="M0 12.8 C1.5 14.6 12.5 14.6 14 12.8 V14.4 C12.5 17.2 1.5 17.2 0 14.4 Z"/></svg>
<span class="t" style="left:227.5px;top:69px;font-size:15.6px;line-height:17px;color:#1a1a1a;letter-spacing:-0.82px;">Data</span>
<svg style="position:absolute;left:324.4px;top:68.3px;color:#007960;" width="17" height="16.8" viewBox="0 0 17 16.5" preserveAspectRatio="none" fill="currentColor"><path d="M12.2 0 C9.3 0 7.3 2.4 7.6 5 C7.7 5.7 7.9 6.3 8.2 6.8 L0.6 13.6 C-0.2 14.4 -0.2 15.4 0.5 16 C1.2 16.7 2.2 16.6 2.9 15.9 L9.8 8.4 C12.7 9.8 16.6 8 16.9 4.2 L13.6 6.3 L11 4.7 L10.9 1.9 L14.2 0.4 C13.6 0.1 12.9 0 12.2 0 Z M1.8 14 A0.8 0.8 0 1 1 1.8 15.6 A0.8 0.8 0 1 1 1.8 14Z" fill-rule="evenodd"/></svg>
<span class="t" style="left:359.8px;top:69px;font-size:15.6px;line-height:17px;color:#1a1a1a;letter-spacing:-0.23px;">Tools</span>
<svg style="position:absolute;left:461.3px;top:68.3px;color:#007960;" width="18.6" height="16.5" viewBox="0 0 19 16.5" preserveAspectRatio="none" fill="currentColor"><path fill-rule="evenodd" d="M5.8 0 H18 C18.8 0 19.2 0.6 19 1.4 L15.8 13 C15.5 14 14.8 14.5 14 14.5 H2.5 C2 14.8 2 15.3 2.6 15.5 H14.4 C15 15.5 15.5 15.1 15.7 14.5 L16.6 14.5 C16.3 15.8 15.6 16.5 14.5 16.5 H2.3 C0.6 16.5 -0.3 15 0.2 13.5 L3.8 1.3 C4.1 0.5 4.8 0 5.8 0 Z M7.2 3.2 L6.9 4.4 H15.2 L15.5 3.2 Z M6.5 5.7 L6.2 6.9 H14.5 L14.8 5.7 Z"/></svg>
<span class="t" style="left:496.4px;top:69px;font-size:15.8px;line-height:17px;color:#1a1a1a;letter-spacing:-0.04px;">Journal</span>
<svg style="position:absolute;left:194px;top:124.6px;color:#777;" width="15" height="15.5" viewBox="0 0 15 15.5" preserveAspectRatio="none" fill="currentColor"><path fill-rule="evenodd" d="M6.2 0 A6.2 6.2 0 1 0 9.9 11.2 L13.3 15 C14.3 15.9 15.6 14.6 14.6 13.6 L11.2 10 A6.2 6.2 0 0 0 6.2 0 Z M6.2 2 A4.2 4.2 0 1 1 6.2 10.4 A4.2 4.2 0 1 1 6.2 2 Z"/></svg>
<span class="t" style="left:219.2px;top:125px;font-size:15.6px;line-height:17px;color:#a9a9a9;letter-spacing:-0.10px;">Filter tools...</span>
<div style="position:absolute;left:191px;top:151.4px;width:394px;height:1px;background:#e1e1e1;"></div>
<svg style="position:absolute;left:188px;top:169.5px;color:#007960;" width="19.6" height="16" viewBox="0 0 20 16" preserveAspectRatio="none" fill="currentColor"><path d="M10 0 L13.5 3 V1.2 H16 V5.2 L20 8.6 L19 9.8 L10 2.4 L1 9.8 L0 8.6 Z"/><path d="M10 4 L17 9.8 V16 H12 V11.3 H8 V16 H3 V9.8 Z"/></svg>
<span class="t" style="left:211.6px;top:169px;font-size:15.6px;line-height:17px;color:#0a7a64;letter-spacing:-0.38px;">Overview</span>
<span class="t" style="left:277.6px;top:170px;font-size:14px;line-height:16px;color:#777;">»</span>
<span class="t" style="left:288.4px;top:169px;font-size:15.6px;line-height:17px;color:#555;letter-spacing:-0.40px;">Frequency Analysis</span>
<div style="position:absolute;left:188px;top:203.6px;width:401px;height:678.4px;box-sizing:border-box;background:#fff;border:1px solid #b5d8d0;border-radius:5px;box-shadow:0 1px 2px rgba(0,121,96,.18);"></div>
<svg style="position:absolute;left:208px;top:226.3px;color:#007960;" width="26.3" height="26.2" viewBox="0 0 26 26" preserveAspectRatio="none" fill="currentColor"><path d="M0.5 13.5 C5 13 6.5 1.2 13 1.2 C19.5 1.2 21 13 25.5 13.5" fill="none" stroke="currentColor" stroke-width="2.4"/><rect x="1" y="18" width="2.6" height="7.5"/><rect x="6.3" y="13" width="2.6" height="12.5"/><rect x="11.7" y="8" width="2.6" height="17.5"/><rect x="17.1" y="13" width="2.6" height="12.5"/><rect x="22.4" y="18" width="2.6" height="7.5"/></svg>
<div style="position:absolute;left:240.2px;top:224.4px;width:280.7px;height:37.8px;box-sizing:border-box;border:1px solid #c6e0da;border-right:none;border-radius:4px 0 0 4px;background:#fff;"></div>
<div style="position:absolute;left:520.4px;top:224.4px;width:47.8px;height:37.8px;background:#eee;border-radius:0 4px 4px 0;border-left:1px solid #d6e6e2;box-sizing:border-box;"></div>
<div style="position:absolute;left:536px;top:233.5px;width:19px;height:18.6px;background:#068c45;border:1px solid #2d4a3a;box-sizing:border-box;"></div>
<div style="position:absolute;left:248px;top:230.4px;width:81px;height:25px;background:#3390ff;"></div>
<span class="t" style="left:249.5px;top:235px;font-size:17.6px;line-height:20px;color:#fff;letter-spacing:-0.24px;">Temp FFT</span>
<svg style="position:absolute;left:298px;top:252.5px" width="31" height="3" viewBox="0 0 31 3"><path d="M0 2 L1.5 0.6 L3 2 L4.5 0.6 L6 2 L7.5 0.6 L9 2 L10.5 0.6 L12 2 L13.5 0.6 L15 2 L16.5 0.6 L18 2 L19.5 0.6 L21 2 L22.5 0.6 L24 2 L25.5 0.6 L27 2 L28.5 0.6 L30 2" fill="none" stroke="#e03030" stroke-width="1"/></svg>
<svg style="position:absolute;left:209px;top:286px;color:#007960;" width="17" height="13.6" viewBox="0 0 17 13" preserveAspectRatio="none" fill="currentColor"><path d="M0.3 7.2 L2.8 4.7 L6.3 8.2 L14.3 0.2 L16.8 2.7 L6.3 13.2 Z"/></svg>
<span class="t" style="left:245.5px;top:286px;font-size:15.6px;line-height:17px;color:#444;letter-spacing:-0.32px;">Select signal to analyze</span>
<div style="position:absolute;left:249.3px;top:309.8px;width:315.4px;height:39.8px;box-sizing:border-box;border:1px solid #ccc;border-radius:5px;background:#fff;box-shadow:0 1px 1px rgba(0,0,0,.08);"></div>
<svg style="position:absolute;left:265px;top:321.4px;color:#4055a3;" width="16" height="15.6" viewBox="0 0 16 15.5" preserveAspectRatio="none" fill="currentColor"><path d="M0.8 10.5 L4 1.2 L7.8 12 L9.6 7 L12.6 14.5 L15.2 9.5" fill="none" stroke="currentColor" stroke-width="1.7" stroke-linejoin="miter"/></svg>
<span class="t" style="left:288.0px;top:315px;font-size:15.6px;line-height:17px;color:#222;font-weight:700;letter-spacing:-0.15px;">Temperature</span>
<span class="t" style="left:384.5px;top:317px;font-size:13.8px;line-height:15px;color:#555;font-style:italic;letter-spacing:-1.20px;">(°F)</span>
<span class="t" style="left:288.0px;top:336px;font-size:10.4px;line-height:11px;color:#444;font-style:italic;letter-spacing:0.05px;">Example » Cooling Tower 1 » Area A</span>
<svg style="position:absolute;left:541px;top:326px;color:#333;" width="9.8" height="5.5" viewBox="0 0 10 5.5" preserveAspectRatio="none" fill="currentColor"><path d="M0 0 H10 L5 5.5 Z"/></svg>
<svg style="position:absolute;left:209px;top:375.2px;color:#007960;" width="17" height="13.6" viewBox="0 0 17 13" preserveAspectRatio="none" fill="currentColor"><path d="M0.3 7.2 L2.8 4.7 L6.3 8.2 L14.3 0.2 L16.8 2.7 L6.3 13.2 Z"/></svg>
<div style="position:absolute;left:268.7px;top:380px;width:13.8px;height:13.8px;background:#222;border-radius:50%;"></div>
<svg style="position:absolute;left:268.7px;top:380px" width="13.8" height="13.8" viewBox="0 0 13.8 13.8"><path d="M3.3 7 L5.9 9.6 L10.5 4.6" fill="none" stroke="#fff" stroke-width="2"/></svg>
<span class="t" style="left:290.6px;top:379px;font-size:15.6px;line-height:17px;color:#444;letter-spacing:-0.50px;">Period</span>
<div style="position:absolute;left:352.2px;top:380px;width:14.2px;height:14.2px;box-sizing:border-box;border:1.4px solid #555;border-radius:50%;background:#fff;"></div>
<span class="t" style="left:374.7px;top:379px;font-size:15.6px;line-height:17px;color:#444;letter-spacing:-0.49px;">Frequency</span>
<svg style="position:absolute;left:209px;top:431px;color:#007960;" width="17" height="13.6" viewBox="0 0 17 13" preserveAspectRatio="none" fill="currentColor"><path d="M0.3 7.2 L2.8 4.7 L6.3 8.2 L14.3 0.2 L16.8 2.7 L6.3 13.2 Z"/></svg>
<span class="t" style="left:252.0px;top:436px;font-size:15.6px;line-height:17px;color:#444;letter-spacing:-0.31px;">Select a sampling rate</span>
<div style="position:absolute;left:245.5px;top:456.8px;width:161.2px;height:37.4px;box-sizing:border-box;border:1px solid #ccc;border-radius:4px;background:#fff;box-shadow:0 1px 1px rgba(0,0,0,.06);"></div><div style="position:absolute;left:308.3px;top:456.8px;width:1px;height:37.4px;background:#ccc;"></div>
<span class="t" style="left:275.4px;top:467px;font-size:15.4px;line-height:17px;color:#444;">2</span>
<span class="t" style="left:322.2px;top:468px;font-size:14.0px;line-height:16px;color:#444;letter-spacing:0.03px;">minute(s)</span>
<svg style="position:absolute;left:384.8px;top:473px;color:#333;" width="9" height="5" viewBox="0 0 10 5.5" preserveAspectRatio="none" fill="currentColor"><path d="M0 0 H10 L5 5.5 Z"/></svg>
<svg style="position:absolute;left:209px;top:517px;color:#007960;" width="17" height="13.6" viewBox="0 0 17 13" preserveAspectRatio="none" fill="currentColor"><path d="M0.3 7.2 L2.8 4.7 L6.3 8.2 L14.3 0.2 L16.8 2.7 L6.3 13.2 Z"/></svg>
<span class="t" style="left:245.7px;top:517px;font-size:15.8px;line-height:17px;color:#444;letter-spacing:-0.04px;">Output units</span>
<div style="position:absolute;left:245.5px;top:542.8px;width:86.3px;height:40.5px;box-sizing:border-box;border:1px solid #ccc;border-radius:5px;background:#fff;box-shadow:0 1px 1px rgba(0,0,0,.08);"></div>
<span class="t" style="left:261.8px;top:556px;font-size:14.4px;line-height:16px;color:#444;letter-spacing:-0.04px;">day(s)</span>
<svg style="position:absolute;left:306.2px;top:561px;color:#333;" width="9" height="5" viewBox="0 0 10 5.5" preserveAspectRatio="none" fill="currentColor"><path d="M0 0 H10 L5 5.5 Z"/></svg>
<svg style="position:absolute;left:209px;top:605.2px;color:#007960;" width="17" height="13.6" viewBox="0 0 17 13" preserveAspectRatio="none" fill="currentColor"><path d="M0.3 7.2 L2.8 4.7 L6.3 8.2 L14.3 0.2 L16.8 2.7 L6.3 13.2 Z"/></svg>
<div style="position:absolute;left:249.8px;top:609.8px;width:13.6px;height:13.9px;background:#222;border-radius:2.5px;"></div><svg style="position:absolute;left:249.8px;top:609.8px" width="13.6" height="13.9" viewBox="0 0 13.6 13.9"><path d="M2.6 6.9 L5.6 9.9 L11.2 3.6" fill="none" stroke="#fff" stroke-width="2.1"/></svg>
<span class="t" style="left:275.0px;top:608px;font-size:15.6px;line-height:17px;color:#444;letter-spacing:-0.19px;">Remove periods below (right of)</span>
<div style="position:absolute;left:245.5px;top:633.2px;width:321.5px;height:36.2px;box-sizing:border-box;border:1px solid #ccc;border-radius:4px;background:#fff;box-shadow:0 1px 1px rgba(0,0,0,.06);"></div><div style="position:absolute;left:490.4px;top:633.2px;width:1px;height:36.2px;background:#ccc;"></div>
<span class="t" style="left:446.5px;top:645px;font-size:13.8px;line-height:15px;color:#444;letter-spacing:-0.74px;">0.1</span>
<span class="t" style="left:504.0px;top:645px;font-size:13.8px;line-height:15px;color:#444;letter-spacing:-0.27px;">day(s)</span>
<svg style="position:absolute;left:545.2px;top:649.3px;color:#333;" width="9" height="5" viewBox="0 0 10 5.5" preserveAspectRatio="none" fill="currentColor"><path d="M0 0 H10 L5 5.5 Z"/></svg>
<svg style="position:absolute;left:209px;top:693px;color:#007960;" width="17" height="13.6" viewBox="0 0 17 13" preserveAspectRatio="none" fill="currentColor"><path d="M0.3 7.2 L2.8 4.7 L6.3 8.2 L14.3 0.2 L16.8 2.7 L6.3 13.2 Z"/></svg>
<div style="position:absolute;left:249.8px;top:697px;width:13.6px;height:13.9px;background:#222;border-radius:2.5px;"></div><svg style="position:absolute;left:249.8px;top:697px" width="13.6" height="13.9" viewBox="0 0 13.6 13.9"><path d="M2.6 6.9 L5.6 9.9 L11.2 3.6" fill="none" stroke="#fff" stroke-width="2.1"/></svg>
<span class="t" style="left:275.0px;top:696px;font-size:15.6px;line-height:17px;color:#444;letter-spacing:-0.30px;">Remove periods above (left of)</span>
<div style="position:absolute;left:245.5px;top:720.3px;width:321.5px;height:36.5px;box-sizing:border-box;border:1px solid #ccc;border-radius:4px;background:#fff;box-shadow:0 1px 1px rgba(0,0,0,.06);"></div><div style="position:absolute;left:490.4px;top:720.3px;width:1px;height:36.5px;background:#ccc;"></div>
<span class="t" style="left:457.3px;top:730px;font-size:15.4px;line-height:17px;color:#444;">2</span>
<span class="t" style="left:504.0px;top:732px;font-size:13.8px;line-height:15px;color:#444;letter-spacing:-0.27px;">day(s)</span>
<svg style="position:absolute;left:545.2px;top:736.4px;color:#333;" width="9" height="5" viewBox="0 0 10 5.5" preserveAspectRatio="none" fill="currentColor"><path d="M0 0 H10 L5 5.5 Z"/></svg>
<svg style="position:absolute;left:209px;top:780.2px;color:#007960;" width="17" height="13.6" viewBox="0 0 17 13" preserveAspectRatio="none" fill="currentColor"><path d="M0.3 7.2 L2.8 4.7 L6.3 8.2 L14.3 0.2 L16.8 2.7 L6.3 13.2 Z"/></svg>
<div style="position:absolute;left:250.2px;top:784.5px;width:12.8px;height:13.5px;box-sizing:border-box;border:1.3px solid #767676;border-radius:3px;background:#fff;"></div>
<span class="t" style="left:274.6px;top:784px;font-size:15.6px;line-height:17px;color:#444;letter-spacing:-0.18px;">Available outside this analysis</span>
<div style="position:absolute;left:249.3px;top:831.7px;width:124.6px;height:36.8px;box-sizing:border-box;border:1px solid #ccc;border-radius:4px;background:#fff;box-shadow:0 1px 1px rgba(0,0,0,.08);"></div>
<span class="t" style="left:291.0px;top:844px;font-size:13.8px;line-height:15px;color:#444;letter-spacing:-0.31px;">Cancel</span>
<div style="position:absolute;left:402px;top:831.7px;width:125px;height:36.8px;background:#007960;border-radius:4px;"></div>
<span class="t" style="left:440.5px;top:844px;font-size:13.8px;line-height:15px;color:#fff;letter-spacing:-0.23px;-webkit-text-stroke:0.35px #fff;">Execute</span>
<div style="position:absolute;left:188px;top:1183.3px;width:400.6px;height:80.5px;box-sizing:border-box;background:#fff;border:1px solid #b5d8d0;border-radius:6px;box-shadow:0 1px 2px rgba(0,121,96,.18);"></div>
<span class="t" style="left:195.8px;top:1188px;font-size:17.0px;line-height:19px;color:#0a7a64;letter-spacing:-0.04px;">Derived Data</span>
<span class="t" style="left:195.2px;top:1209px;font-size:11.2px;line-height:12px;color:#999;letter-spacing:0.04px;">View data created by tools in a dependency tree</span>
<div style="position:absolute;left:189.5px;top:1227.3px;width:398px;height:1.3px;background:#ddd;"></div>
<svg style="position:absolute;left:201.3px;top:1236.8px;color:#0a8a45;" width="17.7" height="17.3" viewBox="0 0 18 17" preserveAspectRatio="none" fill="currentColor"><path d="M0 0 H1.6 V15.4 H18 V17 H0 Z"/><rect x="3.4" y="9.5" width="3" height="5"/><rect x="8" y="2.5" width="3" height="12"/><rect x="12.6" y="6.5" width="3" height="8"/></svg>
<span class="t" style="left:224.3px;top:1238px;font-size:14.4px;line-height:16px;color:#0a7a64;letter-spacing:0.01px;text-decoration:underline;text-decoration-color:#6fb3a5;text-decoration-thickness:1.6px;text-underline-offset:2px;">Temp FFT</span>
<svg style="position:absolute;left:562.3px;top:1199.5px;color:#007960;" width="14.2" height="9.2" viewBox="0 0 15 9.5" preserveAspectRatio="none" fill="currentColor"><path d="M1.9 0 L7.5 5.6 L13.1 0 L15 1.9 L7.5 9.5 L0 1.9 Z"/></svg></div>
<div id="worksheets"><div style="position:absolute;left:0px;top:54px;width:163px;height:1211px;background:#007960;"></div>
<div style="position:absolute;left:0px;top:101px;width:163px;height:1px;background:#0a7561;"></div>
<svg style="position:absolute;left:31px;top:69px;color:#fff;" width="18" height="18" viewBox="0 0 18 18" preserveAspectRatio="none" fill="currentColor"><path d="M6.8 0h4.4v6.8H18v4.4h-6.8V18H6.8v-6.8H0V6.8h6.8z"/></svg>
<div style="position:absolute;left:6px;top:103.5px;width:13px;height:100px;background:#fbb225;"></div>
<svg style="position:absolute;left:23px;top:103.5px;overflow:hidden" width="125" height="100" viewBox="0 0 125 100" font-family="Liberation Sans,sans-serif"><rect width="125" height="100" fill="#fff"/><g opacity="0.16"><rect x="8" y="49.4" width="110" height="37.8" fill="#eee"/><path d="M5.00 38.2v-10.5M5.25 38.2v-1.6M5.51 38.2v-7.9M5.76 38.2v-11.0M6.02 38.2v-2.8M6.27 38.2v-11.3M6.52 38.2v-10.4M6.78 38.2v-1.6M7.03 38.2v-7.8M7.29 38.2v-8.8M7.54 38.2v-1.6M7.79 38.2v-10.3M8.05 38.2v-7.0M8.30 38.2v-1.6M8.56 38.2v-4.5M8.81 38.2v-8.8M9.06 38.2v-2.2M9.32 38.2v-10.4M9.57 38.2v-7.8M9.83 38.2v-2.6M10.08 38.2v-11.8M10.33 38.2v-9.4M10.59 38.2v-33.8M10.84 38.2v-29.9M11.10 38.2v-7.9M11.35 38.2v-9.5M11.60 38.2v-3.1M11.86 38.2v-7.2M12.11 38.2v-2.6M12.37 38.2v-2.9M12.62 38.2v-5.4M12.87 38.2v-2.3M13.13 38.2v-2.8M13.38 38.2v-5.3M13.64 38.2v-2.1M13.89 38.2v-1.9M14.14 38.2v-4.4M14.40 38.2v-3.5M14.65 38.2v-2.3M14.91 38.2v-4.9M15.16 38.2v-2.3M15.41 38.2v-1.9M15.67 38.2v-4.9M15.92 38.2v-2.6M16.18 38.2v-2.5M16.43 38.2v-4.7M16.68 38.2v-2.8M16.94 38.2v-2.8M17.19 38.2v-4.9M17.45 38.2v-2.1M17.70 38.2v-2.9M17.95 38.2v-4.0M18.21 38.2v-2.0M18.46 38.2v-1.6M18.72 38.2v-4.1M18.97 38.2v-1.8M19.22 38.2v-1.8M19.48 38.2v-3.9M19.73 38.2v-2.3M19.99 38.2v-2.0M20.24 38.2v-4.3M20.49 38.2v-1.5M20.75 38.2v-1.6M21.00 38.2v-3.6M21.26 38.2v-1.8M21.51 38.2v-2.5M21.76 38.2v-2.8M22.02 38.2v-4.5M22.27 38.2v-8.8M22.53 38.2v-5.9M22.78 38.2v-2.1M23.03 38.2v-1.4M23.29 38.2v-3.4M23.54 38.2v-1.4M23.80 38.2v-0.9M24.05 38.2v-2.9M24.30 38.2v-2.6M24.56 38.2v-1.2M24.81 38.2v-3.5M25.07 38.2v-2.2M25.32 38.2v-1.6M25.57 38.2v-3.5M25.83 38.2v-1.5M26.08 38.2v-1.6M26.34 38.2v-2.7M26.59 38.2v-1.1M26.84 38.2v-1.2M27.10 38.2v-2.6M27.35 38.2v-1.6M27.61 38.2v-1.4M27.86 38.2v-2.0M28.11 38.2v-1.6M28.37 38.2v-0.5M28.62 38.2v-2.6M28.88 38.2v-1.6M29.13 38.2v-1.1M29.38 38.2v-3.1M29.64 38.2v-1.3M29.89 38.2v-0.9M30.15 38.2v-1.8M30.40 38.2v-1.8M30.65 38.2v-0.3M30.91 38.2v-2.7M31.16 38.2v-1.8M31.42 38.2v-0.5M31.67 38.2v-2.2M31.92 38.2v-2.4M32.18 38.2v-1.4M32.43 38.2v-3.1M32.69 38.2v-1.1M32.94 38.2v-1.1M33.19 38.2v-1.5M33.45 38.2v-2.1M33.70 38.2v-1.8M33.96 38.2v-4.5M34.21 38.2v-1.3M34.46 38.2v-1.6M34.72 38.2v-1.8M34.97 38.2v-1.9M35.23 38.2v-1.0M35.48 38.2v-2.6M35.73 38.2v-0.4M35.99 38.2v-0.3M36.24 38.2v-1.5M36.50 38.2v-1.6M36.75 38.2v-0.5M37.00 38.2v-1.8M37.26 38.2v-1.9M37.51 38.2v-0.4M37.77 38.2v-2.6M38.02 38.2v-1.8M38.53 38.2v-1.6M39.04 38.2v-0.3M39.54 38.2v-1.6M40.05 38.2v-1.4M40.56 38.2v-0.6M41.07 38.2v-1.8M41.58 38.2v-1.9M42.59 38.2v-2.0M43.10 38.2v-1.1M43.61 38.2v-0.3M44.12 38.2v-0.9M44.62 38.2v-1.1M45.13 38.2v-0.6M45.64 38.2v-2.7M46.15 38.2v-1.9M47.16 38.2v-1.0M47.67 38.2v-1.1M48.69 38.2v-1.1M49.20 38.2v-1.5M50.21 38.2v-1.3M50.72 38.2v-1.3M51.23 38.2v-0.3M51.74 38.2v-1.1M52.24 38.2v-1.3M53.26 38.2v-1.1M53.77 38.2v-0.9M54.28 38.2v-0.8M54.78 38.2v-1.6M55.29 38.2v-1.6M55.80 38.2v-0.4M56.31 38.2v-1.4M56.82 38.2v-0.9M57.32 38.2v-0.5M57.83 38.2v-1.5M58.34 38.2v-0.5M58.85 38.2v-0.8M59.36 38.2v-1.1M59.86 38.2v-0.9M60.37 38.2v-0.4M60.88 38.2v-1.1M61.39 38.2v-0.4M61.90 38.2v-0.4M62.40 38.2v-1.1M62.91 38.2v-0.5M63.42 38.2v-0.4M63.93 38.2v-1.3M64.44 38.2v-0.9M64.94 38.2v-0.3M65.45 38.2v-0.8M65.96 38.2v-0.8M66.47 38.2v-0.5M66.98 38.2v-0.8M67.48 38.2v-0.4M67.99 38.2v-0.6M68.50 38.2v-1.1M69.01 38.2v-0.5M69.52 38.2v-0.8M70.02 38.2v-0.9M70.53 38.2v-0.6M71.04 38.2v-0.6M71.55 38.2v-1.1M72.06 38.2v-0.6M73.07 38.2v-0.8M73.58 38.2v-0.3M74.09 38.2v-0.5M74.60 38.2v-1.1M75.61 38.2v-0.6M76.12 38.2v-0.8M76.63 38.2v-0.3M77.14 38.2v-0.6M77.64 38.2v-1.1M78.15 38.2v-0.5M78.66 38.2v-0.6M79.17 38.2v-0.8M80.18 38.2v-0.8M80.69 38.2v-0.8M81.20 38.2v-0.3M81.71 38.2v-0.4M82.22 38.2v-0.5M82.72 38.2v-0.4M83.23 38.2v-0.8M83.74 38.2v-0.4M84.76 38.2v-0.6M85.26 38.2v-0.8M85.77 38.2v-0.3M86.28 38.2v-0.8M86.79 38.2v-1.1M87.30 38.2v-0.3M87.80 38.2v-0.4M88.31 38.2v-0.5M88.82 38.2v-0.3M89.33 38.2v-0.6M89.84 38.2v-0.9M90.34 38.2v-0.3M90.85 38.2v-0.6M91.36 38.2v-0.6M91.87 38.2v-0.3M92.38 38.2v-0.8M92.88 38.2v-0.5M93.39 38.2v-0.4M93.90 38.2v-0.6M94.41 38.2v-0.4M94.92 38.2v-0.3M95.42 38.2v-0.4M95.93 38.2v-0.5M96.95 38.2v-0.6M97.46 38.2v-0.3M97.96 38.2v-0.3M98.47 38.2v-0.6M98.98 38.2v-0.6M99.49 38.2v-0.4M100.00 38.2v-0.6M100.50 38.2v-0.5M101.52 38.2v-0.6M102.03 38.2v-0.3M102.54 38.2v-0.3M103.04 38.2v-0.8M103.55 38.2v-0.6M104.06 38.2v-0.3M104.57 38.2v-0.5M105.08 38.2v-0.5M106.09 38.2v-0.5M106.60 38.2v-0.5M107.11 38.2v-0.3M107.62 38.2v-0.8M108.12 38.2v-0.6M108.63 38.2v-0.3M109.14 38.2v-0.5M109.65 38.2v-0.4M110.66 38.2v-0.6M111.17 38.2v-0.3M111.68 38.2v-0.4M112.19 38.2v-0.5M112.70 38.2v-0.3M113.20 38.2v-0.3M113.71 38.2v-0.6M114.22 38.2v-0.3M114.73 38.2v-0.5" stroke="#068c45" stroke-width="0.3" fill="none"/><path d="M4.0 46.2l4.6 -5.4M7.0 46.2l4.6 -5.4M10.1 46.2l4.6 -5.4M13.1 46.2l4.6 -5.4M16.2 46.2l4.6 -5.4M19.2 46.2l4.6 -5.4M22.3 46.2l4.6 -5.4M25.3 46.2l4.6 -5.4M28.4 46.2l4.6 -5.4M31.4 46.2l4.6 -5.4M34.5 46.2l4.6 -5.4M37.5 46.2l4.6 -5.4M40.6 46.2l4.6 -5.4M43.6 46.2l4.6 -5.4M46.7 46.2l4.6 -5.4M49.8 46.2l4.6 -5.4M52.8 46.2l4.6 -5.4M55.8 46.2l4.6 -5.4M58.9 46.2l4.6 -5.4M61.9 46.2l4.6 -5.4M65.0 46.2l4.6 -5.4M68.0 46.2l4.6 -5.4M71.1 46.2l4.6 -5.4M74.1 46.2l4.6 -5.4M77.2 46.2l4.6 -5.4M80.2 46.2l4.6 -5.4M83.3 46.2l4.6 -5.4M86.3 46.2l4.6 -5.4M89.4 46.2l4.6 -5.4M92.4 46.2l4.6 -5.4M95.5 46.2l4.6 -5.4M98.5 46.2l4.6 -5.4M101.6 46.2l4.6 -5.4M104.6 46.2l4.6 -5.4M107.7 46.2l4.6 -5.4M110.8 46.2l4.6 -5.4" stroke="#888" stroke-width="0.7" fill="none" opacity="0.5" stroke-dasharray="1.6 0.7"/><polyline points="8.0,69.8 8.6,72.7 9.1,71.3 9.3,69.9 9.8,60.7 10.1,57.5 10.4,55.7 10.5,55.6 10.7,58.9 11.1,63.7 11.6,67.4 12.2,71.1 12.7,73.9 12.9,69.8 13.2,65.3 13.4,59.7 13.6,67.1 13.8,69.9 14.0,69.4 14.4,74.5 14.9,78.4 15.1,84.0 15.5,84.0 15.8,83.2 16.1,85.8 16.4,81.7 16.6,82.8 17.0,79.1 17.3,77.0 17.5,79.6 17.8,74.1 18.1,76.6 18.5,80.6 19.1,79.7 19.6,80.8 20.0,77.0 20.2,71.8 20.5,69.5 20.7,63.5 21.0,62.8 21.3,62.5 21.5,62.5 21.8,68.5 22.3,74.0 22.9,76.1 23.4,76.5 23.8,73.4 24.0,63.9 24.3,60.3 24.6,59.3 24.8,58.6 25.1,59.1 25.4,61.4 25.8,66.9 26.3,69.5 26.8,72.7 27.2,74.1 27.5,67.8 27.8,59.6 28.0,54.1 28.3,50.6 28.5,56.8 28.8,55.9 29.2,63.5 29.5,66.5 29.9,70.9 30.5,75.0 30.9,73.1 31.2,65.3 31.5,58.9 31.8,59.3 32.0,56.3 32.3,53.4 32.6,57.9 32.9,66.0 33.3,69.2 33.7,73.4 34.2,74.5 34.5,72.7 34.8,67.1 35.1,62.8 35.3,60.3 35.6,60.3 35.9,63.2 36.2,69.2 36.7,72.7 37.2,75.7 37.6,78.4 38.0,77.0 38.3,68.5 38.5,62.8 38.8,58.6 39.1,57.9 39.4,56.1 39.6,60.7 40.0,68.5 40.4,72.7 40.9,75.9 41.2,78.0 41.6,78.0 41.8,73.1 42.1,66.4 42.4,60.3 42.6,54.0 42.9,57.0 43.2,57.9 43.4,65.3 43.8,69.9 44.2,75.0 44.9,78.7 45.2,78.7 45.5,72.7 45.8,63.2 46.0,59.3 46.3,55.7 46.6,54.8 46.9,60.7 47.2,67.1 47.7,70.4 48.2,72.4 48.7,73.9 49.1,72.0 49.4,61.1 49.6,57.2 49.8,56.6 50.1,55.4 50.3,57.9 50.6,62.8 50.9,69.9 51.3,73.4 51.6,73.1 51.9,76.3 52.2,76.1 52.6,75.5 52.8,69.9 53.1,65.1 53.4,57.5 53.6,58.2 53.9,59.6 54.2,64.2 54.5,69.0 54.9,72.0 55.3,74.7 55.7,75.7 56.0,75.9 56.3,70.6 56.7,63.5 56.9,59.3 57.2,58.9 57.5,56.4 57.7,61.1 58.0,66.4 58.3,69.5 58.7,72.4 59.3,75.2 59.5,77.2 59.8,75.7 60.0,69.2 60.3,65.3 60.6,61.1 60.8,60.0 61.1,58.6 61.4,62.1 61.6,67.1 62.0,71.3 62.5,74.1 62.9,77.7 63.2,76.3 63.5,74.1 63.8,68.5 64.0,64.2 64.3,62.1 64.6,57.9 64.8,59.1 65.1,65.6 65.5,69.9 65.9,72.7 66.3,75.2 66.7,76.8 67.0,75.7 67.2,69.9 67.5,61.8 67.8,57.5 68.0,55.3 68.3,58.9 68.5,60.0 68.8,66.4 69.1,70.2 69.6,72.2 70.0,73.6 70.4,74.8 70.6,74.1 70.9,69.2 71.2,62.8 71.4,60.0 71.7,55.9 72.0,60.2 72.3,62.8 72.7,67.8 73.1,69.9 73.5,72.5 73.9,74.7 74.2,75.0 74.5,69.2 74.8,60.3 75.0,57.9 75.3,56.4 75.6,57.0 75.9,58.2 76.1,64.2 76.4,67.9 76.8,71.3 77.2,73.6 77.6,74.9 78.0,72.7 78.2,62.5 78.5,56.1 78.8,56.1 79.0,52.9 79.3,54.7 79.5,58.9 79.8,64.9 80.2,67.1 80.6,70.6 81.0,72.7 81.3,70.6 81.4,73.1 81.6,69.9 81.8,62.1 82.1,58.9 82.4,54.3 82.7,57.5 82.9,54.7 83.2,60.7 83.6,64.9 84.0,68.8 84.4,71.3 84.8,73.4 85.1,71.3 85.4,67.8 85.6,62.5 85.9,58.9 86.2,56.6 86.4,54.0 86.7,61.1 87.1,65.3 87.6,67.1 87.9,69.2 88.1,79.8 88.4,80.0 88.6,78.7 88.9,78.2 89.2,76.3 89.5,70.6 89.8,62.8 90.0,62.6 90.2,77.9 90.4,75.5 90.7,77.1 91.1,78.0 91.6,78.4 91.9,78.6 92.2,76.8 92.5,70.6 92.8,67.8 93.0,65.3 93.3,61.4 93.6,58.6 93.8,63.2 94.1,69.2 94.5,72.7 94.8,74.1 95.2,77.3 95.6,77.0 95.8,76.1 96.1,71.7 96.4,65.6 96.6,64.8 96.9,62.8 97.1,62.8 97.4,65.3 97.7,69.9 98.0,74.1 98.3,78.0 98.7,80.7 99.2,83.5 99.6,84.0 99.8,77.0 100.0,72.9 100.3,67.8 100.5,68.5 100.8,65.3 101.1,67.9 101.4,74.1 101.6,78.9 101.9,81.2 102.2,81.9 102.4,84.0 102.7,84.7 103.0,85.5 103.2,81.2 103.5,63.0 103.7,69.5 104.0,63.0 104.3,64.2 104.5,63.9 104.8,65.3 105.1,72.7 105.5,74.5 105.9,77.7 106.3,81.6 106.6,80.5 106.8,79.4 107.1,72.7 107.4,67.1 107.6,64.2 107.9,60.7 108.2,62.8 108.5,69.9 108.8,74.1 109.2,78.0 109.6,81.6 109.9,83.5 110.2,81.6 110.5,79.8 110.7,72.7 111.0,69.9 111.3,66.7 111.6,63.9 111.8,62.6 112.1,67.8 112.3,69.9 112.7,73.8 113.1,75.4 113.5,77.7 113.8,74.8 114.0,75.0 114.3,71.3 114.6,65.6 114.8,64.9 115.1,61.1 115.4,62.8 115.6,65.3 115.9,68.5 116.2,70.6 116.5,72.4 116.9,74.5 117.4,77.4 117.6,75.0 117.9,71.7" fill="none" stroke="#4055a3" stroke-width="0.45" stroke-linejoin="round" opacity="1.0"/><text x="114" y="10.6" font-size="3.1" fill="#068c45" text-anchor="end" opacity="1">Temp FFT (day)</text><text x="115" y="52.6" font-size="3.1" fill="#4055a3" text-anchor="end" opacity="1">Temperature (°F)</text><text x="32" y="91.7" font-size="2.8" fill="#888" text-anchor="middle" opacity="1">Oct 8</text><text x="57" y="91.7" font-size="2.8" fill="#888" text-anchor="middle" opacity="1">Oct 15</text><text x="82.8" y="91.7" font-size="2.8" fill="#888" text-anchor="middle" opacity="1">Oct 22</text><text x="108" y="91.7" font-size="2.8" fill="#888" text-anchor="middle" opacity="1">Oct 29</text><text x="10" y="95.6" font-size="2.6" fill="#888" text-anchor="start" opacity="1">10/1/2018 7:11 AM EDT</text><text x="117.6" y="95.6" font-size="2.6" fill="#888" text-anchor="end" opacity="1">10/31/2018 5:11 PM EDT</text></g></svg>
<span class="t" style="left:23.6px;top:206px;font-size:15.4px;line-height:17px;color:#fff;">1</span>
<svg style="position:absolute;left:131px;top:212.0px;color:#7fbcaf;" width="15" height="9.5" viewBox="0 0 15 9.5" preserveAspectRatio="none" fill="currentColor"><path d="M1.9 0 L7.5 5.6 L13.1 0 L15 1.9 L7.5 9.5 L0 1.9 Z"/></svg>
<svg style="position:absolute;left:23px;top:229.5px;overflow:hidden" width="125" height="100" viewBox="0 0 125 100" font-family="Liberation Sans,sans-serif"><rect width="125" height="100" fill="#fff"/><rect x="8" y="49.4" width="110" height="37.8" fill="#f8f8f8"/><path d="M5 38.2L5.0 33.2L5.8 32.8L6.5 31.4L7.2 33.5L8.0 33.4L8.8 33.2L9.5 34.9L10.2 33.8L11.0 33.5L11.8 33.1L12.5 35.6L13.2 35.0L14.0 35.8L14.8 33.6L15.5 34.1L16.2 36.1L17.0 33.5L17.8 33.7L18.5 34.7L19.2 34.9L20.0 36.2L20.8 36.6L21.5 35.5L22.2 36.6L23.0 36.4L23.8 36.4L24.5 36.9L25.2 36.1L26.0 36.3L26.8 35.7L27.5 36.3L28.2 36.2L29.0 36.5L29.8 36.4L30.5 36.8L31.2 37.1L32.0 36.3L32.8 36.4L33.5 36.7L34.2 36.9L35.0 37.3L35.8 37.5L36.5 37.5L37.2 37.7L38.0 37.3L38.8 37.6L39.5 37.4L40.2 37.7L41.0 37.5L41.8 37.7L42.5 38.0L43.2 38.0L44.0 37.9L44.8 38.0L45.5 38.0L46.2 38.1L47.0 38.1L47.8 38.1L48.5 38.2L49.2 38.2L50.0 38.2L50 38.2Z" fill="#4055a3" opacity="0.75"/><path d="M5 38.2H116" stroke="#4055a3" stroke-width="0.4" stroke-dasharray="0.8 0.7" opacity="0.45"/><path d="M15.6 38.2L16.15 18.6L16.85 18.6L17.4 38.2Z" fill="#4055a3" opacity="0.9"/><path d="M26.200000000000003 38.2L26.75 33.2L27.450000000000003 33.2L28.0 38.2Z" fill="#4055a3" opacity="0.9"/><path d="M4.0 46.2l4.6 -5.4M7.0 46.2l4.6 -5.4M10.1 46.2l4.6 -5.4M13.1 46.2l4.6 -5.4M16.2 46.2l4.6 -5.4M19.2 46.2l4.6 -5.4M22.3 46.2l4.6 -5.4M25.3 46.2l4.6 -5.4M28.4 46.2l4.6 -5.4M31.4 46.2l4.6 -5.4M34.5 46.2l4.6 -5.4M37.5 46.2l4.6 -5.4M40.6 46.2l4.6 -5.4M43.6 46.2l4.6 -5.4M46.7 46.2l4.6 -5.4M49.8 46.2l4.6 -5.4M52.8 46.2l4.6 -5.4M55.8 46.2l4.6 -5.4M58.9 46.2l4.6 -5.4M61.9 46.2l4.6 -5.4M65.0 46.2l4.6 -5.4M68.0 46.2l4.6 -5.4M71.1 46.2l4.6 -5.4M74.1 46.2l4.6 -5.4M77.2 46.2l4.6 -5.4M80.2 46.2l4.6 -5.4M83.3 46.2l4.6 -5.4M86.3 46.2l4.6 -5.4M89.4 46.2l4.6 -5.4M92.4 46.2l4.6 -5.4M95.5 46.2l4.6 -5.4M98.5 46.2l4.6 -5.4M101.6 46.2l4.6 -5.4M104.6 46.2l4.6 -5.4M107.7 46.2l4.6 -5.4M110.8 46.2l4.6 -5.4" stroke="#888" stroke-width="0.7" fill="none" opacity="0.32" stroke-dasharray="1.6 0.7"/><path d="M8.2 49.4V87.2" stroke="#068c45" stroke-width="0.5" opacity="0.7"/><polyline points="8.0,69.8 8.4,71.7 8.8,73.8 9.1,71.3 9.3,69.2 9.5,66.4 9.8,60.7 10.0,59.6 10.2,55.7 10.4,55.7 10.5,56.6 10.6,57.9 10.7,58.9 11.0,61.8 11.3,65.1 11.6,67.4 12.0,69.4 12.4,72.0 12.7,73.9 12.8,69.9 13.0,70.9 13.2,65.3 13.4,60.3 13.5,61.9 13.6,67.1 13.7,71.3 13.9,69.8 14.0,69.4 14.3,72.7 14.6,76.3 14.9,78.4 15.0,81.9 15.3,83.3 15.5,84.0 15.7,83.5 15.9,83.2 16.1,85.8 16.3,84.7 16.4,83.0 16.6,82.8 16.9,79.8 17.1,77.5 17.3,77.0 17.4,80.2 17.6,80.0 17.8,74.1 18.0,75.5 18.2,77.7 18.5,80.6 18.8,79.9 19.3,80.0 19.6,80.8 19.9,80.3 20.1,76.6 20.2,71.8 20.4,69.2 20.6,67.9 20.7,63.5 20.9,60.7 21.1,60.3 21.3,62.5 21.5,59.5 21.6,66.0 21.8,68.5 22.1,73.1 22.5,74.5 22.9,76.1 23.3,76.1 23.6,76.1 23.8,73.4 24.0,69.9 24.1,65.3 24.3,60.3 24.5,57.9 24.7,57.3 24.8,58.6 25.0,58.9 25.1,60.0 25.4,61.4 25.6,65.3 25.9,67.8 26.3,69.5 26.6,71.7 26.9,73.6 27.2,74.1 27.4,69.9 27.6,63.9 27.8,59.6 27.9,55.7 28.1,56.3 28.3,50.6 28.4,59.8 28.6,56.3 28.8,55.9 29.1,60.0 29.3,66.4 29.5,66.5 29.7,69.7 30.1,72.4 30.5,75.0 30.7,76.3 31.0,69.5 31.2,65.3 31.4,61.8 31.6,57.5 31.8,59.3 31.9,58.6 32.1,55.4 32.3,53.4 32.5,54.7 32.7,60.7 32.9,66.0 33.2,68.5 33.4,70.9 33.7,73.4 34.0,74.7 34.3,74.8 34.5,72.7 34.7,69.5 34.9,62.8 35.1,62.8 35.3,59.3 35.4,62.1 35.6,60.3 35.8,61.4 36.0,64.9 36.2,69.2 36.5,71.3 36.9,73.8 37.2,75.7 37.5,77.7 37.8,78.7 38.0,77.0 38.2,72.0 38.4,67.8 38.5,62.8 38.7,59.3 38.9,57.2 39.1,57.9 39.3,57.5 39.4,57.0 39.6,60.7 39.8,66.4 40.1,69.9 40.4,72.7 40.7,75.5 41.0,76.6 41.2,78.0 41.4,79.0 41.6,75.9 41.8,73.1 42.0,68.5 42.2,64.2 42.4,60.3 42.5,57.2 42.7,57.2 42.9,57.0 43.1,56.3 43.3,60.7 43.4,65.3 43.6,67.9 43.9,71.7 44.2,75.0 44.6,78.0 45.0,79.0 45.2,78.7 45.4,74.8 45.6,69.9 45.8,63.2 46.0,60.7 46.1,60.3 46.3,55.7 46.5,54.9 46.7,55.7 46.9,60.7 47.1,64.6 47.3,68.8 47.7,70.4 48.0,71.9 48.4,72.9 48.7,73.9 49.0,74.1 49.2,67.1 49.4,61.1 49.5,59.3 49.6,54.0 49.8,56.6 50.0,57.2 50.1,60.0 50.3,57.9 50.5,62.1 50.7,64.2 50.9,69.9 51.2,72.9 51.4,73.1 51.6,73.1 51.8,75.2 52.1,76.3 52.2,76.1 52.5,76.8 52.7,74.1 52.8,69.9 53.0,64.2 53.2,60.3 53.4,57.5 53.6,58.7 53.7,59.1 53.9,59.6 54.1,62.1 54.3,66.0 54.5,69.0 54.8,70.9 55.0,72.7 55.3,74.7 55.6,75.8 55.8,76.1 56.0,75.9 56.2,72.7 56.4,68.5 56.7,63.5 56.8,58.2 57.0,56.3 57.2,58.9 57.4,60.0 57.6,60.3 57.7,61.1 57.9,64.6 58.1,67.8 58.3,69.5 58.6,71.8 58.9,73.1 59.3,75.2 59.5,77.0 59.6,74.5 59.8,75.7 59.9,71.7 60.1,67.1 60.3,65.3 60.5,63.5 60.7,61.8 60.8,60.0 61.0,60.7 61.2,61.6 61.4,62.1 61.6,65.6 61.8,68.5 62.0,71.3 62.3,73.4 62.6,75.0 62.9,77.7 63.1,78.7 63.3,77.0 63.5,74.1 63.7,71.3 63.8,67.1 64.0,64.2 64.2,60.0 64.4,58.0 64.6,57.9 64.7,62.8 64.9,62.1 65.1,65.6 65.3,68.8 65.6,70.6 65.9,72.7 66.1,74.5 66.4,75.7 66.7,76.8 66.9,75.9 67.0,74.1 67.2,69.9 67.4,65.6 67.6,60.3 67.8,57.5 67.9,56.6 68.1,57.2 68.3,58.9 68.4,59.3 68.6,62.1 68.8,66.4 69.0,69.5 69.3,70.9 69.6,72.2 69.8,73.1 70.1,74.0 70.4,74.8 70.5,74.3 70.7,72.7 70.9,69.2 71.1,66.4 71.3,63.9 71.4,60.0 71.6,56.1 71.8,58.9 72.0,60.2 72.2,59.3 72.4,64.6 72.7,67.8 72.9,69.0 73.2,70.9 73.5,72.5 73.7,74.0 74.0,75.0 74.2,75.0 74.4,71.7 74.6,66.4 74.8,60.3 75.0,60.0 75.1,61.2 75.3,56.4 75.5,56.6 75.7,59.6 75.9,58.2 76.0,62.1 76.2,66.0 76.4,67.9 76.7,69.7 77.0,72.4 77.2,73.6 77.5,74.7 77.8,74.8 78.0,72.7 78.2,66.4 78.3,64.4 78.5,56.1 78.7,59.3 78.8,61.4 79.0,52.9 79.2,53.1 79.4,56.1 79.5,58.9 79.7,63.2 79.9,65.8 80.2,67.1 80.5,69.2 80.7,71.3 81.0,72.7 81.2,73.6 81.3,71.3 81.4,73.1 81.5,72.7 81.7,66.4 81.8,62.1 82.0,57.9 82.2,53.1 82.4,54.3 82.6,54.1 82.7,54.3 82.9,54.7 83.1,59.3 83.4,62.5 83.6,64.9 83.9,67.8 84.1,69.7 84.4,71.3 84.7,72.7 84.9,71.7 85.1,71.3 85.3,68.5 85.4,64.2 85.6,62.5 85.8,57.9 86.0,56.3 86.2,56.6 86.3,55.7 86.5,58.9 86.7,61.1 87.0,64.2 87.2,66.0 87.6,67.1 87.8,68.5 88.0,73.4 88.1,79.8 88.3,80.3 88.5,79.1 88.6,78.7 88.8,78.6 89.0,78.4 89.2,76.3 89.4,72.7 89.6,69.2 89.8,62.8 89.9,65.3 90.1,62.5 90.2,77.9 90.3,74.7 90.5,76.3 90.7,77.1 91.0,77.7 91.3,77.9 91.6,78.4 91.8,78.7 92.0,79.4 92.2,76.8 92.4,74.8 92.6,68.5 92.8,67.8 92.9,58.7 93.1,61.8 93.3,61.4 93.5,63.9 93.7,62.8 93.8,63.2 94.0,67.1 94.3,69.9 94.5,72.7 94.7,73.1 95.0,74.8 95.2,77.3 95.5,78.4 95.6,78.4 95.8,76.1 96.0,74.5 96.2,69.9 96.4,65.6 96.5,60.0 96.7,58.9 96.9,62.8 97.1,57.9 97.2,60.2 97.4,65.3 97.6,68.5 97.8,71.3 98.0,74.1 98.2,77.0 98.5,79.1 98.7,80.7 99.0,82.8 99.3,84.0 99.6,84.0 99.7,80.5 99.8,73.8 100.0,72.9 100.2,71.3 100.4,69.5 100.5,68.5 100.7,67.8 100.9,65.1 101.1,67.9 101.3,71.3 101.4,77.0 101.6,78.9 101.8,79.8 102.0,81.9 102.2,81.9 102.3,83.5 102.5,84.4 102.7,84.7 102.9,84.7 103.1,84.0 103.2,81.2 103.4,66.4 103.6,68.8 103.7,69.5 103.9,63.9 104.1,63.9 104.3,64.2 104.5,64.6 104.6,64.9 104.8,65.3 105.0,69.9 105.2,73.4 105.5,74.5 105.8,76.3 106.0,78.7 106.3,81.6 106.5,82.9 106.7,81.2 106.8,79.4 107.0,74.8 107.2,71.3 107.4,67.1 107.6,66.4 107.7,64.9 107.9,60.7 108.1,64.2 108.3,64.9 108.5,69.9 108.6,72.7 108.9,75.5 109.2,78.0 109.4,80.7 109.7,82.3 109.9,83.5 110.1,82.6 110.3,80.9 110.5,79.8 110.7,74.8 110.8,69.9 111.0,69.9 111.2,63.4 111.4,64.2 111.6,63.9 111.7,63.9 111.9,65.3 112.1,67.8 112.2,69.5 112.4,71.7 112.7,73.8 113.0,75.0 113.2,76.6 113.5,77.7 113.7,78.0 113.9,74.7 114.0,75.0 114.2,71.7 114.4,72.7 114.6,65.6 114.7,63.5 114.9,62.5 115.1,61.1 115.3,60.9 115.5,59.7 115.6,65.3 115.8,67.8 116.0,69.2 116.2,70.6 116.4,71.3 116.7,73.1 116.9,74.5 117.2,76.6 117.4,74.0 117.6,75.0 117.8,72.7 118.0,69.8" fill="none" stroke="#068c45" stroke-width="0.5" stroke-linejoin="round" opacity="0.72"/><text x="114" y="10.6" font-size="3.0" fill="#4055a3" text-anchor="end" opacity="0.75">Temp avg FFT (day)</text><text x="115" y="52.6" font-size="3.0" fill="#068c45" text-anchor="end" opacity="0.75">Temp avg (°F)</text><text x="32" y="91.7" font-size="2.8" fill="#888" text-anchor="middle" opacity="0.6">Oct 8</text><text x="57" y="91.7" font-size="2.8" fill="#888" text-anchor="middle" opacity="0.6">Oct 15</text><text x="82.8" y="91.7" font-size="2.8" fill="#888" text-anchor="middle" opacity="0.6">Oct 22</text><text x="108" y="91.7" font-size="2.8" fill="#888" text-anchor="middle" opacity="0.6">Oct 29</text><text x="10" y="95.6" font-size="2.6" fill="#888" text-anchor="start" opacity="0.6">10/1/2018 7:11 AM EDT</text><text x="117.6" y="95.6" font-size="2.6" fill="#888" text-anchor="end" opacity="0.6">10/31/2018 5:11 PM EDT</text></svg>
<span class="t" style="left:23.6px;top:332px;font-size:15.4px;line-height:17px;color:#fff;">2</span>
<svg style="position:absolute;left:131px;top:338.0px;color:#7fbcaf;" width="15" height="9.5" viewBox="0 0 15 9.5" preserveAspectRatio="none" fill="currentColor"><path d="M1.9 0 L7.5 5.6 L13.1 0 L15 1.9 L7.5 9.5 L0 1.9 Z"/></svg>
<svg style="position:absolute;left:23px;top:354.5px;overflow:hidden" width="125" height="100" viewBox="0 0 125 100" font-family="Liberation Sans,sans-serif"><rect width="125" height="100" fill="#fff"/><rect x="8" y="49.4" width="110" height="37.8" fill="#f8f8f8"/><path d="M9 38.2L9.0 36.6L9.7 36.5L10.4 36.0L11.2 36.7L11.9 36.7L12.6 36.6L13.3 37.2L14.0 36.8L14.7 36.7L15.4 36.6L16.2 37.4L16.9 37.2L17.6 37.4L18.3 36.7L19.0 36.9L19.8 37.5L20.5 36.7L21.2 36.8L21.9 37.1L22.6 37.2L23.3 37.6L24.1 37.7L24.8 37.3L25.5 37.7L26.2 37.6L26.9 37.6L27.6 37.8L28.4 37.5L29.1 37.6L29.8 37.4L30.5 37.6L31.2 37.6L31.9 37.7L32.6 37.6L33.4 37.7L34.1 37.8L34.8 37.6L35.5 37.6L36.2 37.7L37.0 37.8L37.7 37.9L38.4 38.0L39.1 38.0L39.8 38.0L40.5 37.9L41.2 38.0L42.0 38.0L42.7 38.0L43.4 38.0L44.1 38.0L44.8 38.1L45.5 38.1L46.3 38.1L47.0 38.1L47.7 38.1L48.4 38.2L49.1 38.2L49.9 38.2L50.6 38.2L51.3 38.2L52.0 38.2L52 38.2Z" fill="#4055a3" opacity="0.75"/><path d="M5 38.2H116" stroke="#4055a3" stroke-width="0.4" stroke-dasharray="0.8 0.7" opacity="0.45"/><path d="M15.6 38.2L16.15 12.200000000000003L16.85 12.200000000000003L17.4 38.2Z" fill="#4055a3" opacity="0.9"/><path d="M26.200000000000003 38.2L26.75 26.700000000000003L27.450000000000003 26.700000000000003L28.0 38.2Z" fill="#4055a3" opacity="0.9"/><path d="M38.1 38.2L38.65 34.2L39.35 34.2L39.9 38.2Z" fill="#4055a3" opacity="0.9"/><path d="M4.0 46.2l4.6 -5.4M7.0 46.2l4.6 -5.4M10.1 46.2l4.6 -5.4M13.1 46.2l4.6 -5.4M16.2 46.2l4.6 -5.4M19.2 46.2l4.6 -5.4M22.3 46.2l4.6 -5.4M25.3 46.2l4.6 -5.4M28.4 46.2l4.6 -5.4M31.4 46.2l4.6 -5.4M34.5 46.2l4.6 -5.4M37.5 46.2l4.6 -5.4M40.6 46.2l4.6 -5.4M43.6 46.2l4.6 -5.4M46.7 46.2l4.6 -5.4M49.8 46.2l4.6 -5.4M52.8 46.2l4.6 -5.4M55.8 46.2l4.6 -5.4M58.9 46.2l4.6 -5.4M61.9 46.2l4.6 -5.4M65.0 46.2l4.6 -5.4M68.0 46.2l4.6 -5.4M71.1 46.2l4.6 -5.4M74.1 46.2l4.6 -5.4M77.2 46.2l4.6 -5.4M80.2 46.2l4.6 -5.4M83.3 46.2l4.6 -5.4M86.3 46.2l4.6 -5.4M89.4 46.2l4.6 -5.4M92.4 46.2l4.6 -5.4M95.5 46.2l4.6 -5.4M98.5 46.2l4.6 -5.4M101.6 46.2l4.6 -5.4M104.6 46.2l4.6 -5.4M107.7 46.2l4.6 -5.4M110.8 46.2l4.6 -5.4" stroke="#888" stroke-width="0.7" fill="none" opacity="0.32" stroke-dasharray="1.6 0.7"/><path d="M8.2 49.4V87.2" stroke="#068c45" stroke-width="0.5" opacity="0.7"/><polyline points="8.0,69.5 8.4,74.5 8.8,81.8 9.1,79.7 9.3,76.8 9.5,73.5 9.8,64.7 10.0,64.3 10.2,60.2 10.4,59.8 10.5,61.4 10.6,61.7 10.7,63.6 11.0,66.4 11.3,71.1 11.6,74.1 12.0,74.4 12.4,74.8 12.7,76.0 12.8,71.2 13.0,71.7 13.2,62.6 13.4,56.3 13.5,56.7 13.6,63.3 13.7,67.4 13.9,64.8 14.0,64.8 14.3,66.8 14.6,70.1 14.9,72.8 15.0,76.2 15.3,75.2 15.5,75.5 15.7,73.2 15.9,72.4 16.1,75.1 16.3,74.7 16.4,72.1 16.6,72.2 16.9,68.3 17.1,64.7 17.3,64.3 17.4,68.3 17.6,68.2 17.8,60.9 18.0,63.5 18.2,67.3 18.5,71.2 18.8,72.7 19.3,75.4 19.6,79.2 19.9,81.2 20.1,76.3 20.2,70.4 20.4,67.6 20.6,66.6 20.7,60.2 20.9,58.3 21.1,56.7 21.3,60.8 21.5,57.1 21.6,63.9 21.8,68.9 22.1,74.2 22.5,77.4 22.9,79.3 23.3,80.0 23.6,80.2 23.8,78.7 24.0,73.3 24.1,68.7 24.3,62.6 24.5,59.7 24.7,58.3 24.8,60.1 25.0,60.9 25.1,62.8 25.4,63.7 25.6,69.8 25.9,73.4 26.3,76.6 26.6,78.6 26.9,82.5 27.2,82.1 27.4,77.2 27.6,70.2 27.8,65.2 27.9,59.1 28.1,60.7 28.3,53.2 28.4,64.1 28.6,59.6 28.8,58.7 29.1,63.7 29.3,72.1 29.5,73.2 29.7,77.6 30.1,78.7 30.5,82.0 30.7,85.3 31.0,76.3 31.2,70.7 31.4,65.9 31.6,61.1 31.8,63.6 31.9,62.1 32.1,58.0 32.3,55.0 32.5,57.6 32.7,63.4 32.9,70.9 33.2,74.6 33.4,76.7 33.7,80.4 34.0,81.5 34.3,80.6 34.5,77.2 34.7,71.7 34.9,63.3 35.1,62.6 35.3,59.2 35.4,61.7 35.6,59.6 35.8,61.7 36.0,65.6 36.2,71.0 36.5,72.7 36.9,76.1 37.2,79.3 37.5,81.7 37.8,83.1 38.0,81.4 38.2,74.8 38.4,70.0 38.5,64.8 38.7,60.3 38.9,56.8 39.1,57.5 39.3,56.8 39.4,55.3 39.6,60.3 39.8,68.3 40.1,72.8 40.4,75.3 40.7,79.5 41.0,80.9 41.2,82.7 41.4,83.9 41.6,80.3 41.8,76.0 42.0,70.8 42.2,64.7 42.4,60.1 42.5,56.9 42.7,56.7 42.9,56.2 43.1,56.3 43.3,61.8 43.4,67.0 43.6,69.4 43.9,75.0 44.2,79.1 44.6,82.9 45.0,83.9 45.2,84.2 45.4,79.1 45.6,73.1 45.8,64.0 46.0,61.5 46.1,61.4 46.3,55.9 46.5,54.3 46.7,56.4 46.9,62.9 47.1,68.0 47.3,74.2 47.7,76.6 48.0,78.7 48.4,79.7 48.7,80.1 49.0,81.5 49.2,72.7 49.4,64.0 49.5,62.0 49.6,55.1 49.8,58.4 50.0,57.8 50.1,61.8 50.3,58.7 50.5,63.8 50.7,65.9 50.9,73.2 51.2,76.8 51.4,76.5 51.6,76.0 51.8,77.5 52.1,79.0 52.2,79.1 52.5,80.3 52.7,76.2 52.8,71.5 53.0,64.5 53.2,58.9 53.4,55.8 53.6,57.1 53.7,57.3 53.9,58.1 54.1,61.8 54.3,66.5 54.5,70.3 54.8,72.8 55.0,75.9 55.3,78.4 55.6,80.2 55.8,80.6 56.0,79.9 56.2,77.0 56.4,70.2 56.7,64.7 56.8,57.8 57.0,55.8 57.2,58.8 57.4,61.3 57.6,61.4 57.7,61.0 57.9,66.5 58.1,69.5 58.3,72.4 58.6,74.9 58.9,76.4 59.3,79.5 59.5,81.4 59.6,77.6 59.8,79.7 59.9,74.3 60.1,68.0 60.3,65.5 60.5,64.0 60.7,61.4 60.8,59.8 61.0,60.6 61.2,60.7 61.4,61.5 61.6,66.6 61.8,68.8 62.0,72.3 62.3,75.7 62.6,77.8 62.9,80.4 63.1,82.4 63.3,80.5 63.5,76.0 63.7,72.4 63.8,66.7 64.0,63.4 64.2,59.0 64.4,55.6 64.6,56.5 64.7,62.5 64.9,61.1 65.1,65.2 65.3,70.6 65.6,72.3 65.9,75.3 66.1,77.7 66.4,80.7 66.7,81.4 66.9,80.1 67.0,78.3 67.2,72.3 67.4,67.7 67.6,60.9 67.8,56.9 67.9,56.6 68.1,57.4 68.3,58.7 68.4,59.8 68.6,63.1 68.8,69.6 69.0,73.5 69.3,74.5 69.6,76.0 69.8,76.6 70.1,79.0 70.4,79.0 70.5,78.8 70.7,76.6 70.9,72.5 71.1,69.0 71.3,66.2 71.4,60.3 71.6,56.5 71.8,59.4 72.0,61.3 72.2,59.9 72.4,66.7 72.7,70.9 72.9,72.5 73.2,75.2 73.5,77.7 73.7,79.2 74.0,79.7 74.2,80.5 74.4,76.7 74.6,70.8 74.8,63.2 75.0,62.2 75.1,62.9 75.3,58.0 75.5,57.7 75.7,61.7 75.9,60.2 76.0,65.0 76.2,69.7 76.4,73.1 76.7,74.5 77.0,78.2 77.2,80.6 77.5,81.2 77.8,81.7 78.0,80.0 78.2,70.8 78.3,69.7 78.5,59.0 78.7,62.8 78.8,65.3 79.0,55.4 79.2,55.9 79.4,58.6 79.5,62.2 79.7,67.0 79.9,70.8 80.2,72.2 80.5,74.6 80.7,77.8 81.0,79.9 81.2,80.0 81.3,77.3 81.4,80.3 81.5,79.8 81.7,71.6 81.8,65.3 82.0,61.1 82.2,55.4 82.4,57.0 82.6,56.5 82.7,55.5 82.9,57.2 83.1,62.2 83.4,67.8 83.6,71.3 83.9,74.1 84.1,75.5 84.4,77.6 84.7,80.4 84.9,77.6 85.1,77.7 85.3,73.8 85.4,68.0 85.6,66.5 85.8,59.8 86.0,58.1 86.2,58.9 86.3,56.2 86.5,59.6 86.7,62.6 87.0,66.0 87.2,67.5 87.6,66.0 87.8,66.9 88.0,72.4 88.1,80.9 88.3,80.9 88.5,78.9 88.6,77.0 88.8,75.4 89.0,75.9 89.2,71.9 89.4,67.5 89.6,62.6 89.8,54.6 89.9,57.0 90.1,53.8 90.2,72.9 90.3,69.4 90.5,70.9 90.7,73.3 91.0,74.6 91.3,75.4 91.6,77.0 91.8,77.9 92.0,79.9 92.2,76.4 92.4,75.2 92.6,67.5 92.8,65.9 92.9,55.5 93.1,58.8 93.3,58.4 93.5,62.6 93.7,60.7 93.8,61.6 94.0,66.0 94.3,69.6 94.5,73.8 94.7,73.1 95.0,76.6 95.2,78.7 95.5,80.5 95.6,81.6 95.8,78.0 96.0,75.1 96.2,68.9 96.4,64.9 96.5,56.9 96.7,55.7 96.9,59.3 97.1,53.9 97.2,55.8 97.4,61.9 97.6,66.3 97.8,69.7 98.0,72.0 98.2,75.1 98.5,76.6 98.7,78.8 99.0,80.6 99.3,82.0 99.6,81.1 99.7,77.0 99.8,67.7 100.0,66.5 100.2,64.1 100.4,61.8 100.5,59.6 100.7,58.0 100.9,54.2 101.1,57.7 101.3,61.7 101.4,70.1 101.6,72.6 101.8,74.6 102.0,76.4 102.2,77.4 102.3,80.4 102.5,81.3 102.7,81.6 102.9,81.7 103.1,80.5 103.2,77.3 103.4,58.8 103.6,62.6 103.7,63.9 103.9,58.1 104.1,57.3 104.3,58.5 104.5,59.6 104.6,60.1 104.8,61.0 105.0,66.9 105.2,71.6 105.5,71.4 105.8,75.1 106.0,77.2 106.3,82.0 106.5,83.3 106.7,80.9 106.8,78.0 107.0,73.0 107.2,67.2 107.4,62.4 107.6,60.8 107.7,59.6 107.9,54.0 108.1,57.4 108.3,58.2 108.5,64.2 108.6,68.0 108.9,71.3 109.2,75.0 109.4,79.3 109.7,80.1 109.9,81.3 110.1,80.4 110.3,78.0 110.5,77.6 110.7,71.6 110.8,64.5 111.0,64.9 111.2,57.5 111.4,59.2 111.6,58.6 111.7,58.4 111.9,61.7 112.1,63.5 112.2,66.2 112.4,70.5 112.7,72.7 113.0,74.0 113.2,76.9 113.5,79.3 113.7,79.0 113.9,74.8 114.0,74.9 114.2,70.7 114.4,73.5 114.6,64.0 114.7,62.1 114.9,59.6 115.1,58.2 115.3,57.6 115.5,57.0 115.6,63.5 115.8,67.0 116.0,69.1 116.2,70.7 116.4,71.2 116.7,72.9 116.9,75.2 117.2,75.4 117.4,71.5 117.6,71.9 117.8,68.7 118.0,63.8" fill="none" stroke="#068c45" stroke-width="0.5" stroke-linejoin="round" opacity="0.7"/><text x="114" y="10.6" font-size="2.9" fill="#4055a3" text-anchor="end" opacity="0.75">Temp HighPassFilter FFT (day)</text><text x="115" y="52.8" font-size="2.9" fill="#068c45" text-anchor="end" opacity="0.75">Temp HighPassFilter (°F)</text><text x="32" y="91.7" font-size="2.8" fill="#888" text-anchor="middle" opacity="0.6">Oct 8</text><text x="57" y="91.7" font-size="2.8" fill="#888" text-anchor="middle" opacity="0.6">Oct 15</text><text x="82.8" y="91.7" font-size="2.8" fill="#888" text-anchor="middle" opacity="0.6">Oct 22</text><text x="108" y="91.7" font-size="2.8" fill="#888" text-anchor="middle" opacity="0.6">Oct 29</text><text x="10" y="95.6" font-size="2.6" fill="#888" text-anchor="start" opacity="0.6">10/1/2018 7:11 AM EDT</text><text x="117.6" y="95.6" font-size="2.6" fill="#888" text-anchor="end" opacity="0.6">10/31/2018 5:11 PM EDT</text></svg>
<span class="t" style="left:23.6px;top:458px;font-size:15.4px;line-height:17px;color:#fff;">3</span>
<svg style="position:absolute;left:131px;top:463.0px;color:#7fbcaf;" width="15" height="9.5" viewBox="0 0 15 9.5" preserveAspectRatio="none" fill="currentColor"><path d="M1.9 0 L7.5 5.6 L13.1 0 L15 1.9 L7.5 9.5 L0 1.9 Z"/></svg>
<svg style="position:absolute;left:23px;top:480.5px;overflow:hidden" width="125" height="100" viewBox="0 0 125 100" font-family="Liberation Sans,sans-serif"><rect width="125" height="100" fill="#fff"/><rect x="7.2" y="49.4" width="111" height="37.8" fill="#f8f8f8"/><path d="M4.2 38.2L4.4 13.8L5 30L5.8 35.5L7.5 37.5L12 38.2Z" fill="#068c45" opacity="0.6"/><path d="M19.6 38.2L20.2 29.6L20.8 38.2Z" fill="#068c45" opacity="0.6"/><path d="M4.0 46.2l4.6 -5.4M7.0 46.2l4.6 -5.4M10.1 46.2l4.6 -5.4M13.1 46.2l4.6 -5.4M16.2 46.2l4.6 -5.4M19.2 46.2l4.6 -5.4M22.3 46.2l4.6 -5.4M25.3 46.2l4.6 -5.4M28.4 46.2l4.6 -5.4M31.4 46.2l4.6 -5.4M34.5 46.2l4.6 -5.4M37.5 46.2l4.6 -5.4M40.6 46.2l4.6 -5.4M43.6 46.2l4.6 -5.4M46.7 46.2l4.6 -5.4M49.8 46.2l4.6 -5.4M52.8 46.2l4.6 -5.4M55.8 46.2l4.6 -5.4M58.9 46.2l4.6 -5.4M61.9 46.2l4.6 -5.4M65.0 46.2l4.6 -5.4M68.0 46.2l4.6 -5.4M71.1 46.2l4.6 -5.4M74.1 46.2l4.6 -5.4M77.2 46.2l4.6 -5.4M80.2 46.2l4.6 -5.4M83.3 46.2l4.6 -5.4M86.3 46.2l4.6 -5.4M89.4 46.2l4.6 -5.4M92.4 46.2l4.6 -5.4M95.5 46.2l4.6 -5.4M98.5 46.2l4.6 -5.4M101.6 46.2l4.6 -5.4M104.6 46.2l4.6 -5.4M107.7 46.2l4.6 -5.4M110.8 46.2l4.6 -5.4" stroke="#888" stroke-width="0.7" fill="none" opacity="0.32" stroke-dasharray="1.6 0.7"/><path d="M7.1 49.4V87.2" stroke="#4055a3" stroke-width="0.5" opacity="0.5"/><polyline points="7.1,64.2 8.9,59.8 11.0,57.2 13.7,63.3 15.8,70.3 18.0,68.1 20.2,67.2 22.8,69.4 25.0,55.5 26.7,61.6 28.9,70.3 30.6,74.2 32.3,73.7 35.4,77.2 37.6,72.9 39.7,65.0 41.5,70.3 43.7,69.4 45.4,75.5 47.1,80.7 48.2,79.0 49.3,81.6 51.5,69.4 52.8,66.8 55.0,64.2 57.6,52.0 58.9,58.1 60.2,59.8 63.7,66.8 66.3,72.9 68.9,76.3 70.6,72.0 73.2,58.1 75.0,64.2 76.7,67.7 79.7,70.3 81.9,78.1 83.7,80.3 85.4,79.0 87.1,72.0 90.2,60.7 91.9,67.7 92.8,65.0 95.0,75.5 97.6,76.3 100.2,81.6 102.8,77.2 106.3,63.3 108.9,71.1 109.7,75.5 111.0,67.7 111.9,73.7 113.2,79.0 115.4,81.6 117.6,84.2" fill="none" stroke="#4055a3" stroke-width="2.3" stroke-linejoin="round" opacity="0.92"/><text x="114" y="10.6" font-size="3.0" fill="#068c45" text-anchor="end" opacity="0.75">Press avg FFT (day)</text><text x="115" y="52.6" font-size="3.0" fill="#4055a3" text-anchor="end" opacity="0.75">Press avg (psi)</text><text x="13.2" y="91.7" font-size="2.8" fill="#888" text-anchor="middle" opacity="0.6">Nov 10</text><text x="29.3" y="91.7" font-size="2.8" fill="#888" text-anchor="middle" opacity="0.6">Nov 11</text><text x="45.4" y="91.7" font-size="2.8" fill="#888" text-anchor="middle" opacity="0.6">Nov 12</text><text x="61" y="91.7" font-size="2.8" fill="#888" text-anchor="middle" opacity="0.6">Nov 13</text><text x="77" y="91.7" font-size="2.8" fill="#888" text-anchor="middle" opacity="0.6">Nov 14</text><text x="93.2" y="91.7" font-size="2.8" fill="#888" text-anchor="middle" opacity="0.6">Nov 15</text><text x="108.9" y="91.7" font-size="2.8" fill="#888" text-anchor="middle" opacity="0.6">Nov 16</text><text x="10" y="95.6" font-size="2.6" fill="#888" text-anchor="start" opacity="0.6">11/9/2018 12:00 PM EDT</text><text x="117.6" y="95.6" font-size="2.6" fill="#888" text-anchor="end" opacity="0.6">11/16/2018 12:00 PM EDT</text></svg>
<span class="t" style="left:23.6px;top:584px;font-size:15.4px;line-height:17px;color:#fff;">4</span>
<svg style="position:absolute;left:131px;top:589.0px;color:#7fbcaf;" width="15" height="9.5" viewBox="0 0 15 9.5" preserveAspectRatio="none" fill="currentColor"><path d="M1.9 0 L7.5 5.6 L13.1 0 L15 1.9 L7.5 9.5 L0 1.9 Z"/></svg>
<svg style="position:absolute;left:23px;top:606px;overflow:hidden" width="125" height="100" viewBox="0 0 125 100" font-family="Liberation Sans,sans-serif"><rect width="125" height="100" fill="#fff"/><rect x="7.2" y="5.9" width="111" height="40" fill="#f8f8f8"/><path d="M7.1 5.9V45.9" stroke="#4055a3" stroke-width="0.5" opacity="0.5"/><polyline points="7.1,20.7 8.9,16.3 11.0,13.7 13.7,19.8 15.8,26.8 18.0,24.6 20.2,23.7 22.8,25.9 25.0,12.0 26.7,18.1 28.9,26.8 30.6,30.7 32.3,30.2 35.4,33.7 37.6,29.4 39.7,21.5 41.5,26.8 43.7,25.9 45.4,32.0 47.1,37.2 48.2,35.5 49.3,38.1 51.5,25.9 52.8,23.3 55.0,20.7 57.6,8.5 58.9,14.6 60.2,16.3 63.7,23.3 66.3,29.4 68.9,32.8 70.6,28.5 73.2,14.6 75.0,20.7 76.7,24.2 79.7,26.8 81.9,34.6 83.7,36.8 85.4,35.5 87.1,28.5 90.2,17.2 91.9,24.2 92.8,21.5 95.0,32.0 97.6,32.8 100.2,38.1 102.8,33.7 106.3,19.8 108.9,27.6 109.7,32.0 111.0,24.2 111.9,30.2 113.2,35.5 115.4,38.1 117.6,40.7" fill="none" stroke="#4055a3" stroke-width="2.3" stroke-linejoin="round" opacity="0.92"/><path d="M7.1 48V88" stroke="#068c45" stroke-width="0.5" opacity="0.5"/><polyline points="7.1,63.7 8.9,59.3 11.0,56.7 13.7,62.8 15.8,69.8 18.0,67.6 20.2,66.7 22.8,68.9 25.0,55.0 26.7,61.1 28.9,69.8 30.6,73.7 32.3,73.2 35.4,76.7 37.6,72.4 39.7,64.5 41.5,69.8 43.7,68.9 45.4,75.0 47.1,80.2 48.2,78.5 49.3,81.1 51.5,68.9 52.8,66.3 55.0,63.7 57.6,51.5 58.9,57.6 60.2,59.3 63.7,66.3 66.3,72.4 68.9,75.8 70.6,71.5 73.2,57.6 75.0,63.7 76.7,67.2 79.7,69.8 81.9,77.6 83.7,79.8 85.4,78.5 87.1,71.5 90.2,60.2 91.9,67.2 92.8,64.5 95.0,75.0 97.6,75.8 100.2,81.1 102.8,76.7 106.3,62.8 108.9,70.6 109.7,75.0 111.0,67.2 111.9,73.2 113.2,78.5 115.4,81.1 117.6,83.7" fill="none" stroke="#068c45" stroke-width="0.55" stroke-linejoin="round" opacity="0.55"/><text x="115" y="9.2" font-size="3.0" fill="#4055a3" text-anchor="end" opacity="0.75">Press (psi)</text><text x="115" y="51.4" font-size="3.0" fill="#068c45" text-anchor="end" opacity="0.75">Press LowPassFilter (psi)</text><text x="13.2" y="91.7" font-size="2.8" fill="#888" text-anchor="middle" opacity="0.6">Nov 10</text><text x="29.3" y="91.7" font-size="2.8" fill="#888" text-anchor="middle" opacity="0.6">Nov 11</text><text x="45.4" y="91.7" font-size="2.8" fill="#888" text-anchor="middle" opacity="0.6">Nov 12</text><text x="61" y="91.7" font-size="2.8" fill="#888" text-anchor="middle" opacity="0.6">Nov 13</text><text x="77" y="91.7" font-size="2.8" fill="#888" text-anchor="middle" opacity="0.6">Nov 14</text><text x="93.2" y="91.7" font-size="2.8" fill="#888" text-anchor="middle" opacity="0.6">Nov 15</text><text x="108.9" y="91.7" font-size="2.8" fill="#888" text-anchor="middle" opacity="0.6">Nov 16</text><text x="10" y="95.6" font-size="2.6" fill="#888" text-anchor="start" opacity="0.6">11/9/2018 12:00 PM EDT</text><text x="117.6" y="95.6" font-size="2.6" fill="#888" text-anchor="end" opacity="0.6">11/16/2018 12:00 PM EDT</text></svg>
<span class="t" style="left:23.6px;top:709px;font-size:15.4px;line-height:17px;color:#fff;">5</span>
<svg style="position:absolute;left:131px;top:714.5px;color:#7fbcaf;" width="15" height="9.5" viewBox="0 0 15 9.5" preserveAspectRatio="none" fill="currentColor"><path d="M1.9 0 L7.5 5.6 L13.1 0 L15 1.9 L7.5 9.5 L0 1.9 Z"/></svg>
<svg style="position:absolute;left:118px;top:142px" width="20" height="20" viewBox="0 0 20 20"><path d="M13.5 1 L19 6.5 L7 18.5 L1 19 L1.5 13 Z" fill="#7fc9ad" opacity="0.85"/><path d="M3 14.5 L5.5 17" stroke="#fff" stroke-width="1.2"/></svg></div>
<div id="header"><div style="position:absolute;left:0px;top:0px;width:2558px;height:54px;background:#007960;"></div>
<div style="position:absolute;left:163px;top:54px;width:2395px;height:1px;background:#4d9f8d;"></div>
<div style="position:absolute;left:0px;top:0px;width:53px;height:53px;background:#124734;"></div>
<svg style="position:absolute;left:14.5px;top:16.5px;color:#fff;" width="23.5" height="19.5" viewBox="0 0 24 20" preserveAspectRatio="none" fill="currentColor"><rect x="0" y="0" width="11" height="9" rx="1.5"/><rect x="13" y="0" width="11" height="9" rx="1.5"/><rect x="0" y="11" width="11" height="9" rx="1.5"/><rect x="13" y="11" width="11" height="9" rx="1.5"/></svg>
<svg style="position:absolute;left:66px;top:8px" width="90" height="40" viewBox="0 0 90 40"><text x="5.0" y="29.6" font-family="Liberation Sans,sans-serif" font-weight="700" font-size="34.5" fill="#fff" stroke="#fff" stroke-width="0.15" textLength="54.2" lengthAdjust="spacingAndGlyphs">See</text><text x="59.2" y="29.6" font-family="Liberation Sans,sans-serif" font-weight="700" font-size="25.5" fill="#fff" stroke="#fff" stroke-width="0.15" textLength="21.8" lengthAdjust="spacingAndGlyphs">Q</text></svg>
<svg style="position:absolute;left:179px;top:20px;color:#6cc04a;" width="14.5" height="12" viewBox="0 0 17 13" preserveAspectRatio="none" fill="currentColor"><path d="M0.3 7.2 L2.8 4.7 L6.3 8.2 L14.3 0.2 L16.8 2.7 L6.3 13.2 Z"/></svg>
<span class="t" style="left:197.0px;top:18px;font-size:14.8px;line-height:16px;color:#fff;-webkit-text-stroke:0.3px #fff;">4 Connected</span>
<span class="t" style="left:1138.5px;top:16px;font-size:19.4px;line-height:22px;color:#fff;letter-spacing:-0.65px;">FFT Pressure - 1</span>
<svg style="position:absolute;left:2132px;top:13.2px;color:#e6f2ef;" width="24.5" height="22" viewBox="0 0 24 22" preserveAspectRatio="none" fill="currentColor"><path d="M9 0 L9 4.8 H14 C20.5 4.8 24.3 8.6 24.3 14.5 C24.3 17.6 23.2 20.3 22 22 C22.3 16.6 21 12.2 14 12.2 H9 V17 L0 8.5 Z"/></svg>
<svg style="position:absolute;left:2172px;top:13.2px;color:#c4c4c4;" width="24.5" height="22" viewBox="0 0 24 22" preserveAspectRatio="none" fill="currentColor"><path d="M15 0 L15 4.8 H10 C3.5 4.8 -0.3 8.6 -0.3 14.5 C-0.3 17.6 0.8 20.3 2 22 C1.7 16.6 3 12.2 10 12.2 H15 V17 L24 8.5 Z"/></svg>
<svg style="position:absolute;left:2212.5px;top:13.2px;color:#c4c4c4;" width="25" height="22" viewBox="0 0 25 22" preserveAspectRatio="none" fill="currentColor"><path d="M12 0 L12 4.8 H9 C3 4.8 -0.3 8.6 -0.3 14.5 C-0.3 17.6 0.8 20.3 2 22 C1.7 16.6 3 12.2 9 12.2 H12 V17 L20 8.5 Z"/><path d="M16 0.5 L24.5 8.5 L16 16.5 L14.8 15.3 L22 8.5 L14.8 1.7 Z"/></svg>
<svg style="position:absolute;left:2255px;top:13px;color:#e6f2ef;" width="25" height="22" viewBox="0 0 25 22" preserveAspectRatio="none" fill="currentColor"><circle cx="17.4" cy="5" r="4.9"/><path d="M14 10.2 C18 9 25 9.8 25 15.5 V19.6 H14 Z"/><g stroke="#007960" stroke-width="1.1"><circle cx="8.4" cy="7.4" r="5.4"/><path d="M0.2 22.4 V18.5 C0.2 14.3 3 12.4 5 12.2 C7 13.9 9.8 13.9 11.8 12.2 C13.8 12.4 16.6 14.3 16.6 18.5 V22.4 Z"/></g></svg>
<svg style="position:absolute;left:2301px;top:14px;color:#e6f2ef;" width="21" height="22" viewBox="0 0 21 22" preserveAspectRatio="none" fill="currentColor"><path fill-rule="evenodd" d="M4 0.5 H17 A4 4 0 0 1 21 4.5 V17.5 A4 4 0 0 1 17 21.5 H4 A4 4 0 0 1 0 17.5 V4.5 A4 4 0 0 1 4 0.5 Z M9 4.5 L12.2 7.7 L4.6 15.3 L6.7 17.4 L14.3 9.8 L17.5 13 V4.5 Z"/></svg>
<span class="t" style="left:2331.0px;top:19px;font-size:15.4px;line-height:17px;color:#fff;letter-spacing:-0.03px;-webkit-text-stroke:0.3px #fff;">Get link</span>
<div style="position:absolute;left:2401px;top:0px;width:1px;height:54px;background:#3d9a85;"></div>
<svg style="position:absolute;left:2417px;top:14px;color:#e6f2ef;" width="18" height="22" viewBox="0 0 18 22" preserveAspectRatio="none" fill="currentColor"><circle cx="9" cy="5.5" r="5.3"/><path d="M0 22 V17.5 C0 13.5 3 11.7 5.4 11.5 C7.5 13.2 10.5 13.2 12.6 11.5 C15 11.7 18 13.5 18 17.5 V22 Z"/></svg>
<span class="t" style="left:2445.0px;top:19px;font-size:15.0px;line-height:17px;color:#fff;letter-spacing:0.05px;-webkit-text-stroke:0.3px #fff;">Lindsey</span>
<svg style="position:absolute;left:2524px;top:16px;color:#e6f2ef;" width="21" height="18" viewBox="0 0 21 18" preserveAspectRatio="none" fill="currentColor"><rect x="0" y="0" width="21" height="3.6"/><rect x="0" y="7.2" width="21" height="3.6"/><rect x="0" y="14.4" width="21" height="3.6"/></svg></div>
</body></html>
